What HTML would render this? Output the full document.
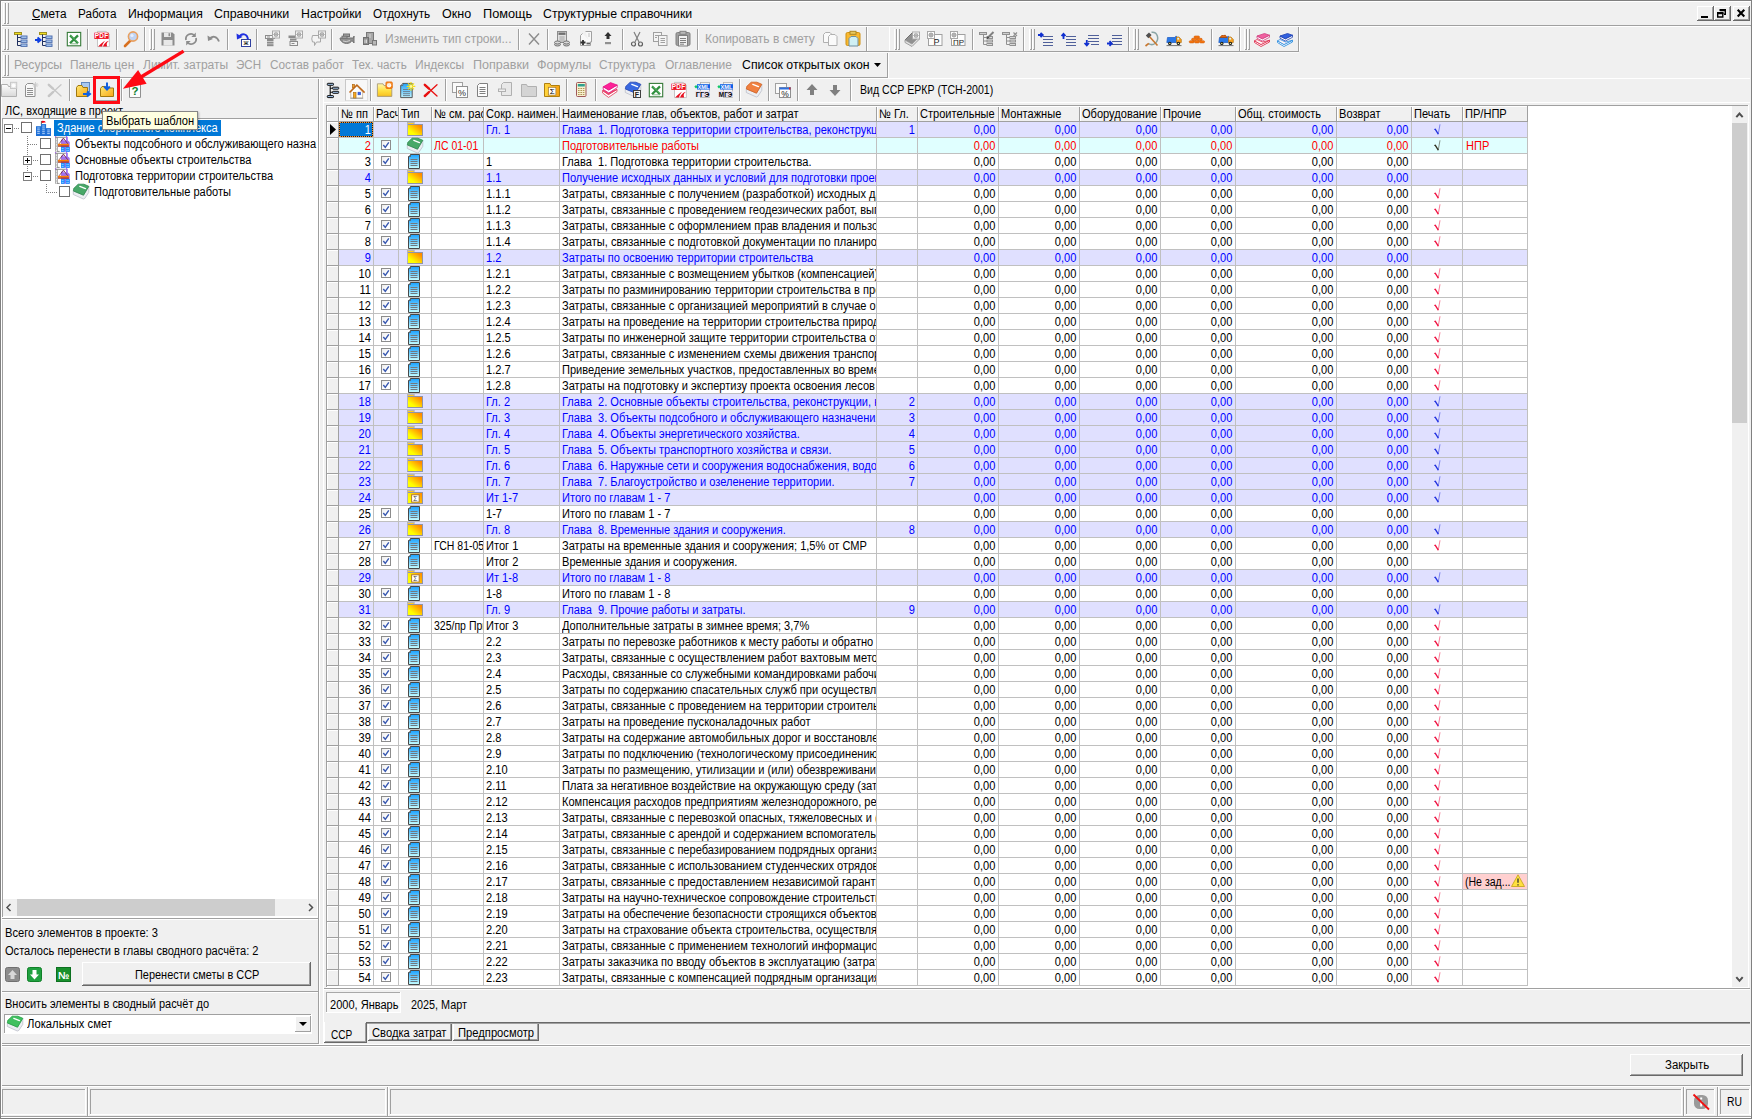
<!DOCTYPE html>
<html lang="ru"><head><meta charset="utf-8"><title>Сводный сметный расчёт</title>
<style>
html,body{margin:0;padding:0}
body{width:1752px;height:1119px;background:#f0f0f0;position:relative;overflow:hidden;font-family:"Liberation Sans",sans-serif;}
body div,body svg,body span.t{position:absolute;}
span.t{white-space:pre;display:block;}
svg{overflow:visible}
.clip{overflow:hidden}
</style></head><body>
<div style="left:0px;top:0px;width:1752px;height:1px;background:#808080;"></div><div style="left:0px;top:0px;width:1px;height:1119px;background:#808080;"></div><div style="left:1px;top:1px;width:1750px;height:1px;background:#fff;"></div><div style="left:1px;top:1px;width:1px;height:1117px;background:#fff;"></div><div style="left:1751px;top:0px;width:1px;height:1119px;background:#808080;"></div><div style="left:0px;top:1118px;width:1752px;height:1px;background:#808080;"></div><div style="left:1750px;top:1086px;width:1px;height:31px;background:#fff;"></div><div style="left:1px;top:1117px;width:1750px;height:1px;background:#fff;"></div><div style="left:1px;top:1116px;width:1750px;height:1px;background:#a0a0a0;"></div><div style="left:3px;top:3px;width:1px;height:21px;background:#fff;"></div><div style="left:5px;top:3px;width:1px;height:21px;background:#a0a0a0;"></div><div style="left:4px;top:23px;width:2px;height:1px;background:#a0a0a0;"></div><div style="left:6px;top:3px;width:1px;height:21px;background:#fff;"></div><div style="left:8px;top:3px;width:1px;height:21px;background:#a0a0a0;"></div><div style="left:7px;top:23px;width:2px;height:1px;background:#a0a0a0;"></div><div style="left:2px;top:25px;width:1749px;height:1px;background:#a0a0a0;"></div><div style="left:2px;top:26px;width:1748px;height:1px;background:#fff;"></div><div style="left:1697px;top:6px;width:17px;height:15px;background:#f0f0f0;"></div><div style="left:1697px;top:6px;width:16px;height:1px;background:#fff;"></div><div style="left:1697px;top:6px;width:1px;height:14px;background:#fff;"></div><div style="left:1697px;top:20px;width:17px;height:1px;background:#696969;"></div><div style="left:1713px;top:6px;width:1px;height:15px;background:#696969;"></div><div style="left:1698px;top:19px;width:15px;height:1px;background:#a0a0a0;"></div><div style="left:1712px;top:7px;width:1px;height:13px;background:#a0a0a0;"></div><div style="left:1714px;top:6px;width:17px;height:15px;background:#f0f0f0;"></div><div style="left:1714px;top:6px;width:16px;height:1px;background:#fff;"></div><div style="left:1714px;top:6px;width:1px;height:14px;background:#fff;"></div><div style="left:1714px;top:20px;width:17px;height:1px;background:#696969;"></div><div style="left:1730px;top:6px;width:1px;height:15px;background:#696969;"></div><div style="left:1715px;top:19px;width:15px;height:1px;background:#a0a0a0;"></div><div style="left:1729px;top:7px;width:1px;height:13px;background:#a0a0a0;"></div><div style="left:1733px;top:6px;width:17px;height:15px;background:#f0f0f0;"></div><div style="left:1733px;top:6px;width:16px;height:1px;background:#fff;"></div><div style="left:1733px;top:6px;width:1px;height:14px;background:#fff;"></div><div style="left:1733px;top:20px;width:17px;height:1px;background:#696969;"></div><div style="left:1749px;top:6px;width:1px;height:15px;background:#696969;"></div><div style="left:1734px;top:19px;width:15px;height:1px;background:#a0a0a0;"></div><div style="left:1748px;top:7px;width:1px;height:13px;background:#a0a0a0;"></div><svg style="left:1697px;top:6px" width="54" height="15" viewBox="0 0 54 15"><rect x="4" y="10" width="7" height="2" fill="#000"/><path d="M23.2 4.5H28.3V8.3H27M20.7 7.5H25.8V11H20.7Z" fill="none" stroke="#000" stroke-width="1.4"/><rect x="22.5" y="3" width="6.5" height="2" fill="#000"/><rect x="20" y="6" width="6.5" height="2" fill="#000"/><path d="M40.7 3.8L47.3 10.6M47.3 3.8L40.7 10.6" stroke="#000" stroke-width="2.1"/></svg><div style="left:2px;top:51px;width:1297px;height:1px;background:#a0a0a0;"></div><div style="left:2px;top:52px;width:1297px;height:1px;background:#fafafa;"></div><div style="left:3px;top:29px;width:1px;height:21px;background:#fff;"></div><div style="left:5px;top:29px;width:1px;height:21px;background:#a0a0a0;"></div><div style="left:4px;top:49px;width:2px;height:1px;background:#a0a0a0;"></div><div style="left:6px;top:29px;width:1px;height:21px;background:#fff;"></div><div style="left:8px;top:29px;width:1px;height:21px;background:#a0a0a0;"></div><div style="left:7px;top:49px;width:2px;height:1px;background:#a0a0a0;"></div><svg style="left:13px;top:31px" width="16" height="16" viewBox="0 0 16 16"><g transform="translate(0,1)"><rect x="1" y="0" width="7" height="2" fill="#f0e020" stroke="#a09020" shape-rendering="crispEdges"/><path d="M4.5 2.5V13.5M4.5 5.5H8M4.5 9.5H8M4.5 13.5H8" fill="none" stroke="#203060" stroke-width="1" /><rect x="8" y="4" width="6" height="2.4" fill="#a8c8f0" stroke="#5070b0" /><rect x="8" y="8" width="6" height="2.4" fill="#a8c8f0" stroke="#5070b0" /><rect x="8" y="12" width="6" height="2.4" fill="#a8c8f0" stroke="#5070b0" /></g></svg><svg style="left:36px;top:31px" width="16" height="16" viewBox="0 0 16 16"><g transform="translate(0,1)"><g transform="translate(2,0)"><rect x="1" y="0" width="7" height="2" fill="#f0e020" stroke="#a09020" shape-rendering="crispEdges"/><path d="M4.5 2.5V13.5M4.5 5.5H8M4.5 9.5H8M4.5 13.5H8" fill="none" stroke="#203060" stroke-width="1" /><rect x="8" y="4" width="6" height="2.4" fill="#a8c8f0" stroke="#5070b0" /><rect x="8" y="8" width="6" height="2.4" fill="#a8c8f0" stroke="#5070b0" /><rect x="8" y="12" width="6" height="2.4" fill="#a8c8f0" stroke="#5070b0" /></g><path d="M-1 8H3M1.5 5.5L4.5 8L1.5 10.5" fill="none" stroke="#1040e0" stroke-width="2" /></g></svg><div style="left:58px;top:29px;width:1px;height:21px;background:#a0a0a0;"></div><div style="left:59px;top:29px;width:1px;height:21px;background:#fff;"></div><svg style="left:65.5px;top:31px" width="16" height="16" viewBox="0 0 16 16"><rect x="1.3" y="1.4" width="13.4" height="13.4" fill="#fff" stroke="#357a38" stroke-width="1.1"/><path d="M4 4.4L12 12.2M12 4.4L4 12.2" fill="none" stroke="#2f8f3e" stroke-width="2.3" /><path d="M4.6 4.2L12.4 11.8" fill="none" stroke="#7cc884" stroke-width="0.7" /><path d="M4.5 12.8H12" fill="none" stroke="#6aa870" stroke-width="0.8" /></svg><div style="left:87px;top:29px;width:1px;height:21px;background:#a0a0a0;"></div><div style="left:88px;top:29px;width:1px;height:21px;background:#fff;"></div><svg style="left:94px;top:31px" width="16" height="16" viewBox="0 0 16 16"><path d="M3.5 0.4H12L15.4 3V15.6H3.5Z" fill="#fff" stroke="#b8b8b8" stroke-width="0.8" /><rect x="0.3" y="1.7" width="14.4" height="6.2" fill="#ee1020" /><text x="7.5" y="7" font-size="6.4" fill="#fff" font-weight="bold" text-anchor="middle" font-family="Liberation Sans,sans-serif" letter-spacing="0.3">PDF</text><path d="M4.2 15.4C6.5 13.5 8.5 10.8 11.5 9.6C9.6 11.2 8.6 13.4 8 15.4ZM9 15.4C10 12.8 11.8 10.6 15 9.8C12.6 11.2 12.2 13.4 13.2 15.4Z" fill="#e81020" /></svg><div style="left:116px;top:29px;width:1px;height:21px;background:#a0a0a0;"></div><div style="left:117px;top:29px;width:1px;height:21px;background:#fff;"></div><svg style="left:123px;top:31px" width="16" height="16" viewBox="0 0 16 16"><path d="M8.5 8.5L2 15" fill="none" stroke="#d87020" stroke-width="2.6" stroke-linecap="round"/><circle cx="10" cy="5.5" r="4.6" fill="#c0d4f4" stroke="#e8a060" stroke-width="1.6"/><circle cx="9" cy="4.5" r="1.6" fill="#e8f0ff"/></svg><div style="left:144px;top:27px;width:1px;height:24px;background:#a0a0a0;"></div><div style="left:145px;top:27px;width:1px;height:24px;background:#fff;"></div><div style="left:149px;top:29px;width:1px;height:21px;background:#fff;"></div><div style="left:151px;top:29px;width:1px;height:21px;background:#a0a0a0;"></div><div style="left:150px;top:49px;width:2px;height:1px;background:#a0a0a0;"></div><div style="left:152px;top:29px;width:1px;height:21px;background:#fff;"></div><div style="left:154px;top:29px;width:1px;height:21px;background:#a0a0a0;"></div><div style="left:153px;top:49px;width:2px;height:1px;background:#a0a0a0;"></div><svg style="left:160px;top:31px" width="16" height="16" viewBox="0 0 16 16"><path d="M1.5 1.5H12.5L14.5 3.5V14.5H1.5Z" fill="#8c8c8c" /><rect x="4" y="1.5" width="7" height="4.5" fill="#e8e8e8" /><rect x="8.5" y="2.2" width="1.6" height="3" fill="#8c8c8c" /><rect x="3.5" y="9" width="9" height="5.5" fill="#e8e8e8" /></svg><svg style="left:183px;top:31px" width="16" height="16" viewBox="0 0 16 16"><path d="M3 9A5 5 0 0 1 11.5 4.5M13 7A5 5 0 0 1 4.5 11.5" fill="none" stroke="#8c8c8c" stroke-width="1.8" /><path d="M12.8 1.5V6H8.3ZM3.2 14.5V10H7.7Z" fill="#8c8c8c" /></svg><svg style="left:206px;top:31px" width="16" height="16" viewBox="0 0 16 16"><path d="M3.5 8C6 4.5 11 5 13 10.5" fill="none" stroke="#8c8c8c" stroke-width="1.8" /><path d="M1.5 4.5L2 10L7 8Z" fill="#8c8c8c" /></svg><div style="left:227px;top:29px;width:1px;height:21px;background:#a0a0a0;"></div><div style="left:228px;top:29px;width:1px;height:21px;background:#fff;"></div><svg style="left:235.5px;top:31px" width="16" height="16" viewBox="0 0 16 16"><path d="M3.5 6C5.5 2 11.5 2 12 9" fill="none" stroke="#2030e0" stroke-width="2" /><path d="M0.5 2.5L1 8.5L6.5 6Z" fill="#2030e0" /><rect x="5.5" y="8.5" width="9" height="7" fill="#fff" stroke="#3040a0" /><text x="10" y="14.4" font-size="7.5" fill="#000" text-anchor="middle" font-family="Liberation Sans,sans-serif" >ж</text></svg><div style="left:256px;top:29px;width:1px;height:21px;background:#a0a0a0;"></div><div style="left:257px;top:29px;width:1px;height:21px;background:#fff;"></div><svg style="left:264px;top:31px" width="16" height="16" viewBox="0 0 16 16"><rect x="1.5" y="4.5" width="9" height="3" fill="#f4f4f4" stroke="#8c8c8c" /><path d="M3 6H6" fill="none" stroke="#8c8c8c" stroke-width="1" /><rect x="3" y="8" width="6.5" height="2" fill="#8c8c8c" /><rect x="3" y="10.6" width="6.5" height="2" fill="#8c8c8c" /><rect x="3" y="13.2" width="6.5" height="2" fill="#8c8c8c" /><rect x="8.5" y="0" width="7" height="7" fill="#fff" stroke="#a8a8a8" /><circle cx="12.0" cy="3.5" r="1.8" fill="none" stroke="#a8a8a8" stroke-width="1.1"/><path d="M12.0 0.6V6.4M9.1 3.5H14.9M9.9 1.4L14.1 5.6M14.1 1.4L9.9 5.6" fill="none" stroke="#a8a8a8" stroke-width="0.7" /></svg><svg style="left:287px;top:31px" width="16" height="16" viewBox="0 0 16 16"><rect x="1.5" y="4.5" width="9" height="2.6" fill="#8c8c8c" /><rect x="3" y="7.6" width="6.5" height="2" fill="#8c8c8c" /><rect x="3" y="10.5" width="7.5" height="4" fill="#f4f4f4" stroke="#8c8c8c" /><path d="M4.5 12.5H7.5" fill="none" stroke="#8c8c8c" stroke-width="1" /><rect x="8.5" y="0" width="7" height="7" fill="#fff" stroke="#a8a8a8" /><circle cx="12.0" cy="3.5" r="1.8" fill="none" stroke="#a8a8a8" stroke-width="1.1"/><path d="M12.0 0.6V6.4M9.1 3.5H14.9M9.9 1.4L14.1 5.6M14.1 1.4L9.9 5.6" fill="none" stroke="#a8a8a8" stroke-width="0.7" /></svg><svg style="left:310px;top:31px" width="16" height="16" viewBox="0 0 16 16"><path d="M2.5 4.5H10.5V11H6.5L4.5 14.5V11H2.5Q1 8 2.5 4.5Z" fill="#f4f4f4" stroke="#a8a8a8" stroke-width="1" /><rect x="8.5" y="0" width="7" height="7" fill="#fff" stroke="#a8a8a8" /><circle cx="12.0" cy="3.5" r="1.8" fill="none" stroke="#a8a8a8" stroke-width="1.1"/><path d="M12.0 0.6V6.4M9.1 3.5H14.9M9.9 1.4L14.1 5.6M14.1 1.4L9.9 5.6" fill="none" stroke="#a8a8a8" stroke-width="0.7" /></svg><div style="left:331px;top:29px;width:1px;height:21px;background:#a0a0a0;"></div><div style="left:332px;top:29px;width:1px;height:21px;background:#fff;"></div><svg style="left:338.5px;top:31px" width="16" height="16" viewBox="0 0 16 16"><path d="M1 7H14.5L15 5V12L13 9.5C11 13.5 4 13.5 1.5 9Z" fill="#909090" stroke="#707070" stroke-width="1" /><rect x="4.5" y="3" width="6" height="2.5" fill="#a0a0a0" stroke="#707070" /><rect x="3" y="5.2" width="5" height="2" fill="#b0b0b0" stroke="#707070" /><path d="M4 10Q7 11.5 11 9.5" fill="none" stroke="#d0d0d0" stroke-width="1" /></svg><svg style="left:361.5px;top:31px" width="16" height="16" viewBox="0 0 16 16"><rect x="4.5" y="1.5" width="7" height="11" fill="#a8a8a8" stroke="#787878" /><rect x="1.5" y="6.5" width="5" height="7" fill="#909090" stroke="#707070" /><rect x="10.5" y="9.5" width="4" height="4.5" fill="#b8b8b8" stroke="#787878" /><path d="M7 4H9M7 6H9M3 8.5V12M4.5 8.5V12" fill="none" stroke="#d8d8d8" stroke-width="1" /></svg><div style="left:518px;top:29px;width:1px;height:21px;background:#a0a0a0;"></div><div style="left:519px;top:29px;width:1px;height:21px;background:#fff;"></div><svg style="left:526px;top:31px" width="16" height="16" viewBox="0 0 16 16"><path d="M3 2.5L13 13.5M13 2.5L3 13.5" fill="none" stroke="#8c8c8c" stroke-width="1.4" /></svg><div style="left:547px;top:29px;width:1px;height:21px;background:#a0a0a0;"></div><div style="left:548px;top:29px;width:1px;height:21px;background:#fff;"></div><svg style="left:554px;top:31px" width="16" height="16" viewBox="0 0 16 16"><rect x="3.5" y="0.5" width="9" height="11" fill="#e0e0e0" stroke="#8c8c8c" /><rect x="4.5" y="1.5" width="7" height="2.4" fill="#707070" /><path d="M5 6H11M5 8H11M5 10H11M7 5V11M9 5V11" fill="none" stroke="#b0b0b0" stroke-width="0.8" /><ellipse cx="3.5" cy="13.5" rx="3" ry="1.5" fill="#c8c8c8" stroke="#707070"/><ellipse cx="3.5" cy="11.5" rx="3" ry="1.5" fill="#d8d8d8" stroke="#707070"/><ellipse cx="12.5" cy="13.5" rx="3" ry="1.5" fill="#c8c8c8" stroke="#707070"/><ellipse cx="12.5" cy="11.5" rx="3" ry="1.5" fill="#d8d8d8" stroke="#707070"/></svg><svg style="left:577.5px;top:31px" width="16" height="16" viewBox="0 0 16 16"><path d="M7.5 0.5H13.5V11H11" fill="#f8f8f8" stroke="#a0a0a0" stroke-width="1" /><path d="M4.5 2.5L2.5 4.5V14.5H12.5V11" fill="#f8f8f8" stroke="#a0a0a0" stroke-width="1" /><path d="M2.5 11.5H7.5M5 9V14" fill="none" stroke="#303030" stroke-width="1.8" /><path d="M8.5 12.5H12" fill="none" stroke="#606060" stroke-width="1.8" /><path d="M10 3H12M10 5H12" fill="none" stroke="#c0c0c0" stroke-width="1" /></svg><svg style="left:600px;top:31px" width="16" height="16" viewBox="0 0 16 16"><path d="M8 1L11.5 5H9.5V8H6.5V5H4.5Z" fill="#303030" /><rect x="5" y="11" width="6" height="2.2" fill="#909090" /></svg><div style="left:622px;top:29px;width:1px;height:21px;background:#a0a0a0;"></div><div style="left:623px;top:29px;width:1px;height:21px;background:#fff;"></div><svg style="left:629px;top:31px" width="16" height="16" viewBox="0 0 16 16"><path d="M5 1L10 11M11 1L6 11" fill="none" stroke="#808080" stroke-width="1.2" /><circle cx="4.5" cy="13" r="2" fill="#f0f0f0" stroke="#606060" stroke-width="1.2"/><circle cx="11.5" cy="13" r="2" fill="#f0f0f0" stroke="#606060" stroke-width="1.2"/></svg><svg style="left:652px;top:31px" width="16" height="16" viewBox="0 0 16 16"><rect x="1.5" y="1.5" width="8" height="9" fill="#f4f4f4" stroke="#a0a0a0" /><rect x="6.5" y="4.5" width="8.5" height="10" fill="#f4f4f4" stroke="#a0a0a0" /><path d="M8.5 7.5H13M8.5 9.5H13M8.5 11.5H13M3 4.5H6M3 6.5H5" fill="none" stroke="#a0a0a0" stroke-width="1" /></svg><svg style="left:675px;top:31px" width="16" height="16" viewBox="0 0 16 16"><rect x="1" y="1.5" width="14" height="13" fill="#a0a0a0" stroke="#808080" rx="1.5"/><rect x="5" y="0.3" width="6" height="3" fill="#b8b8b8" stroke="#808080" /><rect x="3.5" y="4.5" width="9" height="10.5" fill="#f0f0f0" stroke="#808080" /><path d="M5 7.5H11M5 9.5H11M5 11.5H11M5 13.2H9" fill="none" stroke="#808080" stroke-width="1" /></svg><div style="left:697px;top:29px;width:1px;height:21px;background:#a0a0a0;"></div><div style="left:698px;top:29px;width:1px;height:21px;background:#fff;"></div><svg style="left:822px;top:31px" width="16" height="16" viewBox="0 0 16 16"><path d="M3.5 1.5H8L10 3.5V11.5H1.5V3.5Z" fill="#fafafa" stroke="#b0b0b0" stroke-width="1" /><path d="M8.5 3.5H13L15 5.5V14.5H6.5V5.5Z" fill="#fafafa" stroke="#b0b0b0" stroke-width="1" /></svg><svg style="left:845px;top:31px" width="16" height="16" viewBox="0 0 16 16"><rect x="1" y="1.5" width="14" height="13" fill="#f8b830" stroke="#d09010" rx="1.5"/><rect x="5" y="0.3" width="6" height="3" fill="#e8c860" stroke="#b08820" /><path d="M6 5.5H11L13 7.5V15H4V7.5Z" fill="#d0f0f4" stroke="#7090a0" stroke-width="1" /></svg><div style="left:866px;top:27px;width:1px;height:24px;background:#a0a0a0;"></div><div style="left:867px;top:27px;width:1px;height:24px;background:#fff;"></div><div style="left:889px;top:27px;width:1px;height:24px;background:#fff;"></div><div style="left:894px;top:29px;width:1px;height:21px;background:#fff;"></div><div style="left:896px;top:29px;width:1px;height:21px;background:#a0a0a0;"></div><div style="left:895px;top:49px;width:2px;height:1px;background:#a0a0a0;"></div><div style="left:897px;top:29px;width:1px;height:21px;background:#fff;"></div><div style="left:899px;top:29px;width:1px;height:21px;background:#a0a0a0;"></div><div style="left:898px;top:49px;width:2px;height:1px;background:#a0a0a0;"></div><svg style="left:904px;top:31px" width="16" height="16" viewBox="0 0 16 16"><path d="M1 9L8 2L15 6L8 13Z" fill="#909090" stroke="#707070" stroke-width="1" /><path d="M1 9V11.5L8 15.5L15 8.5V6L8 13Z" fill="#e0e0e0" stroke="#a0a0a0" stroke-width="1" /><rect x="8.5" y="1" width="7" height="7" fill="#fff" stroke="#a8a8a8" /><circle cx="12.0" cy="4.5" r="1.8" fill="none" stroke="#a8a8a8" stroke-width="1.1"/><path d="M12.0 1.6V7.4M9.1 4.5H14.9M9.9 2.4L14.1 6.6M14.1 2.4L9.9 6.6" fill="none" stroke="#a8a8a8" stroke-width="0.7" /></svg><svg style="left:927px;top:31px" width="16" height="16" viewBox="0 0 16 16"><rect x="1.5" y="3.5" width="13.5" height="11" fill="#fdfdfd" stroke="#a0a0a0" /><rect x="0.5" y="0.5" width="7" height="7" fill="#fff" stroke="#a8a8a8" /><circle cx="4.0" cy="4.0" r="1.8" fill="none" stroke="#a8a8a8" stroke-width="1.1"/><path d="M4.0 1.1V6.9M1.1 4.0H6.9M1.9 1.9L6.1 6.1M6.1 1.9L1.9 6.1" fill="none" stroke="#a8a8a8" stroke-width="0.7" /><text x="9.5" y="13.5" font-size="9" fill="#202020" text-anchor="middle" font-family="Liberation Sans,sans-serif" >Р</text></svg><svg style="left:950px;top:31px" width="16" height="16" viewBox="0 0 16 16"><rect x="1.5" y="3.5" width="13.5" height="11" fill="#fdfdfd" stroke="#a0a0a0" /><rect x="0.5" y="0.5" width="7" height="7" fill="#fff" stroke="#a8a8a8" /><circle cx="4.0" cy="4.0" r="1.8" fill="none" stroke="#a8a8a8" stroke-width="1.1"/><path d="M4.0 1.1V6.9M1.1 4.0H6.9M1.9 1.9L6.1 6.1M6.1 1.9L1.9 6.1" fill="none" stroke="#a8a8a8" stroke-width="0.7" /><text x="8.5" y="13.8" font-size="8" fill="#202020" text-anchor="middle" font-family="Liberation Sans,sans-serif" textLength="11" lengthAdjust="spacingAndGlyphs">ПР</text></svg><div style="left:972px;top:29px;width:1px;height:21px;background:#a0a0a0;"></div><div style="left:973px;top:29px;width:1px;height:21px;background:#fff;"></div><svg style="left:979px;top:31px" width="16" height="16" viewBox="0 0 16 16"><rect x="0.5" y="1.5" width="7" height="2" fill="#d0d0d0" stroke="#909090" /><path d="M4.5 3.5V13.5M4.5 6.5H8M4.5 10H8M4.5 13.5H8" fill="none" stroke="#909090" stroke-width="1" /><rect x="8" y="5.5" width="5.5" height="2" fill="#d8d8d8" stroke="#909090" /><rect x="8" y="9" width="5.5" height="2" fill="#d8d8d8" stroke="#909090" /><rect x="8" y="12.5" width="5.5" height="2" fill="#d8d8d8" stroke="#909090" /><path d="M9 6.5L14.5 1" fill="none" stroke="#808080" stroke-width="2" /><path d="M8 7.5L9.5 6" fill="none" stroke="#404040" stroke-width="1.5" /></svg><svg style="left:1002px;top:31px" width="16" height="16" viewBox="0 0 16 16"><rect x="0.5" y="1.5" width="7" height="2" fill="#d0d0d0" stroke="#909090" /><path d="M4.5 3.5V13.5M4.5 6.5H8M4.5 10H8M4.5 13.5H8" fill="none" stroke="#909090" stroke-width="1" /><rect x="8" y="5.5" width="5.5" height="2" fill="#d8d8d8" stroke="#909090" /><rect x="8" y="9" width="5.5" height="2" fill="#d8d8d8" stroke="#909090" /><rect x="8" y="12.5" width="5.5" height="2" fill="#d8d8d8" stroke="#909090" /><path d="M11.5 1.5L15 5M15 1.5L11.5 5" fill="none" stroke="#909090" stroke-width="1.2" /></svg><div style="left:1023px;top:27px;width:1px;height:24px;background:#a0a0a0;"></div><div style="left:1024px;top:27px;width:1px;height:24px;background:#fff;"></div><div style="left:1029px;top:29px;width:1px;height:21px;background:#fff;"></div><div style="left:1031px;top:29px;width:1px;height:21px;background:#a0a0a0;"></div><div style="left:1030px;top:49px;width:2px;height:1px;background:#a0a0a0;"></div><div style="left:1032px;top:29px;width:1px;height:21px;background:#fff;"></div><div style="left:1034px;top:29px;width:1px;height:21px;background:#a0a0a0;"></div><div style="left:1033px;top:49px;width:2px;height:1px;background:#a0a0a0;"></div><svg style="left:1038px;top:31px" width="16" height="16" viewBox="0 0 16 16"><g transform="translate(0,1)"><path d="M5 4.5H15M5 7.5H15M5 10.5H15M5 13.5H15" fill="none" stroke="#50609a" stroke-width="1" /><path d="M0 3H4M2.5 0.8L4.8 3L2.5 5.2" fill="none" stroke="#1030d0" stroke-width="1.8" /></g></svg><svg style="left:1061px;top:31px" width="16" height="16" viewBox="0 0 16 16"><g transform="translate(0,1)"><path d="M5 4.5H15M5 7.5H15M5 10.5H15M5 13.5H15" fill="none" stroke="#50609a" stroke-width="1" /><path d="M2.5 7V2M0.5 4L2.5 1.8L4.5 4" fill="none" stroke="#1030d0" stroke-width="1.8" /></g></svg><svg style="left:1084px;top:31px" width="16" height="16" viewBox="0 0 16 16"><g transform="translate(0,1)"><path d="M4 3.5H15M4 6.5H15M4 9.5H15M7 12.5H15" fill="none" stroke="#50609a" stroke-width="1" /><path d="M2.8 8V13M0.5 11L2.8 13.5L5 11" fill="none" stroke="#1030d0" stroke-width="1.8" /></g></svg><svg style="left:1107px;top:31px" width="16" height="16" viewBox="0 0 16 16"><g transform="translate(0,1)"><path d="M5 3.5H15M5 6.5H15M5 9.5H15M5 12.5H15" fill="none" stroke="#50609a" stroke-width="1" /><path d="M0 11.5H4M2.5 9.2L4.8 11.5L2.5 13.8" fill="none" stroke="#1030d0" stroke-width="1.8" /></g></svg><div style="left:1128px;top:27px;width:1px;height:24px;background:#a0a0a0;"></div><div style="left:1129px;top:27px;width:1px;height:24px;background:#fff;"></div><div style="left:1133px;top:29px;width:1px;height:21px;background:#fff;"></div><div style="left:1135px;top:29px;width:1px;height:21px;background:#a0a0a0;"></div><div style="left:1134px;top:49px;width:2px;height:1px;background:#a0a0a0;"></div><div style="left:1136px;top:29px;width:1px;height:21px;background:#fff;"></div><div style="left:1138px;top:29px;width:1px;height:21px;background:#a0a0a0;"></div><div style="left:1137px;top:49px;width:2px;height:1px;background:#a0a0a0;"></div><svg style="left:1143.5px;top:31px" width="16" height="16" viewBox="0 0 16 16"><path d="M7.5 1.2C13.5 0.5 16 8 11 12.5C9 14 6.5 13.8 4.5 12.6" fill="none" stroke="#8aa4a4" stroke-width="1.5" /><path d="M4.8 12.4L1.5 15" fill="none" stroke="#c87830" stroke-width="1.7" /><path d="M4.5 4.5L13.5 14.5" fill="none" stroke="#c87830" stroke-width="1.6" /><path d="M1.8 4.6L5 1.4L7.6 4L4.4 7.2Z" fill="#505050" /></svg><svg style="left:1166px;top:31px" width="16" height="16" viewBox="0 0 16 16"><path d="M1.5 6.5H8.8L9.8 5.3H10.5V11.5H0.8Z" fill="#2a78e8" stroke="#1858c0" stroke-width="0.7" /><path d="M10.5 6H13L15.3 8.6V11.5H10.5Z" fill="#f8a020" stroke="#b07010" stroke-width="0.7" /><rect x="11.3" y="6.8" width="1.8" height="1.8" fill="#d8f4ff" /><circle cx="3.8" cy="12.4" r="1.7" fill="#181818"/><circle cx="12.4" cy="12.4" r="1.7" fill="#181818"/><circle cx="3.8" cy="12.4" r="0.7" fill="#f0f090"/><circle cx="12.4" cy="12.4" r="0.7" fill="#f0f090"/><path d="M0.5 14.6H15.5" fill="none" stroke="#505050" stroke-width="0.8" /></svg><svg style="left:1189px;top:31px" width="16" height="16" viewBox="0 0 16 16"><rect x="5" y="5" width="5.5" height="2.2" fill="#f87810" stroke="#d05800" rx="1.1" stroke-width="0.6"/><rect x="2.6" y="7.3" width="5.2" height="2.2" fill="#f87810" stroke="#d05800" rx="1.1" stroke-width="0.6"/><rect x="8" y="7.3" width="5.2" height="2.2" fill="#f87810" stroke="#d05800" rx="1.1" stroke-width="0.6"/><rect x="0.2" y="9.7" width="5" height="2.2" fill="#f87810" stroke="#d05800" rx="1.1" stroke-width="0.6"/><rect x="5.4" y="9.7" width="5" height="2.2" fill="#f87810" stroke="#d05800" rx="1.1" stroke-width="0.6"/><rect x="10.6" y="9.7" width="5" height="2.2" fill="#f87810" stroke="#d05800" rx="1.1" stroke-width="0.6"/></svg><div style="left:1211px;top:29px;width:1px;height:21px;background:#a0a0a0;"></div><div style="left:1212px;top:29px;width:1px;height:21px;background:#fff;"></div><svg style="left:1218px;top:31px" width="16" height="16" viewBox="0 0 16 16"><path d="M1.5 6.5H8.8L9.8 5.3H10.5V11.5H0.8Z" fill="#2a78e8" stroke="#1858c0" stroke-width="0.7" /><path d="M10.5 6H13L15.3 8.6V11.5H10.5Z" fill="#f8a020" stroke="#b07010" stroke-width="0.7" /><rect x="11.3" y="6.8" width="1.8" height="1.8" fill="#d8f4ff" /><circle cx="3.8" cy="12.4" r="1.7" fill="#181818"/><circle cx="12.4" cy="12.4" r="1.7" fill="#181818"/><circle cx="3.8" cy="12.4" r="0.7" fill="#f0f090"/><circle cx="12.4" cy="12.4" r="0.7" fill="#f0f090"/><path d="M0.5 14.6H15.5" fill="none" stroke="#505050" stroke-width="0.8" /><path d="M2 6.5Q3.5 3.5 5.5 4.5Q7.5 3 9 6.5Z" fill="#e86810" stroke="#a04000" stroke-width="0.7" /></svg><div style="left:1239px;top:27px;width:1px;height:24px;background:#a0a0a0;"></div><div style="left:1240px;top:27px;width:1px;height:24px;background:#fff;"></div><div style="left:1244px;top:29px;width:1px;height:21px;background:#fff;"></div><div style="left:1246px;top:29px;width:1px;height:21px;background:#a0a0a0;"></div><div style="left:1245px;top:49px;width:2px;height:1px;background:#a0a0a0;"></div><div style="left:1247px;top:29px;width:1px;height:21px;background:#fff;"></div><div style="left:1249px;top:29px;width:1px;height:21px;background:#a0a0a0;"></div><div style="left:1248px;top:49px;width:2px;height:1px;background:#a0a0a0;"></div><svg style="left:1254px;top:31px" width="16" height="16" viewBox="0 0 16 16"><path d="M0.5 9.8V11.5L7 15.5L15.5 11V9.3L7 13.5Z" fill="#fff" stroke="#e03050" stroke-width="0.9" /><path d="M0.5 9.8L3 8.5L8.5 11L15.5 9.3L7 13.5Z" fill="#fff4f6" stroke="#e03050" stroke-width="0.8" /><path d="M3 5V7.2L8.3 10L15.5 6.3V4.2L8.3 7.8Z" fill="#fff" stroke="#d04080" stroke-width="0.8" /><path d="M3 5L10.5 2.5L15.5 4.2L8.3 7.8Z" fill="#f060a0" stroke="#d04080" stroke-width="0.8" /></svg><svg style="left:1277px;top:31px" width="16" height="16" viewBox="0 0 16 16"><path d="M0.5 9.8V11.5L7 15.5L15.5 11V9.3L7 13.5Z" fill="#fff" stroke="#3090e0" stroke-width="0.9" /><path d="M0.5 9.8L3 8.5L8.5 11L15.5 9.3L7 13.5Z" fill="#fff4f6" stroke="#3090e0" stroke-width="0.8" /><path d="M3 5V7.2L8.3 10L15.5 6.3V4.2L8.3 7.8Z" fill="#fff" stroke="#2040b0" stroke-width="0.8" /><path d="M3 5L10.5 2.5L15.5 4.2L8.3 7.8Z" fill="#3060e0" stroke="#2040b0" stroke-width="0.8" /></svg><div style="left:1298px;top:27px;width:1px;height:24px;background:#a0a0a0;"></div><div style="left:1299px;top:27px;width:1px;height:24px;background:#fff;"></div><div style="left:3px;top:55px;width:1px;height:21px;background:#fff;"></div><div style="left:5px;top:55px;width:1px;height:21px;background:#a0a0a0;"></div><div style="left:4px;top:75px;width:2px;height:1px;background:#a0a0a0;"></div><div style="left:6px;top:55px;width:1px;height:21px;background:#fff;"></div><div style="left:8px;top:55px;width:1px;height:21px;background:#a0a0a0;"></div><div style="left:7px;top:75px;width:2px;height:1px;background:#a0a0a0;"></div><div style="left:2px;top:77px;width:886px;height:1px;background:#a0a0a0;"></div><div style="left:2px;top:78px;width:1748px;height:1px;background:#fff;"></div><div style="left:887px;top:53px;width:1px;height:25px;background:#a0a0a0;"></div><div style="left:888px;top:53px;width:1px;height:25px;background:#fff;"></div><svg style="left:874px;top:63px" width="7" height="4" viewBox="0 0 7 4"><path d="M0 0H7L3.5 4Z" fill="#000"/></svg><svg style="left:0.8px;top:82px" width="16" height="16" viewBox="0 0 16 16"><linearGradient id="fng" x1="0" y1="0" x2="0" y2="1"><stop offset="0" stop-color="#fdfdfd"/><stop offset="1" stop-color="#d8d8d8"/></linearGradient><path d="M0.5 2.5H6.5L7.5 4.5H15.5V14.5H0.5Z" fill="url(#fng)" stroke="#b0b0b0" stroke-width="1" /><rect x="9.5" y="0.3" width="6.2" height="6.2" fill="#e8e8e8" stroke="#c8c8c8" /><circle cx="12.6" cy="3.4" r="1.5" fill="#fff" stroke="#fff" stroke-width="1"/></svg><svg style="left:23.3px;top:82px" width="16" height="16" viewBox="0 0 16 16"><path d="M4.5 1.5H10L12 3.5V14.5H2.5V3.5Z" fill="#f8f8f8" stroke="#909090" stroke-width="1" /><path d="M4 6.5H10M4 8.5H10M4 10.5H10M4 12.5H10" fill="none" stroke="#909090" stroke-width="1" /><path d="M12.5 0V6M9.5 3H15.5M10.5 1L14.5 5M14.5 1L10.5 5" fill="none" stroke="#c8c8c8" stroke-width="0.8" /></svg><svg style="left:47px;top:82px" width="16" height="16" viewBox="0 0 16 16"><path d="M1.8 2.8L14 14" fill="none" stroke="#c6c6c6" stroke-width="1.3" stroke-linecap="round"/><path d="M14 2.8L1.8 14" fill="none" stroke="#c6c6c6" stroke-width="1.3" stroke-linecap="round"/><path d="M1.8 2.8L6 6.6M1.8 14L6 10.2" fill="none" stroke="#c6c6c6" stroke-width="2.4" stroke-linecap="round"/></svg><div style="left:69px;top:79px;width:1px;height:22px;background:#a0a0a0;"></div><div style="left:70px;top:79px;width:1px;height:22px;background:#fff;"></div><svg style="left:76px;top:82px" width="16" height="16" viewBox="0 0 16 16"><linearGradient id="fgr" x1="0" y1="0" x2="1" y2="1"><stop offset="0" stop-color="#ffe870"/><stop offset="1" stop-color="#f8a818"/></linearGradient><rect x="5.5" y="0.5" width="8" height="9" fill="#a8c8f0" stroke="#6088c0" /><path d="M0.5 5.5L2 3.5H6L7 5.5H11.5V14.5H0.5Z" fill="url(#fgr)" stroke="#a07810" stroke-width="1" /><path d="M7 12H13M11 9.5L14 12L11 14.5" fill="none" stroke="#1060e0" stroke-width="2" /></svg><svg style="left:99px;top:82px" width="16" height="16" viewBox="0 0 16 16"><linearGradient id="fgd" x1="0" y1="0" x2="1" y2="1"><stop offset="0" stop-color="#ffe870"/><stop offset="1" stop-color="#f8a818"/></linearGradient><path d="M1.5 6.5L3 4.5H6.5L7.5 6H14.5V14.5H1.5Z" fill="url(#fgd)" stroke="#a07810" stroke-width="1" /><path d="M8 0.5V7M5.2 4.5L8 7.5L10.8 4.5" fill="none" stroke="#1060e0" stroke-width="2" /></svg><div style="left:121px;top:79px;width:1px;height:22px;background:#a0a0a0;"></div><div style="left:122px;top:79px;width:1px;height:22px;background:#fff;"></div><svg style="left:127px;top:82px" width="16" height="16" viewBox="0 0 16 16"><path d="M2.5 0.5H11L13.5 3V15.5H2.5Z" fill="#fdfdfd" stroke="#909090" stroke-width="1" /><text x="8" y="12.5" font-size="11.5" fill="#108030" font-weight="bold" text-anchor="middle" font-family="Liberation Sans,sans-serif" >?</text></svg><div style="left:94px;top:100px;width:26px;height:1px;background:#a0a0a0;"></div><div style="left:318px;top:79px;width:1px;height:965px;background:#a0a0a0;"></div><div style="left:319px;top:79px;width:1px;height:965px;background:#fff;"></div><div style="left:2px;top:1043px;width:317px;height:1px;background:#a0a0a0;"></div><div style="left:2px;top:1044px;width:1748px;height:1px;background:#fff;"></div><div style="left:2px;top:118px;width:316px;height:800px;background:#fff;"></div><div style="left:2px;top:118px;width:316px;height:1px;background:#a0a0a0;"></div><div style="left:2px;top:118px;width:1px;height:800px;background:#a0a0a0;"></div><div style="left:2px;top:917px;width:316px;height:1px;background:#fff;"></div><div style="left:317px;top:118px;width:1px;height:800px;background:#fff;"></div><div style="left:317px;top:118px;width:1px;height:800px;background:#fff;"></div><div style="left:3px;top:899px;width:314px;height:17px;background:#f0f0f0;"></div><div style="left:17px;top:899px;width:258px;height:17px;background:#cdcdcd;"></div><svg style="left:3px;top:899px" width="314" height="17" viewBox="0 0 314 17"><path d="M7.5 5L4 8.5L7.5 12M306 5L309.5 8.5L306 12" fill="none" stroke="#505050" stroke-width="1.5"/></svg><div style="left:54px;top:120px;width:167px;height:16px;background:#0078d7;"></div><div style="left:4px;top:124px;width:9px;height:9px;background:#fff;border:1px solid #808080;box-sizing:border-box;"></div><div style="left:6px;top:128px;width:5px;height:1px;background:#000;"></div><div style="left:14px;top:128px;width:5px;height:1px;background:repeating-linear-gradient(90deg,#808080 0 1px,transparent 1px 2px);"></div><div style="left:21px;top:122px;width:11px;height:11px;background:#fff;border:1px solid #707070;box-sizing:border-box;"></div><svg style="left:36px;top:120px" width="16" height="16" viewBox="0 0 16 16"><rect x="0" y="6.2" width="5" height="9.8" fill="#1e6fd6" /><rect x="4.9" y="4.1" width="5.2" height="11.9" fill="#1e6fd6" /><rect x="10" y="8.1" width="5" height="7.9" fill="#1e6fd6" /><path d="M1.2 8H3.8M1.2 9.8H3.8M1.2 11.6H3.8M1.2 13.4H3.8M6.2 6H8.8M6.2 7.9H8.8M6.2 9.8H8.8M6.2 11.7H8.8M6.2 13.6H8.8M11.2 10H13.8M11.2 11.8H13.8M11.2 13.6H13.8" fill="none" stroke="#a8ccf8" stroke-width="1" /><path d="M5.4 1V4.2" fill="none" stroke="#303030" stroke-width="0.8" /><path d="M5.8 0.8L8.5 0.9L10 2.2L5.8 2.9Z" fill="#f00010" /></svg><div style="left:27px;top:136px;width:1px;height:36px;background:repeating-linear-gradient(180deg,#808080 0 1px,transparent 1px 2px);"></div><div style="left:28px;top:144px;width:10px;height:1px;background:repeating-linear-gradient(90deg,#808080 0 1px,transparent 1px 2px);"></div><div style="left:40px;top:138px;width:11px;height:11px;background:#fff;border:1px solid #707070;box-sizing:border-box;"></div><svg style="left:55px;top:136px" width="16" height="16" viewBox="0 0 16 16"><path d="M11 0.7H12.8V4.5L14.7 6V15.8H6V4L8.5 2.5V4.5H11Z" fill="#a070f0" /><path d="M0.8 1.3V15.8M2.2 1.3V15.8" fill="none" stroke="#808080" stroke-width="0.9" /><path d="M0 1.3H10.8M2.2 15.4H4.7" fill="none" stroke="#808080" stroke-width="0.9" /><path d="M1.5 2.5V15" fill="none" stroke="#fff" stroke-width="0.7" stroke-dasharray="1.4 1.4"/><path d="M4.1 7.8L8.4 2.1L12.8 7.8" fill="none" stroke="#702030" stroke-width="0.8" /><rect x="3" y="7.8" width="10.9" height="1.9" fill="#ff8000" /><rect x="3" y="9.5" width="10.9" height="1.2" fill="#a03020" /><rect x="6" y="11" width="3.6" height="4.8" fill="#1890ff" /><rect x="10.8" y="11" width="3.9" height="4.8" fill="#1890ff" /><path d="M6.8 12.4H9M6.8 14.4H9M11.6 12.4H14M11.6 14.4H14" fill="none" stroke="#d8ecff" stroke-width="0.9" stroke-dasharray="0.9 0.9"/><circle cx="0.6" cy="0.8" r="0.7" fill="#a060e0"/><circle cx="11.4" cy="0.6" r="0.6" fill="#a060e0"/></svg><div style="left:23px;top:156px;width:9px;height:9px;background:#fff;border:1px solid #808080;box-sizing:border-box;"></div><div style="left:25px;top:160px;width:5px;height:1px;background:#000;"></div><div style="left:27px;top:158px;width:1px;height:5px;background:#000;"></div><div style="left:33px;top:160px;width:5px;height:1px;background:repeating-linear-gradient(90deg,#808080 0 1px,transparent 1px 2px);"></div><div style="left:40px;top:154px;width:11px;height:11px;background:#fff;border:1px solid #707070;box-sizing:border-box;"></div><svg style="left:55px;top:152px" width="16" height="16" viewBox="0 0 16 16"><path d="M11 0.7H12.8V4.5L14.7 6V15.8H6V4L8.5 2.5V4.5H11Z" fill="#a070f0" /><path d="M0.8 1.3V15.8M2.2 1.3V15.8" fill="none" stroke="#808080" stroke-width="0.9" /><path d="M0 1.3H10.8M2.2 15.4H4.7" fill="none" stroke="#808080" stroke-width="0.9" /><path d="M1.5 2.5V15" fill="none" stroke="#fff" stroke-width="0.7" stroke-dasharray="1.4 1.4"/><path d="M4.1 7.8L8.4 2.1L12.8 7.8" fill="none" stroke="#702030" stroke-width="0.8" /><rect x="3" y="7.8" width="10.9" height="1.9" fill="#ff8000" /><rect x="3" y="9.5" width="10.9" height="1.2" fill="#a03020" /><rect x="6" y="11" width="3.6" height="4.8" fill="#1890ff" /><rect x="10.8" y="11" width="3.9" height="4.8" fill="#1890ff" /><path d="M6.8 12.4H9M6.8 14.4H9M11.6 12.4H14M11.6 14.4H14" fill="none" stroke="#d8ecff" stroke-width="0.9" stroke-dasharray="0.9 0.9"/><circle cx="0.6" cy="0.8" r="0.7" fill="#a060e0"/><circle cx="11.4" cy="0.6" r="0.6" fill="#a060e0"/></svg><div style="left:23px;top:172px;width:9px;height:9px;background:#fff;border:1px solid #808080;box-sizing:border-box;"></div><div style="left:25px;top:176px;width:5px;height:1px;background:#000;"></div><div style="left:33px;top:176px;width:5px;height:1px;background:repeating-linear-gradient(90deg,#808080 0 1px,transparent 1px 2px);"></div><div style="left:40px;top:170px;width:11px;height:11px;background:#fff;border:1px solid #707070;box-sizing:border-box;"></div><svg style="left:55px;top:168px" width="16" height="16" viewBox="0 0 16 16"><path d="M11 0.7H12.8V4.5L14.7 6V15.8H6V4L8.5 2.5V4.5H11Z" fill="#a070f0" /><path d="M0.8 1.3V15.8M2.2 1.3V15.8" fill="none" stroke="#808080" stroke-width="0.9" /><path d="M0 1.3H10.8M2.2 15.4H4.7" fill="none" stroke="#808080" stroke-width="0.9" /><path d="M1.5 2.5V15" fill="none" stroke="#fff" stroke-width="0.7" stroke-dasharray="1.4 1.4"/><path d="M4.1 7.8L8.4 2.1L12.8 7.8" fill="none" stroke="#702030" stroke-width="0.8" /><rect x="3" y="7.8" width="10.9" height="1.9" fill="#ff8000" /><rect x="3" y="9.5" width="10.9" height="1.2" fill="#a03020" /><rect x="6" y="11" width="3.6" height="4.8" fill="#1890ff" /><rect x="10.8" y="11" width="3.9" height="4.8" fill="#1890ff" /><path d="M6.8 12.4H9M6.8 14.4H9M11.6 12.4H14M11.6 14.4H14" fill="none" stroke="#d8ecff" stroke-width="0.9" stroke-dasharray="0.9 0.9"/><circle cx="0.6" cy="0.8" r="0.7" fill="#a060e0"/><circle cx="11.4" cy="0.6" r="0.6" fill="#a060e0"/></svg><div style="left:46px;top:184px;width:1px;height:9px;background:repeating-linear-gradient(180deg,#808080 0 1px,transparent 1px 2px);"></div><div style="left:46px;top:192px;width:11px;height:1px;background:repeating-linear-gradient(90deg,#808080 0 1px,transparent 1px 2px);"></div><div style="left:59px;top:186px;width:11px;height:11px;background:#fff;border:1px solid #707070;box-sizing:border-box;"></div><svg style="left:73px;top:184px" width="16" height="16" viewBox="0 0 16 16"><path d="M0.3 6.9V10.5L10.3 15L11.8 14.4L15.8 8.4V2.3L10.5 11.2Z" fill="#eceef2" stroke="#b4b8c4" stroke-width="0.7" /><path d="M5.2 0.2H10.9L15.8 2.3L10.5 11.2L0.3 6.9L0.9 4.3Z" fill="#48a868" stroke="#308850" stroke-width="0.8" /><path d="M6.8 2.3L12.5 4.6" fill="none" stroke="#fff" stroke-width="1.3" stroke-linecap="round"/></svg><div style="left:2px;top:918px;width:316px;height:1px;background:#a0a0a0;"></div><div style="left:2px;top:919px;width:316px;height:1px;background:#fff;"></div><svg style="left:5px;top:967px" width="16" height="16" viewBox="0 0 16 16"><rect x="0.5" y="0.5" width="14" height="14" fill="#8c8c8c" stroke="#707070" rx="2"/><path d="M7.5 3L12 8H9.5V12H5.5V8H3Z" fill="#d8d8d8" /></svg><svg style="left:27px;top:967px" width="16" height="16" viewBox="0 0 16 16"><rect x="0.5" y="0.5" width="14" height="14" fill="#20a040" stroke="#108028" rx="2"/><path d="M7.5 12.5L12 7.5H9.5V3H5.5V7.5H3Z" fill="#fff" /></svg><svg style="left:56px;top:967px" width="16" height="16" viewBox="0 0 16 16"><rect x="0.5" y="0.5" width="14" height="14" fill="#18902c" stroke="#0c7020" /><text x="7.5" y="11.5" font-size="10" fill="#fff" font-weight="bold" text-anchor="middle" font-family="Liberation Sans,sans-serif" >№</text></svg><div style="left:82px;top:962px;width:229px;height:24px;background:#f0f0f0;"></div><div style="left:82px;top:962px;width:228px;height:1px;background:#fff;"></div><div style="left:82px;top:962px;width:1px;height:23px;background:#fff;"></div><div style="left:82px;top:985px;width:229px;height:1px;background:#696969;"></div><div style="left:310px;top:962px;width:1px;height:24px;background:#696969;"></div><div style="left:83px;top:984px;width:227px;height:1px;background:#a0a0a0;"></div><div style="left:309px;top:963px;width:1px;height:22px;background:#a0a0a0;"></div><div style="left:2px;top:991px;width:316px;height:1px;background:#a0a0a0;"></div><div style="left:2px;top:992px;width:316px;height:1px;background:#fff;"></div><div style="left:4px;top:1014px;width:308px;height:20px;background:#fff;"></div><div style="left:4px;top:1014px;width:308px;height:1px;background:#a0a0a0;"></div><div style="left:4px;top:1014px;width:1px;height:20px;background:#a0a0a0;"></div><div style="left:4px;top:1033px;width:308px;height:1px;background:#fff;"></div><div style="left:311px;top:1014px;width:1px;height:20px;background:#fff;"></div><div style="left:295px;top:1016px;width:16px;height:16px;background:#f0f0f0;"></div><div style="left:295px;top:1016px;width:15px;height:1px;background:#fff;"></div><div style="left:295px;top:1016px;width:1px;height:15px;background:#fff;"></div><div style="left:295px;top:1031px;width:16px;height:1px;background:#a0a0a0;"></div><div style="left:310px;top:1016px;width:1px;height:16px;background:#a0a0a0;"></div><svg style="left:299px;top:1022px" width="8" height="4" viewBox="0 0 8 4"><path d="M0 0H8L4 4Z" fill="#000"/></svg><svg style="left:7px;top:1016px" width="16" height="16" viewBox="0 0 16 16"><path d="M0.3 6.9V10.5L10.3 15L11.8 14.4L15.8 8.4V2.3L10.5 11.2Z" fill="#eceef2" stroke="#b4b8c4" stroke-width="0.7" /><path d="M5.2 0.2H10.9L15.8 2.3L10.5 11.2L0.3 6.9L0.9 4.3Z" fill="#40c060" stroke="#20a040" stroke-width="0.8" /><path d="M6.8 2.3L12.5 4.6" fill="none" stroke="#fff" stroke-width="1.3" stroke-linecap="round"/></svg><div style="left:323px;top:79px;width:1px;height:965px;background:#fff;"></div><svg style="left:326px;top:82px" width="16" height="16" viewBox="0 0 16 16"><path d="M4.2 3.4V13.4M4.2 6.2H6.5M4.2 10.3H6.5" fill="none" stroke="#101010" stroke-width="1.1" /><rect x="1.3" y="1.3" width="6.2" height="2" fill="#a8ccf4" stroke="#101010" rx="0.6" stroke-width="1"/><rect x="6.5" y="5.2" width="6.2" height="2" fill="#a8ccf4" stroke="#101010" rx="0.6" stroke-width="1"/><rect x="6.5" y="9.3" width="6.2" height="2" fill="#a8ccf4" stroke="#101010" rx="0.6" stroke-width="1"/><rect x="1.3" y="13.600000000000001" width="6.2" height="2" fill="#a8ccf4" stroke="#101010" rx="0.6" stroke-width="1"/></svg><div style="left:345px;top:79px;width:23px;height:22px;background:#f8f8f8;border:1px solid #e0e0e0;box-sizing:border-box;border-top-color:#c8c8c8;border-left-color:#c8c8c8;"></div><svg style="left:349px;top:82px" width="16" height="16" viewBox="0 0 16 16"><rect x="3.4" y="2.5" width="2.2" height="3.5" fill="#f0a030" stroke="#b06818" stroke-width="0.7"/><path d="M1.8 10V16H13.6V10L7.8 4Z" fill="#fdfdfb" stroke="#b8a890" stroke-width="0.7" /><path d="M0.5 10.6L7.9 3L15.6 10.6" fill="none" stroke="#c06818" stroke-width="1.5" /><rect x="4.6" y="10.6" width="2.4" height="5.6" fill="#f8a820" stroke="#b07010" stroke-width="0.7"/><rect x="9" y="10.2" width="2.6" height="2.6" fill="#3868f0" stroke="#2848c0" stroke-width="0.6"/><path d="M1.2 16.3H14.2" fill="none" stroke="#909090" stroke-width="0.8" /></svg><div style="left:370px;top:79px;width:1px;height:22px;background:#a0a0a0;"></div><div style="left:371px;top:79px;width:1px;height:22px;background:#fff;"></div><svg style="left:377px;top:82px" width="16" height="16" viewBox="0 0 16 16"><linearGradient id="fn" x1="0" y1="0" x2="0" y2="1"><stop offset="0" stop-color="#fff8b0"/><stop offset="0.55" stop-color="#ffe040"/><stop offset="1" stop-color="#f8c020"/></linearGradient><path d="M0.4 1.8H6L7 3.6H14.8V14.4H0.4Z" fill="url(#fn)" stroke="#a09070" stroke-width="0.8" /><rect x="9" y="0" width="6.2" height="6.4" fill="#f88818" stroke="#e87010" rx="0.8"/><circle cx="12.1" cy="3.2" r="1.5" fill="none" stroke="#fff" stroke-width="1.1"/><path d="M12.1 0.7V5.7M9.6 3.2H14.6M10.3 1.4L13.9 5M13.9 1.4L10.3 5" fill="none" stroke="#fff" stroke-width="0.6" /></svg><svg style="left:400px;top:82px" width="16" height="16" viewBox="0 0 16 16"><linearGradient id="dn" x1="0" y1="0" x2="0" y2="1"><stop offset="0" stop-color="#20a0f8"/><stop offset="1" stop-color="#c0f4ff"/></linearGradient><path d="M2.8 1.4H12.2V15.6H0.7V3.5Z" fill="url(#dn)" stroke="#484848" stroke-width="0.9" /><path d="M0.7 3.5H2.8V1.4" fill="#e0f8ff" stroke="#484848" stroke-width="0.7" /><path d="M3 7.5H10M3 9.6H10M3 11.7H10M3 13.6H10" fill="none" stroke="#687888" stroke-width="0.9" /><path d="M11 0V8.8M6.8 4.4H15.3M8 1.4L14 7.4M14 1.4L8 7.4" fill="none" stroke="#f8e010" stroke-width="1.2" /><circle cx="11" cy="4.4" r="1.3" fill="#fff8a0"/></svg><svg style="left:423px;top:82px" width="16" height="16" viewBox="0 0 16 16"><path d="M1.8 2.8L14 14" fill="none" stroke="#e81010" stroke-width="1.3" stroke-linecap="round"/><path d="M14 2.8L1.8 14" fill="none" stroke="#e81010" stroke-width="1.3" stroke-linecap="round"/><path d="M1.8 2.8L6 6.6M1.8 14L6 10.2" fill="none" stroke="#e81010" stroke-width="2.4" stroke-linecap="round"/></svg><div style="left:445px;top:79px;width:1px;height:22px;background:#a0a0a0;"></div><div style="left:446px;top:79px;width:1px;height:22px;background:#fff;"></div><svg style="left:452px;top:82px" width="16" height="16" viewBox="0 0 16 16"><rect x="0.5" y="0.5" width="10" height="10" fill="#fafafa" stroke="#a0a0a0" /><rect x="4.5" y="4.5" width="11" height="11" fill="#fdfdfd" stroke="#909090" /><text x="10" y="14" font-size="9" fill="#303030" text-anchor="middle" font-family="Liberation Sans,sans-serif" >%</text></svg><svg style="left:475px;top:82px" width="16" height="16" viewBox="0 0 16 16"><path d="M4.5 1.5H12.5V14.5H2.5V3.5Z" fill="#fdfdfd" stroke="#808080" stroke-width="1" /><path d="M4.5 5.5H10.5M4.5 7.5H10.5M4.5 9.5H10.5M4.5 11.5H10.5" fill="none" stroke="#808080" stroke-width="1" /></svg><svg style="left:498px;top:82px" width="16" height="16" viewBox="0 0 16 16"><path d="M5.5 0.5H13.5V13.5H3.5V2.5Z" fill="#e8e8e8" stroke="#b0b0b0" stroke-width="1" /><rect x="0.5" y="7" width="7" height="2.5" fill="#f0f0f0" stroke="#b0b0b0" /></svg><svg style="left:521px;top:82px" width="16" height="16" viewBox="0 0 16 16"><path d="M0.5 2.5H5.5L6.5 4.5H15.5V14.5H0.5Z" fill="#d4d4d4" stroke="#b0b0b0" stroke-width="1" /></svg><svg style="left:544px;top:82px" width="16" height="16" viewBox="0 0 16 16"><linearGradient id="fs" x1="0" y1="0" x2="1" y2="0"><stop offset="0" stop-color="#ffd840"/><stop offset="1" stop-color="#f8a010"/></linearGradient><path d="M0.5 1.5H6L7 3.5H15.5V14.5H0.5Z" fill="url(#fs)" stroke="#b08010" stroke-width="1" /><rect x="4.5" y="5.3" width="7.4" height="7.8" fill="#fdfdfd" stroke="#a07830" stroke-width="0.7"/><text x="8.2" y="12.2" font-size="8" fill="#000" text-anchor="middle" font-family="Liberation Sans,sans-serif" >Σ</text></svg><div style="left:566px;top:79px;width:1px;height:22px;background:#a0a0a0;"></div><div style="left:567px;top:79px;width:1px;height:22px;background:#fff;"></div><svg style="left:573px;top:82px" width="16" height="16" viewBox="0 0 16 16"><rect x="3.5" y="0.5" width="9.5" height="14" fill="#f8f0d0" stroke="#a05858" rx="1"/><rect x="4.8" y="2" width="7" height="2.5" fill="#30a090" /><path d="M5 6.5H12M5 8.5H12M5 10.5H12M5 12.5H12" fill="none" stroke="#b09858" stroke-width="1.1" stroke-dasharray="1.6 0.8"/></svg><div style="left:595px;top:79px;width:1px;height:22px;background:#a0a0a0;"></div><div style="left:596px;top:79px;width:1px;height:22px;background:#fff;"></div><svg style="left:602px;top:82px" width="16" height="16" viewBox="0 0 16 16"><path d="M0.6 8.6V11L6.5 15.4L15 9.6V7.4L6.5 12.6Z" fill="#fff" stroke="#e03858" stroke-width="0.8" /><path d="M0.6 8.6L3 6.6L7 10L15 7.4L6.5 12.6Z" fill="#f05070" stroke="#e03858" stroke-width="0.6" /><path d="M1.2 4.8V7.4L6.8 11L15.2 5.6V3L6.8 8Z" fill="#fff" stroke="#e01080" stroke-width="0.8" /><path d="M1.2 4.8L8.5 0.6L15.2 3L6.8 8Z" fill="#ff2098" stroke="#e01080" stroke-width="0.7" /></svg><svg style="left:625px;top:82px" width="16" height="16" viewBox="0 0 16 16"><path d="M0.3 6.9V10.5L10.3 15L11.8 14.4L15.8 8.4V2.3L10.5 11.2Z" fill="#eceef2" stroke="#b4b8c4" stroke-width="0.7" /><path d="M5.2 0.2H10.9L15.8 2.3L10.5 11.2L0.3 6.9L0.9 4.3Z" fill="#3868e0" stroke="#2848b0" stroke-width="0.8" /><path d="M6.8 2.3L12.5 4.6" fill="none" stroke="#fff" stroke-width="1.3" stroke-linecap="round"/><rect x="8.5" y="8.5" width="7" height="7" fill="#f4f4f4" stroke="#404040" /><text x="12" y="14.6" font-size="7" fill="#202020" font-weight="bold" text-anchor="middle" font-family="Liberation Sans,sans-serif" >F</text></svg><svg style="left:648px;top:82px" width="16" height="16" viewBox="0 0 16 16"><rect x="1.3" y="1.4" width="13.4" height="13.4" fill="#fff" stroke="#357a38" stroke-width="1.1"/><path d="M4 4.4L12 12.2M12 4.4L4 12.2" fill="none" stroke="#2f8f3e" stroke-width="2.3" /><path d="M4.6 4.2L12.4 11.8" fill="none" stroke="#7cc884" stroke-width="0.7" /><path d="M4.5 12.8H12" fill="none" stroke="#6aa870" stroke-width="0.8" /></svg><svg style="left:671px;top:82px" width="16" height="16" viewBox="0 0 16 16"><path d="M3.5 0.4H12L15.4 3V15.6H3.5Z" fill="#fff" stroke="#b8b8b8" stroke-width="0.8" /><rect x="0.3" y="1.7" width="14.4" height="6.2" fill="#ee1020" /><text x="7.5" y="7" font-size="6.4" fill="#fff" font-weight="bold" text-anchor="middle" font-family="Liberation Sans,sans-serif" letter-spacing="0.3">PDF</text><path d="M4.2 15.4C6.5 13.5 8.5 10.8 11.5 9.6C9.6 11.2 8.6 13.4 8 15.4ZM9 15.4C10 12.8 11.8 10.6 15 9.8C12.6 11.2 12.2 13.4 13.2 15.4Z" fill="#e81020" /></svg><svg style="left:694px;top:82px" width="16" height="16" viewBox="0 0 16 16"><rect x="6.5" y="0.4" width="9" height="15" fill="#f4f4f4" stroke="#b0b0b0" stroke-width="0.8"/><rect x="1.3" y="9.2" width="14.5" height="5.8" fill="#e6deee" /><rect x="3" y="2.2" width="13" height="5.3" fill="#1060e8" /><text x="9.5" y="6.9" font-size="5.8" fill="#fff" font-weight="bold" text-anchor="middle" font-family="Liberation Sans,sans-serif" textLength="12" lengthAdjust="spacingAndGlyphs">XML</text><path d="M0.3 4.8L2 3L3.7 4.8L2 6.6Z" fill="#10c868" /><text x="8.6" y="14.6" font-size="6.8" fill="#080808" font-weight="bold" text-anchor="middle" font-family="Liberation Sans,sans-serif" textLength="13.6" lengthAdjust="spacingAndGlyphs">ГГЭ</text></svg><svg style="left:717px;top:82px" width="16" height="16" viewBox="0 0 16 16"><rect x="6.5" y="0.4" width="9" height="15" fill="#f4f4f4" stroke="#b0b0b0" stroke-width="0.8"/><rect x="1.3" y="9.2" width="14.5" height="5.8" fill="#e6deee" /><rect x="3" y="2.2" width="13" height="5.3" fill="#1060e8" /><text x="9.5" y="6.9" font-size="5.8" fill="#fff" font-weight="bold" text-anchor="middle" font-family="Liberation Sans,sans-serif" textLength="12" lengthAdjust="spacingAndGlyphs">XML</text><path d="M0.3 4.8L2 3L3.7 4.8L2 6.6Z" fill="#10c868" /><text x="8.6" y="14.6" font-size="6.8" fill="#080808" font-weight="bold" text-anchor="middle" font-family="Liberation Sans,sans-serif" textLength="13.6" lengthAdjust="spacingAndGlyphs">МГЭ</text></svg><div style="left:739px;top:79px;width:1px;height:22px;background:#a0a0a0;"></div><div style="left:740px;top:79px;width:1px;height:22px;background:#fff;"></div><svg style="left:746px;top:82px" width="16" height="16" viewBox="0 0 16 16"><path d="M0.3 6.9V10.5L10.3 15L11.8 14.4L15.8 8.4V2.3L10.5 11.2Z" fill="#eceef2" stroke="#b4b8c4" stroke-width="0.7" /><path d="M5.2 0.2H10.9L15.8 2.3L10.5 11.2L0.3 6.9L0.9 4.3Z" fill="#f08040" stroke="#d06020" stroke-width="0.8" /><path d="M6.8 2.3L12.5 4.6" fill="none" stroke="#fff" stroke-width="1.3" stroke-linecap="round"/></svg><div style="left:768px;top:79px;width:1px;height:22px;background:#a0a0a0;"></div><div style="left:769px;top:79px;width:1px;height:22px;background:#fff;"></div><svg style="left:775px;top:82px" width="16" height="16" viewBox="0 0 16 16"><rect x="0.5" y="1.5" width="11" height="10" fill="#fafafa" stroke="#a0a0a0" /><rect x="4.5" y="5.5" width="11" height="10" fill="#fdfdfd" stroke="#909090" /><rect x="4.5" y="5.5" width="11" height="2" fill="#3070e0" /><rect x="14" y="5.5" width="1.5" height="2" fill="#e02020" /><text x="10" y="14.8" font-size="8.5" fill="#202020" text-anchor="middle" font-family="Liberation Sans,sans-serif" >%</text></svg><div style="left:797px;top:79px;width:1px;height:22px;background:#a0a0a0;"></div><div style="left:798px;top:79px;width:1px;height:22px;background:#fff;"></div><svg style="left:804px;top:82px" width="16" height="16" viewBox="0 0 16 16"><path d="M8 2L13.5 8H10V13H6V8H2.5Z" fill="#808080" /></svg><svg style="left:827px;top:82px" width="16" height="16" viewBox="0 0 16 16"><path d="M8 14L13.5 8H10V3H6V8H2.5Z" fill="#808080" /></svg><div style="left:850px;top:79px;width:1px;height:22px;background:#a0a0a0;"></div><div style="left:851px;top:79px;width:1px;height:22px;background:#fff;"></div><div style="left:324px;top:102px;width:1426px;height:1px;background:#fff;"></div><div style="left:327px;top:106px;width:1405px;height:881px;background:#fff;"></div><div style="left:326px;top:105px;width:1423px;height:1px;background:#a0a0a0;"></div><div style="left:326px;top:105px;width:1px;height:883px;background:#a0a0a0;"></div><div style="left:1748px;top:105px;width:1px;height:883px;background:#fff;"></div><div style="left:1732px;top:106px;width:16px;height:881px;background:#f0f0f0;"></div><div style="left:1732px;top:123px;width:15px;height:300px;background:#cdcdcd;"></div><svg style="left:1732px;top:106px" width="16" height="881" viewBox="0 0 16 881"><path d="M4.3 11.2L7.5 7.6L10.7 11.2M4.3 871.2L7.5 874.8L10.7 871.2" fill="none" stroke="#505050" stroke-width="2"/></svg><div style="left:339px;top:122px;width:1188px;height:15px;background:#e0e0ff;"></div><div style="left:339px;top:138px;width:1188px;height:15px;background:#e0ffff;"></div><div style="left:339px;top:170px;width:1188px;height:15px;background:#e0e0ff;"></div><div style="left:339px;top:250px;width:1188px;height:15px;background:#e0e0ff;"></div><div style="left:339px;top:394px;width:1188px;height:15px;background:#e0e0ff;"></div><div style="left:339px;top:410px;width:1188px;height:15px;background:#e0e0ff;"></div><div style="left:339px;top:426px;width:1188px;height:15px;background:#e0e0ff;"></div><div style="left:339px;top:442px;width:1188px;height:15px;background:#e0e0ff;"></div><div style="left:339px;top:458px;width:1188px;height:15px;background:#e0e0ff;"></div><div style="left:339px;top:474px;width:1188px;height:15px;background:#e0e0ff;"></div><div style="left:339px;top:490px;width:1188px;height:15px;background:#e0e0ff;"></div><div style="left:339px;top:522px;width:1188px;height:15px;background:#e0e0ff;"></div><div style="left:339px;top:570px;width:1188px;height:15px;background:#e0e0ff;"></div><div style="left:339px;top:602px;width:1188px;height:15px;background:#e0e0ff;"></div><div style="left:1463px;top:874px;width:64px;height:15px;background:#ffd0d0;"></div><div style="left:339px;top:122px;width:34px;height:15px;background:#0078d7;border:1px solid #202020;box-sizing:border-box;"></div><div style="left:339px;top:122px;width:34px;height:15px;border:1px dotted #ff9428;box-sizing:border-box;"></div><div style="left:327px;top:106px;width:1201px;height:15px;background:#f0f0f0;"></div><div style="left:327px;top:121px;width:1201px;height:1px;background:#a0a0a0;"></div><div style="left:338px;top:106px;width:1px;height:16px;background:#a0a0a0;"></div><div style="left:327px;top:106px;width:1px;height:15px;background:#fff;"></div><div style="left:373px;top:106px;width:1px;height:16px;background:#a0a0a0;"></div><div style="left:339px;top:106px;width:1px;height:15px;background:#fff;"></div><div style="left:398px;top:106px;width:1px;height:16px;background:#a0a0a0;"></div><div style="left:374px;top:106px;width:1px;height:15px;background:#fff;"></div><div style="left:431px;top:106px;width:1px;height:16px;background:#a0a0a0;"></div><div style="left:399px;top:106px;width:1px;height:15px;background:#fff;"></div><div style="left:483px;top:106px;width:1px;height:16px;background:#a0a0a0;"></div><div style="left:432px;top:106px;width:1px;height:15px;background:#fff;"></div><div style="left:559px;top:106px;width:1px;height:16px;background:#a0a0a0;"></div><div style="left:484px;top:106px;width:1px;height:15px;background:#fff;"></div><div style="left:876px;top:106px;width:1px;height:16px;background:#a0a0a0;"></div><div style="left:560px;top:106px;width:1px;height:15px;background:#fff;"></div><div style="left:917px;top:106px;width:1px;height:16px;background:#a0a0a0;"></div><div style="left:877px;top:106px;width:1px;height:15px;background:#fff;"></div><div style="left:998px;top:106px;width:1px;height:16px;background:#a0a0a0;"></div><div style="left:918px;top:106px;width:1px;height:15px;background:#fff;"></div><div style="left:1079px;top:106px;width:1px;height:16px;background:#a0a0a0;"></div><div style="left:999px;top:106px;width:1px;height:15px;background:#fff;"></div><div style="left:1160px;top:106px;width:1px;height:16px;background:#a0a0a0;"></div><div style="left:1080px;top:106px;width:1px;height:15px;background:#fff;"></div><div style="left:1235px;top:106px;width:1px;height:16px;background:#a0a0a0;"></div><div style="left:1161px;top:106px;width:1px;height:15px;background:#fff;"></div><div style="left:1336px;top:106px;width:1px;height:16px;background:#a0a0a0;"></div><div style="left:1236px;top:106px;width:1px;height:15px;background:#fff;"></div><div style="left:1411px;top:106px;width:1px;height:16px;background:#a0a0a0;"></div><div style="left:1337px;top:106px;width:1px;height:15px;background:#fff;"></div><div style="left:1462px;top:106px;width:1px;height:16px;background:#a0a0a0;"></div><div style="left:1412px;top:106px;width:1px;height:15px;background:#fff;"></div><div style="left:1527px;top:106px;width:1px;height:16px;background:#a0a0a0;"></div><div style="left:1463px;top:106px;width:1px;height:15px;background:#fff;"></div><div style="left:327px;top:106px;width:1200px;height:1px;background:#fff;"></div><div style="left:327px;top:122px;width:11px;height:864px;background:#f0f0f0;"></div><div style="left:327px;top:122px;width:1px;height:864px;background:#fff;"></div><div style="left:338px;top:122px;width:1px;height:864px;background:#a0a0a0;"></div><div style="left:327px;top:137px;width:12px;height:1px;background:#a0a0a0;"></div><div style="left:327px;top:122px;width:11px;height:1px;background:#fff;"></div><div style="left:327px;top:153px;width:12px;height:1px;background:#a0a0a0;"></div><div style="left:327px;top:138px;width:11px;height:1px;background:#fff;"></div><div style="left:327px;top:169px;width:12px;height:1px;background:#a0a0a0;"></div><div style="left:327px;top:154px;width:11px;height:1px;background:#fff;"></div><div style="left:327px;top:185px;width:12px;height:1px;background:#a0a0a0;"></div><div style="left:327px;top:170px;width:11px;height:1px;background:#fff;"></div><div style="left:327px;top:201px;width:12px;height:1px;background:#a0a0a0;"></div><div style="left:327px;top:186px;width:11px;height:1px;background:#fff;"></div><div style="left:327px;top:217px;width:12px;height:1px;background:#a0a0a0;"></div><div style="left:327px;top:202px;width:11px;height:1px;background:#fff;"></div><div style="left:327px;top:233px;width:12px;height:1px;background:#a0a0a0;"></div><div style="left:327px;top:218px;width:11px;height:1px;background:#fff;"></div><div style="left:327px;top:249px;width:12px;height:1px;background:#a0a0a0;"></div><div style="left:327px;top:234px;width:11px;height:1px;background:#fff;"></div><div style="left:327px;top:265px;width:12px;height:1px;background:#a0a0a0;"></div><div style="left:327px;top:250px;width:11px;height:1px;background:#fff;"></div><div style="left:327px;top:281px;width:12px;height:1px;background:#a0a0a0;"></div><div style="left:327px;top:266px;width:11px;height:1px;background:#fff;"></div><div style="left:327px;top:297px;width:12px;height:1px;background:#a0a0a0;"></div><div style="left:327px;top:282px;width:11px;height:1px;background:#fff;"></div><div style="left:327px;top:313px;width:12px;height:1px;background:#a0a0a0;"></div><div style="left:327px;top:298px;width:11px;height:1px;background:#fff;"></div><div style="left:327px;top:329px;width:12px;height:1px;background:#a0a0a0;"></div><div style="left:327px;top:314px;width:11px;height:1px;background:#fff;"></div><div style="left:327px;top:345px;width:12px;height:1px;background:#a0a0a0;"></div><div style="left:327px;top:330px;width:11px;height:1px;background:#fff;"></div><div style="left:327px;top:361px;width:12px;height:1px;background:#a0a0a0;"></div><div style="left:327px;top:346px;width:11px;height:1px;background:#fff;"></div><div style="left:327px;top:377px;width:12px;height:1px;background:#a0a0a0;"></div><div style="left:327px;top:362px;width:11px;height:1px;background:#fff;"></div><div style="left:327px;top:393px;width:12px;height:1px;background:#a0a0a0;"></div><div style="left:327px;top:378px;width:11px;height:1px;background:#fff;"></div><div style="left:327px;top:409px;width:12px;height:1px;background:#a0a0a0;"></div><div style="left:327px;top:394px;width:11px;height:1px;background:#fff;"></div><div style="left:327px;top:425px;width:12px;height:1px;background:#a0a0a0;"></div><div style="left:327px;top:410px;width:11px;height:1px;background:#fff;"></div><div style="left:327px;top:441px;width:12px;height:1px;background:#a0a0a0;"></div><div style="left:327px;top:426px;width:11px;height:1px;background:#fff;"></div><div style="left:327px;top:457px;width:12px;height:1px;background:#a0a0a0;"></div><div style="left:327px;top:442px;width:11px;height:1px;background:#fff;"></div><div style="left:327px;top:473px;width:12px;height:1px;background:#a0a0a0;"></div><div style="left:327px;top:458px;width:11px;height:1px;background:#fff;"></div><div style="left:327px;top:489px;width:12px;height:1px;background:#a0a0a0;"></div><div style="left:327px;top:474px;width:11px;height:1px;background:#fff;"></div><div style="left:327px;top:505px;width:12px;height:1px;background:#a0a0a0;"></div><div style="left:327px;top:490px;width:11px;height:1px;background:#fff;"></div><div style="left:327px;top:521px;width:12px;height:1px;background:#a0a0a0;"></div><div style="left:327px;top:506px;width:11px;height:1px;background:#fff;"></div><div style="left:327px;top:537px;width:12px;height:1px;background:#a0a0a0;"></div><div style="left:327px;top:522px;width:11px;height:1px;background:#fff;"></div><div style="left:327px;top:553px;width:12px;height:1px;background:#a0a0a0;"></div><div style="left:327px;top:538px;width:11px;height:1px;background:#fff;"></div><div style="left:327px;top:569px;width:12px;height:1px;background:#a0a0a0;"></div><div style="left:327px;top:554px;width:11px;height:1px;background:#fff;"></div><div style="left:327px;top:585px;width:12px;height:1px;background:#a0a0a0;"></div><div style="left:327px;top:570px;width:11px;height:1px;background:#fff;"></div><div style="left:327px;top:601px;width:12px;height:1px;background:#a0a0a0;"></div><div style="left:327px;top:586px;width:11px;height:1px;background:#fff;"></div><div style="left:327px;top:617px;width:12px;height:1px;background:#a0a0a0;"></div><div style="left:327px;top:602px;width:11px;height:1px;background:#fff;"></div><div style="left:327px;top:633px;width:12px;height:1px;background:#a0a0a0;"></div><div style="left:327px;top:618px;width:11px;height:1px;background:#fff;"></div><div style="left:327px;top:649px;width:12px;height:1px;background:#a0a0a0;"></div><div style="left:327px;top:634px;width:11px;height:1px;background:#fff;"></div><div style="left:327px;top:665px;width:12px;height:1px;background:#a0a0a0;"></div><div style="left:327px;top:650px;width:11px;height:1px;background:#fff;"></div><div style="left:327px;top:681px;width:12px;height:1px;background:#a0a0a0;"></div><div style="left:327px;top:666px;width:11px;height:1px;background:#fff;"></div><div style="left:327px;top:697px;width:12px;height:1px;background:#a0a0a0;"></div><div style="left:327px;top:682px;width:11px;height:1px;background:#fff;"></div><div style="left:327px;top:713px;width:12px;height:1px;background:#a0a0a0;"></div><div style="left:327px;top:698px;width:11px;height:1px;background:#fff;"></div><div style="left:327px;top:729px;width:12px;height:1px;background:#a0a0a0;"></div><div style="left:327px;top:714px;width:11px;height:1px;background:#fff;"></div><div style="left:327px;top:745px;width:12px;height:1px;background:#a0a0a0;"></div><div style="left:327px;top:730px;width:11px;height:1px;background:#fff;"></div><div style="left:327px;top:761px;width:12px;height:1px;background:#a0a0a0;"></div><div style="left:327px;top:746px;width:11px;height:1px;background:#fff;"></div><div style="left:327px;top:777px;width:12px;height:1px;background:#a0a0a0;"></div><div style="left:327px;top:762px;width:11px;height:1px;background:#fff;"></div><div style="left:327px;top:793px;width:12px;height:1px;background:#a0a0a0;"></div><div style="left:327px;top:778px;width:11px;height:1px;background:#fff;"></div><div style="left:327px;top:809px;width:12px;height:1px;background:#a0a0a0;"></div><div style="left:327px;top:794px;width:11px;height:1px;background:#fff;"></div><div style="left:327px;top:825px;width:12px;height:1px;background:#a0a0a0;"></div><div style="left:327px;top:810px;width:11px;height:1px;background:#fff;"></div><div style="left:327px;top:841px;width:12px;height:1px;background:#a0a0a0;"></div><div style="left:327px;top:826px;width:11px;height:1px;background:#fff;"></div><div style="left:327px;top:857px;width:12px;height:1px;background:#a0a0a0;"></div><div style="left:327px;top:842px;width:11px;height:1px;background:#fff;"></div><div style="left:327px;top:873px;width:12px;height:1px;background:#a0a0a0;"></div><div style="left:327px;top:858px;width:11px;height:1px;background:#fff;"></div><div style="left:327px;top:889px;width:12px;height:1px;background:#a0a0a0;"></div><div style="left:327px;top:874px;width:11px;height:1px;background:#fff;"></div><div style="left:327px;top:905px;width:12px;height:1px;background:#a0a0a0;"></div><div style="left:327px;top:890px;width:11px;height:1px;background:#fff;"></div><div style="left:327px;top:921px;width:12px;height:1px;background:#a0a0a0;"></div><div style="left:327px;top:906px;width:11px;height:1px;background:#fff;"></div><div style="left:327px;top:937px;width:12px;height:1px;background:#a0a0a0;"></div><div style="left:327px;top:922px;width:11px;height:1px;background:#fff;"></div><div style="left:327px;top:953px;width:12px;height:1px;background:#a0a0a0;"></div><div style="left:327px;top:938px;width:11px;height:1px;background:#fff;"></div><div style="left:327px;top:969px;width:12px;height:1px;background:#a0a0a0;"></div><div style="left:327px;top:954px;width:11px;height:1px;background:#fff;"></div><div style="left:327px;top:985px;width:12px;height:1px;background:#a0a0a0;"></div><div style="left:327px;top:970px;width:11px;height:1px;background:#fff;"></div><svg style="left:330px;top:124px" width="6" height="11" viewBox="0 0 6 11"><path d="M0 0L6 5.5L0 11Z" fill="#000"/></svg><div style="left:373px;top:122px;width:1px;height:864px;background:#c0c0c0;"></div><div style="left:398px;top:122px;width:1px;height:864px;background:#c0c0c0;"></div><div style="left:431px;top:122px;width:1px;height:864px;background:#c0c0c0;"></div><div style="left:483px;top:122px;width:1px;height:864px;background:#c0c0c0;"></div><div style="left:559px;top:122px;width:1px;height:864px;background:#c0c0c0;"></div><div style="left:876px;top:122px;width:1px;height:864px;background:#c0c0c0;"></div><div style="left:917px;top:122px;width:1px;height:864px;background:#c0c0c0;"></div><div style="left:998px;top:122px;width:1px;height:864px;background:#c0c0c0;"></div><div style="left:1079px;top:122px;width:1px;height:864px;background:#c0c0c0;"></div><div style="left:1160px;top:122px;width:1px;height:864px;background:#c0c0c0;"></div><div style="left:1235px;top:122px;width:1px;height:864px;background:#c0c0c0;"></div><div style="left:1336px;top:122px;width:1px;height:864px;background:#c0c0c0;"></div><div style="left:1411px;top:122px;width:1px;height:864px;background:#c0c0c0;"></div><div style="left:1462px;top:122px;width:1px;height:864px;background:#c0c0c0;"></div><div style="left:1527px;top:122px;width:1px;height:864px;background:#c0c0c0;"></div><div style="left:339px;top:137px;width:1189px;height:1px;background:#c0c0c0;"></div><div style="left:339px;top:153px;width:1189px;height:1px;background:#c0c0c0;"></div><div style="left:339px;top:169px;width:1189px;height:1px;background:#c0c0c0;"></div><div style="left:339px;top:185px;width:1189px;height:1px;background:#c0c0c0;"></div><div style="left:339px;top:201px;width:1189px;height:1px;background:#c0c0c0;"></div><div style="left:339px;top:217px;width:1189px;height:1px;background:#c0c0c0;"></div><div style="left:339px;top:233px;width:1189px;height:1px;background:#c0c0c0;"></div><div style="left:339px;top:249px;width:1189px;height:1px;background:#c0c0c0;"></div><div style="left:339px;top:265px;width:1189px;height:1px;background:#c0c0c0;"></div><div style="left:339px;top:281px;width:1189px;height:1px;background:#c0c0c0;"></div><div style="left:339px;top:297px;width:1189px;height:1px;background:#c0c0c0;"></div><div style="left:339px;top:313px;width:1189px;height:1px;background:#c0c0c0;"></div><div style="left:339px;top:329px;width:1189px;height:1px;background:#c0c0c0;"></div><div style="left:339px;top:345px;width:1189px;height:1px;background:#c0c0c0;"></div><div style="left:339px;top:361px;width:1189px;height:1px;background:#c0c0c0;"></div><div style="left:339px;top:377px;width:1189px;height:1px;background:#c0c0c0;"></div><div style="left:339px;top:393px;width:1189px;height:1px;background:#c0c0c0;"></div><div style="left:339px;top:409px;width:1189px;height:1px;background:#c0c0c0;"></div><div style="left:339px;top:425px;width:1189px;height:1px;background:#c0c0c0;"></div><div style="left:339px;top:441px;width:1189px;height:1px;background:#c0c0c0;"></div><div style="left:339px;top:457px;width:1189px;height:1px;background:#c0c0c0;"></div><div style="left:339px;top:473px;width:1189px;height:1px;background:#c0c0c0;"></div><div style="left:339px;top:489px;width:1189px;height:1px;background:#c0c0c0;"></div><div style="left:339px;top:505px;width:1189px;height:1px;background:#c0c0c0;"></div><div style="left:339px;top:521px;width:1189px;height:1px;background:#c0c0c0;"></div><div style="left:339px;top:537px;width:1189px;height:1px;background:#c0c0c0;"></div><div style="left:339px;top:553px;width:1189px;height:1px;background:#c0c0c0;"></div><div style="left:339px;top:569px;width:1189px;height:1px;background:#c0c0c0;"></div><div style="left:339px;top:585px;width:1189px;height:1px;background:#c0c0c0;"></div><div style="left:339px;top:601px;width:1189px;height:1px;background:#c0c0c0;"></div><div style="left:339px;top:617px;width:1189px;height:1px;background:#c0c0c0;"></div><div style="left:339px;top:633px;width:1189px;height:1px;background:#c0c0c0;"></div><div style="left:339px;top:649px;width:1189px;height:1px;background:#c0c0c0;"></div><div style="left:339px;top:665px;width:1189px;height:1px;background:#c0c0c0;"></div><div style="left:339px;top:681px;width:1189px;height:1px;background:#c0c0c0;"></div><div style="left:339px;top:697px;width:1189px;height:1px;background:#c0c0c0;"></div><div style="left:339px;top:713px;width:1189px;height:1px;background:#c0c0c0;"></div><div style="left:339px;top:729px;width:1189px;height:1px;background:#c0c0c0;"></div><div style="left:339px;top:745px;width:1189px;height:1px;background:#c0c0c0;"></div><div style="left:339px;top:761px;width:1189px;height:1px;background:#c0c0c0;"></div><div style="left:339px;top:777px;width:1189px;height:1px;background:#c0c0c0;"></div><div style="left:339px;top:793px;width:1189px;height:1px;background:#c0c0c0;"></div><div style="left:339px;top:809px;width:1189px;height:1px;background:#c0c0c0;"></div><div style="left:339px;top:825px;width:1189px;height:1px;background:#c0c0c0;"></div><div style="left:339px;top:841px;width:1189px;height:1px;background:#c0c0c0;"></div><div style="left:339px;top:857px;width:1189px;height:1px;background:#c0c0c0;"></div><div style="left:339px;top:873px;width:1189px;height:1px;background:#c0c0c0;"></div><div style="left:339px;top:889px;width:1189px;height:1px;background:#c0c0c0;"></div><div style="left:339px;top:905px;width:1189px;height:1px;background:#c0c0c0;"></div><div style="left:339px;top:921px;width:1189px;height:1px;background:#c0c0c0;"></div><div style="left:339px;top:937px;width:1189px;height:1px;background:#c0c0c0;"></div><div style="left:339px;top:953px;width:1189px;height:1px;background:#c0c0c0;"></div><div style="left:339px;top:969px;width:1189px;height:1px;background:#c0c0c0;"></div><div style="left:339px;top:985px;width:1189px;height:1px;background:#c0c0c0;"></div><svg style="left:407px;top:122px" width="16" height="16" viewBox="0 0 16 16"><linearGradient id="fr" x1="0" y1="1" x2="1" y2="0"><stop offset="0.28" stop-color="#ffff00"/><stop offset="0.55" stop-color="#ffc800"/><stop offset="0.82" stop-color="#ff9000"/><stop offset="1" stop-color="#ff8000"/></linearGradient><rect x="0.5" y="0.5" width="6.6" height="2.4" fill="#ffcc20" stroke="#b0b0b8" /><rect x="0.5" y="2.5" width="15" height="11" fill="url(#fr)" stroke="#9094a8" /><path d="M0.5 13.5V0.5H7.1" fill="none" stroke="#b4b4bc" stroke-width="1" /></svg><svg style="left:407px;top:138px" width="16" height="16" viewBox="0 0 16 16"><path d="M0.3 6.9V10.5L10.3 15L11.8 14.4L15.8 8.4V2.3L10.5 11.2Z" fill="#eceef2" stroke="#b4b8c4" stroke-width="0.7" /><path d="M5.2 0.2H10.9L15.8 2.3L10.5 11.2L0.3 6.9L0.9 4.3Z" fill="#48a868" stroke="#308850" stroke-width="0.8" /><path d="M6.8 2.3L12.5 4.6" fill="none" stroke="#fff" stroke-width="1.3" stroke-linecap="round"/></svg><div style="left:381px;top:140px;width:10px;height:10px;background:linear-gradient(135deg,#ececec,#fff 60%);border:1px solid #8c8c8c;box-sizing:border-box;"></div><svg style="left:381px;top:140px" width="10" height="10" viewBox="0 0 10 10"><path d="M2.3 5L4.3 7.4L7.8 2.4" fill="none" stroke="#3858b0" stroke-width="1.45"/></svg><svg style="left:408px;top:154px" width="12" height="15" viewBox="0 0 12 15"><linearGradient id="dr" x1="0" y1="0" x2="0" y2="1"><stop offset="0" stop-color="#18a0ff"/><stop offset="1" stop-color="#c8ffff"/></linearGradient><path d="M2.5 0.5H11.5V14.5H0.5V2.5Z" fill="url(#dr)" stroke="#484848" stroke-width="1" /><path d="M0.5 2.5H2.5V0.5" fill="#e0f8ff" stroke="#484848" stroke-width="0.8" /><path d="M2.5 5.5H9.5M2.5 7.5H9.5M2.5 9.5H9.5M2.5 11.5H9.5" fill="none" stroke="#707880" stroke-width="1" /></svg><div style="left:381px;top:156px;width:10px;height:10px;background:linear-gradient(135deg,#ececec,#fff 60%);border:1px solid #8c8c8c;box-sizing:border-box;"></div><svg style="left:381px;top:156px" width="10" height="10" viewBox="0 0 10 10"><path d="M2.3 5L4.3 7.4L7.8 2.4" fill="none" stroke="#3858b0" stroke-width="1.45"/></svg><svg style="left:407px;top:170px" width="16" height="16" viewBox="0 0 16 16"><linearGradient id="fr" x1="0" y1="1" x2="1" y2="0"><stop offset="0.28" stop-color="#ffff00"/><stop offset="0.55" stop-color="#ffc800"/><stop offset="0.82" stop-color="#ff9000"/><stop offset="1" stop-color="#ff8000"/></linearGradient><rect x="0.5" y="0.5" width="6.6" height="2.4" fill="#ffcc20" stroke="#b0b0b8" /><rect x="0.5" y="2.5" width="15" height="11" fill="url(#fr)" stroke="#9094a8" /><path d="M0.5 13.5V0.5H7.1" fill="none" stroke="#b4b4bc" stroke-width="1" /></svg><svg style="left:408px;top:186px" width="12" height="15" viewBox="0 0 12 15"><linearGradient id="dr" x1="0" y1="0" x2="0" y2="1"><stop offset="0" stop-color="#18a0ff"/><stop offset="1" stop-color="#c8ffff"/></linearGradient><path d="M2.5 0.5H11.5V14.5H0.5V2.5Z" fill="url(#dr)" stroke="#484848" stroke-width="1" /><path d="M0.5 2.5H2.5V0.5" fill="#e0f8ff" stroke="#484848" stroke-width="0.8" /><path d="M2.5 5.5H9.5M2.5 7.5H9.5M2.5 9.5H9.5M2.5 11.5H9.5" fill="none" stroke="#707880" stroke-width="1" /></svg><div style="left:381px;top:188px;width:10px;height:10px;background:linear-gradient(135deg,#ececec,#fff 60%);border:1px solid #8c8c8c;box-sizing:border-box;"></div><svg style="left:381px;top:188px" width="10" height="10" viewBox="0 0 10 10"><path d="M2.3 5L4.3 7.4L7.8 2.4" fill="none" stroke="#3858b0" stroke-width="1.45"/></svg><svg style="left:408px;top:202px" width="12" height="15" viewBox="0 0 12 15"><linearGradient id="dr" x1="0" y1="0" x2="0" y2="1"><stop offset="0" stop-color="#18a0ff"/><stop offset="1" stop-color="#c8ffff"/></linearGradient><path d="M2.5 0.5H11.5V14.5H0.5V2.5Z" fill="url(#dr)" stroke="#484848" stroke-width="1" /><path d="M0.5 2.5H2.5V0.5" fill="#e0f8ff" stroke="#484848" stroke-width="0.8" /><path d="M2.5 5.5H9.5M2.5 7.5H9.5M2.5 9.5H9.5M2.5 11.5H9.5" fill="none" stroke="#707880" stroke-width="1" /></svg><div style="left:381px;top:204px;width:10px;height:10px;background:linear-gradient(135deg,#ececec,#fff 60%);border:1px solid #8c8c8c;box-sizing:border-box;"></div><svg style="left:381px;top:204px" width="10" height="10" viewBox="0 0 10 10"><path d="M2.3 5L4.3 7.4L7.8 2.4" fill="none" stroke="#3858b0" stroke-width="1.45"/></svg><svg style="left:408px;top:218px" width="12" height="15" viewBox="0 0 12 15"><linearGradient id="dr" x1="0" y1="0" x2="0" y2="1"><stop offset="0" stop-color="#18a0ff"/><stop offset="1" stop-color="#c8ffff"/></linearGradient><path d="M2.5 0.5H11.5V14.5H0.5V2.5Z" fill="url(#dr)" stroke="#484848" stroke-width="1" /><path d="M0.5 2.5H2.5V0.5" fill="#e0f8ff" stroke="#484848" stroke-width="0.8" /><path d="M2.5 5.5H9.5M2.5 7.5H9.5M2.5 9.5H9.5M2.5 11.5H9.5" fill="none" stroke="#707880" stroke-width="1" /></svg><div style="left:381px;top:220px;width:10px;height:10px;background:linear-gradient(135deg,#ececec,#fff 60%);border:1px solid #8c8c8c;box-sizing:border-box;"></div><svg style="left:381px;top:220px" width="10" height="10" viewBox="0 0 10 10"><path d="M2.3 5L4.3 7.4L7.8 2.4" fill="none" stroke="#3858b0" stroke-width="1.45"/></svg><svg style="left:408px;top:234px" width="12" height="15" viewBox="0 0 12 15"><linearGradient id="dr" x1="0" y1="0" x2="0" y2="1"><stop offset="0" stop-color="#18a0ff"/><stop offset="1" stop-color="#c8ffff"/></linearGradient><path d="M2.5 0.5H11.5V14.5H0.5V2.5Z" fill="url(#dr)" stroke="#484848" stroke-width="1" /><path d="M0.5 2.5H2.5V0.5" fill="#e0f8ff" stroke="#484848" stroke-width="0.8" /><path d="M2.5 5.5H9.5M2.5 7.5H9.5M2.5 9.5H9.5M2.5 11.5H9.5" fill="none" stroke="#707880" stroke-width="1" /></svg><div style="left:381px;top:236px;width:10px;height:10px;background:linear-gradient(135deg,#ececec,#fff 60%);border:1px solid #8c8c8c;box-sizing:border-box;"></div><svg style="left:381px;top:236px" width="10" height="10" viewBox="0 0 10 10"><path d="M2.3 5L4.3 7.4L7.8 2.4" fill="none" stroke="#3858b0" stroke-width="1.45"/></svg><svg style="left:407px;top:250px" width="16" height="16" viewBox="0 0 16 16"><linearGradient id="fr" x1="0" y1="1" x2="1" y2="0"><stop offset="0.28" stop-color="#ffff00"/><stop offset="0.55" stop-color="#ffc800"/><stop offset="0.82" stop-color="#ff9000"/><stop offset="1" stop-color="#ff8000"/></linearGradient><rect x="0.5" y="0.5" width="6.6" height="2.4" fill="#ffcc20" stroke="#b0b0b8" /><rect x="0.5" y="2.5" width="15" height="11" fill="url(#fr)" stroke="#9094a8" /><path d="M0.5 13.5V0.5H7.1" fill="none" stroke="#b4b4bc" stroke-width="1" /></svg><svg style="left:408px;top:266px" width="12" height="15" viewBox="0 0 12 15"><linearGradient id="dr" x1="0" y1="0" x2="0" y2="1"><stop offset="0" stop-color="#18a0ff"/><stop offset="1" stop-color="#c8ffff"/></linearGradient><path d="M2.5 0.5H11.5V14.5H0.5V2.5Z" fill="url(#dr)" stroke="#484848" stroke-width="1" /><path d="M0.5 2.5H2.5V0.5" fill="#e0f8ff" stroke="#484848" stroke-width="0.8" /><path d="M2.5 5.5H9.5M2.5 7.5H9.5M2.5 9.5H9.5M2.5 11.5H9.5" fill="none" stroke="#707880" stroke-width="1" /></svg><div style="left:381px;top:268px;width:10px;height:10px;background:linear-gradient(135deg,#ececec,#fff 60%);border:1px solid #8c8c8c;box-sizing:border-box;"></div><svg style="left:381px;top:268px" width="10" height="10" viewBox="0 0 10 10"><path d="M2.3 5L4.3 7.4L7.8 2.4" fill="none" stroke="#3858b0" stroke-width="1.45"/></svg><svg style="left:408px;top:282px" width="12" height="15" viewBox="0 0 12 15"><linearGradient id="dr" x1="0" y1="0" x2="0" y2="1"><stop offset="0" stop-color="#18a0ff"/><stop offset="1" stop-color="#c8ffff"/></linearGradient><path d="M2.5 0.5H11.5V14.5H0.5V2.5Z" fill="url(#dr)" stroke="#484848" stroke-width="1" /><path d="M0.5 2.5H2.5V0.5" fill="#e0f8ff" stroke="#484848" stroke-width="0.8" /><path d="M2.5 5.5H9.5M2.5 7.5H9.5M2.5 9.5H9.5M2.5 11.5H9.5" fill="none" stroke="#707880" stroke-width="1" /></svg><div style="left:381px;top:284px;width:10px;height:10px;background:linear-gradient(135deg,#ececec,#fff 60%);border:1px solid #8c8c8c;box-sizing:border-box;"></div><svg style="left:381px;top:284px" width="10" height="10" viewBox="0 0 10 10"><path d="M2.3 5L4.3 7.4L7.8 2.4" fill="none" stroke="#3858b0" stroke-width="1.45"/></svg><svg style="left:408px;top:298px" width="12" height="15" viewBox="0 0 12 15"><linearGradient id="dr" x1="0" y1="0" x2="0" y2="1"><stop offset="0" stop-color="#18a0ff"/><stop offset="1" stop-color="#c8ffff"/></linearGradient><path d="M2.5 0.5H11.5V14.5H0.5V2.5Z" fill="url(#dr)" stroke="#484848" stroke-width="1" /><path d="M0.5 2.5H2.5V0.5" fill="#e0f8ff" stroke="#484848" stroke-width="0.8" /><path d="M2.5 5.5H9.5M2.5 7.5H9.5M2.5 9.5H9.5M2.5 11.5H9.5" fill="none" stroke="#707880" stroke-width="1" /></svg><div style="left:381px;top:300px;width:10px;height:10px;background:linear-gradient(135deg,#ececec,#fff 60%);border:1px solid #8c8c8c;box-sizing:border-box;"></div><svg style="left:381px;top:300px" width="10" height="10" viewBox="0 0 10 10"><path d="M2.3 5L4.3 7.4L7.8 2.4" fill="none" stroke="#3858b0" stroke-width="1.45"/></svg><svg style="left:408px;top:314px" width="12" height="15" viewBox="0 0 12 15"><linearGradient id="dr" x1="0" y1="0" x2="0" y2="1"><stop offset="0" stop-color="#18a0ff"/><stop offset="1" stop-color="#c8ffff"/></linearGradient><path d="M2.5 0.5H11.5V14.5H0.5V2.5Z" fill="url(#dr)" stroke="#484848" stroke-width="1" /><path d="M0.5 2.5H2.5V0.5" fill="#e0f8ff" stroke="#484848" stroke-width="0.8" /><path d="M2.5 5.5H9.5M2.5 7.5H9.5M2.5 9.5H9.5M2.5 11.5H9.5" fill="none" stroke="#707880" stroke-width="1" /></svg><div style="left:381px;top:316px;width:10px;height:10px;background:linear-gradient(135deg,#ececec,#fff 60%);border:1px solid #8c8c8c;box-sizing:border-box;"></div><svg style="left:381px;top:316px" width="10" height="10" viewBox="0 0 10 10"><path d="M2.3 5L4.3 7.4L7.8 2.4" fill="none" stroke="#3858b0" stroke-width="1.45"/></svg><svg style="left:408px;top:330px" width="12" height="15" viewBox="0 0 12 15"><linearGradient id="dr" x1="0" y1="0" x2="0" y2="1"><stop offset="0" stop-color="#18a0ff"/><stop offset="1" stop-color="#c8ffff"/></linearGradient><path d="M2.5 0.5H11.5V14.5H0.5V2.5Z" fill="url(#dr)" stroke="#484848" stroke-width="1" /><path d="M0.5 2.5H2.5V0.5" fill="#e0f8ff" stroke="#484848" stroke-width="0.8" /><path d="M2.5 5.5H9.5M2.5 7.5H9.5M2.5 9.5H9.5M2.5 11.5H9.5" fill="none" stroke="#707880" stroke-width="1" /></svg><div style="left:381px;top:332px;width:10px;height:10px;background:linear-gradient(135deg,#ececec,#fff 60%);border:1px solid #8c8c8c;box-sizing:border-box;"></div><svg style="left:381px;top:332px" width="10" height="10" viewBox="0 0 10 10"><path d="M2.3 5L4.3 7.4L7.8 2.4" fill="none" stroke="#3858b0" stroke-width="1.45"/></svg><svg style="left:408px;top:346px" width="12" height="15" viewBox="0 0 12 15"><linearGradient id="dr" x1="0" y1="0" x2="0" y2="1"><stop offset="0" stop-color="#18a0ff"/><stop offset="1" stop-color="#c8ffff"/></linearGradient><path d="M2.5 0.5H11.5V14.5H0.5V2.5Z" fill="url(#dr)" stroke="#484848" stroke-width="1" /><path d="M0.5 2.5H2.5V0.5" fill="#e0f8ff" stroke="#484848" stroke-width="0.8" /><path d="M2.5 5.5H9.5M2.5 7.5H9.5M2.5 9.5H9.5M2.5 11.5H9.5" fill="none" stroke="#707880" stroke-width="1" /></svg><div style="left:381px;top:348px;width:10px;height:10px;background:linear-gradient(135deg,#ececec,#fff 60%);border:1px solid #8c8c8c;box-sizing:border-box;"></div><svg style="left:381px;top:348px" width="10" height="10" viewBox="0 0 10 10"><path d="M2.3 5L4.3 7.4L7.8 2.4" fill="none" stroke="#3858b0" stroke-width="1.45"/></svg><svg style="left:408px;top:362px" width="12" height="15" viewBox="0 0 12 15"><linearGradient id="dr" x1="0" y1="0" x2="0" y2="1"><stop offset="0" stop-color="#18a0ff"/><stop offset="1" stop-color="#c8ffff"/></linearGradient><path d="M2.5 0.5H11.5V14.5H0.5V2.5Z" fill="url(#dr)" stroke="#484848" stroke-width="1" /><path d="M0.5 2.5H2.5V0.5" fill="#e0f8ff" stroke="#484848" stroke-width="0.8" /><path d="M2.5 5.5H9.5M2.5 7.5H9.5M2.5 9.5H9.5M2.5 11.5H9.5" fill="none" stroke="#707880" stroke-width="1" /></svg><div style="left:381px;top:364px;width:10px;height:10px;background:linear-gradient(135deg,#ececec,#fff 60%);border:1px solid #8c8c8c;box-sizing:border-box;"></div><svg style="left:381px;top:364px" width="10" height="10" viewBox="0 0 10 10"><path d="M2.3 5L4.3 7.4L7.8 2.4" fill="none" stroke="#3858b0" stroke-width="1.45"/></svg><svg style="left:408px;top:378px" width="12" height="15" viewBox="0 0 12 15"><linearGradient id="dr" x1="0" y1="0" x2="0" y2="1"><stop offset="0" stop-color="#18a0ff"/><stop offset="1" stop-color="#c8ffff"/></linearGradient><path d="M2.5 0.5H11.5V14.5H0.5V2.5Z" fill="url(#dr)" stroke="#484848" stroke-width="1" /><path d="M0.5 2.5H2.5V0.5" fill="#e0f8ff" stroke="#484848" stroke-width="0.8" /><path d="M2.5 5.5H9.5M2.5 7.5H9.5M2.5 9.5H9.5M2.5 11.5H9.5" fill="none" stroke="#707880" stroke-width="1" /></svg><div style="left:381px;top:380px;width:10px;height:10px;background:linear-gradient(135deg,#ececec,#fff 60%);border:1px solid #8c8c8c;box-sizing:border-box;"></div><svg style="left:381px;top:380px" width="10" height="10" viewBox="0 0 10 10"><path d="M2.3 5L4.3 7.4L7.8 2.4" fill="none" stroke="#3858b0" stroke-width="1.45"/></svg><svg style="left:407px;top:394px" width="16" height="16" viewBox="0 0 16 16"><linearGradient id="fr" x1="0" y1="1" x2="1" y2="0"><stop offset="0.28" stop-color="#ffff00"/><stop offset="0.55" stop-color="#ffc800"/><stop offset="0.82" stop-color="#ff9000"/><stop offset="1" stop-color="#ff8000"/></linearGradient><rect x="0.5" y="0.5" width="6.6" height="2.4" fill="#ffcc20" stroke="#b0b0b8" /><rect x="0.5" y="2.5" width="15" height="11" fill="url(#fr)" stroke="#9094a8" /><path d="M0.5 13.5V0.5H7.1" fill="none" stroke="#b4b4bc" stroke-width="1" /></svg><svg style="left:407px;top:410px" width="16" height="16" viewBox="0 0 16 16"><linearGradient id="fr" x1="0" y1="1" x2="1" y2="0"><stop offset="0.28" stop-color="#ffff00"/><stop offset="0.55" stop-color="#ffc800"/><stop offset="0.82" stop-color="#ff9000"/><stop offset="1" stop-color="#ff8000"/></linearGradient><rect x="0.5" y="0.5" width="6.6" height="2.4" fill="#ffcc20" stroke="#b0b0b8" /><rect x="0.5" y="2.5" width="15" height="11" fill="url(#fr)" stroke="#9094a8" /><path d="M0.5 13.5V0.5H7.1" fill="none" stroke="#b4b4bc" stroke-width="1" /></svg><svg style="left:407px;top:426px" width="16" height="16" viewBox="0 0 16 16"><linearGradient id="fr" x1="0" y1="1" x2="1" y2="0"><stop offset="0.28" stop-color="#ffff00"/><stop offset="0.55" stop-color="#ffc800"/><stop offset="0.82" stop-color="#ff9000"/><stop offset="1" stop-color="#ff8000"/></linearGradient><rect x="0.5" y="0.5" width="6.6" height="2.4" fill="#ffcc20" stroke="#b0b0b8" /><rect x="0.5" y="2.5" width="15" height="11" fill="url(#fr)" stroke="#9094a8" /><path d="M0.5 13.5V0.5H7.1" fill="none" stroke="#b4b4bc" stroke-width="1" /></svg><svg style="left:407px;top:442px" width="16" height="16" viewBox="0 0 16 16"><linearGradient id="fr" x1="0" y1="1" x2="1" y2="0"><stop offset="0.28" stop-color="#ffff00"/><stop offset="0.55" stop-color="#ffc800"/><stop offset="0.82" stop-color="#ff9000"/><stop offset="1" stop-color="#ff8000"/></linearGradient><rect x="0.5" y="0.5" width="6.6" height="2.4" fill="#ffcc20" stroke="#b0b0b8" /><rect x="0.5" y="2.5" width="15" height="11" fill="url(#fr)" stroke="#9094a8" /><path d="M0.5 13.5V0.5H7.1" fill="none" stroke="#b4b4bc" stroke-width="1" /></svg><svg style="left:407px;top:458px" width="16" height="16" viewBox="0 0 16 16"><linearGradient id="fr" x1="0" y1="1" x2="1" y2="0"><stop offset="0.28" stop-color="#ffff00"/><stop offset="0.55" stop-color="#ffc800"/><stop offset="0.82" stop-color="#ff9000"/><stop offset="1" stop-color="#ff8000"/></linearGradient><rect x="0.5" y="0.5" width="6.6" height="2.4" fill="#ffcc20" stroke="#b0b0b8" /><rect x="0.5" y="2.5" width="15" height="11" fill="url(#fr)" stroke="#9094a8" /><path d="M0.5 13.5V0.5H7.1" fill="none" stroke="#b4b4bc" stroke-width="1" /></svg><svg style="left:407px;top:474px" width="16" height="16" viewBox="0 0 16 16"><linearGradient id="fr" x1="0" y1="1" x2="1" y2="0"><stop offset="0.28" stop-color="#ffff00"/><stop offset="0.55" stop-color="#ffc800"/><stop offset="0.82" stop-color="#ff9000"/><stop offset="1" stop-color="#ff8000"/></linearGradient><rect x="0.5" y="0.5" width="6.6" height="2.4" fill="#ffcc20" stroke="#b0b0b8" /><rect x="0.5" y="2.5" width="15" height="11" fill="url(#fr)" stroke="#9094a8" /><path d="M0.5 13.5V0.5H7.1" fill="none" stroke="#b4b4bc" stroke-width="1" /></svg><svg style="left:407px;top:490px" width="16" height="16" viewBox="0 0 16 16"><linearGradient id="sr" x1="0" y1="0.6" x2="1" y2="0.2"><stop offset="0.1" stop-color="#ffff00"/><stop offset="0.6" stop-color="#ffc400"/><stop offset="1" stop-color="#ff8a00"/></linearGradient><rect x="0.5" y="0.5" width="6.6" height="2.4" fill="#ffcc20" stroke="#b0b0b8" /><rect x="0.5" y="2.5" width="15" height="11" fill="url(#sr)" stroke="#9094a8" /><path d="M0.5 13.5V0.5H7.1" fill="none" stroke="#b4b4bc" stroke-width="1" /><rect x="4.6" y="4.8" width="7.6" height="7.3" fill="#fff" stroke="#b07830" /><text x="8.4" y="10.9" font-size="6.6" fill="#404040" text-anchor="middle" font-family="Liberation Sans,sans-serif" >Σ</text></svg><svg style="left:408px;top:506px" width="12" height="15" viewBox="0 0 12 15"><linearGradient id="dr" x1="0" y1="0" x2="0" y2="1"><stop offset="0" stop-color="#18a0ff"/><stop offset="1" stop-color="#c8ffff"/></linearGradient><path d="M2.5 0.5H11.5V14.5H0.5V2.5Z" fill="url(#dr)" stroke="#484848" stroke-width="1" /><path d="M0.5 2.5H2.5V0.5" fill="#e0f8ff" stroke="#484848" stroke-width="0.8" /><path d="M2.5 5.5H9.5M2.5 7.5H9.5M2.5 9.5H9.5M2.5 11.5H9.5" fill="none" stroke="#707880" stroke-width="1" /></svg><div style="left:381px;top:508px;width:10px;height:10px;background:linear-gradient(135deg,#ececec,#fff 60%);border:1px solid #8c8c8c;box-sizing:border-box;"></div><svg style="left:381px;top:508px" width="10" height="10" viewBox="0 0 10 10"><path d="M2.3 5L4.3 7.4L7.8 2.4" fill="none" stroke="#3858b0" stroke-width="1.45"/></svg><svg style="left:407px;top:522px" width="16" height="16" viewBox="0 0 16 16"><linearGradient id="fr" x1="0" y1="1" x2="1" y2="0"><stop offset="0.28" stop-color="#ffff00"/><stop offset="0.55" stop-color="#ffc800"/><stop offset="0.82" stop-color="#ff9000"/><stop offset="1" stop-color="#ff8000"/></linearGradient><rect x="0.5" y="0.5" width="6.6" height="2.4" fill="#ffcc20" stroke="#b0b0b8" /><rect x="0.5" y="2.5" width="15" height="11" fill="url(#fr)" stroke="#9094a8" /><path d="M0.5 13.5V0.5H7.1" fill="none" stroke="#b4b4bc" stroke-width="1" /></svg><svg style="left:408px;top:538px" width="12" height="15" viewBox="0 0 12 15"><linearGradient id="dr" x1="0" y1="0" x2="0" y2="1"><stop offset="0" stop-color="#18a0ff"/><stop offset="1" stop-color="#c8ffff"/></linearGradient><path d="M2.5 0.5H11.5V14.5H0.5V2.5Z" fill="url(#dr)" stroke="#484848" stroke-width="1" /><path d="M0.5 2.5H2.5V0.5" fill="#e0f8ff" stroke="#484848" stroke-width="0.8" /><path d="M2.5 5.5H9.5M2.5 7.5H9.5M2.5 9.5H9.5M2.5 11.5H9.5" fill="none" stroke="#707880" stroke-width="1" /></svg><div style="left:381px;top:540px;width:10px;height:10px;background:linear-gradient(135deg,#ececec,#fff 60%);border:1px solid #8c8c8c;box-sizing:border-box;"></div><svg style="left:381px;top:540px" width="10" height="10" viewBox="0 0 10 10"><path d="M2.3 5L4.3 7.4L7.8 2.4" fill="none" stroke="#3858b0" stroke-width="1.45"/></svg><svg style="left:408px;top:554px" width="12" height="15" viewBox="0 0 12 15"><linearGradient id="dr" x1="0" y1="0" x2="0" y2="1"><stop offset="0" stop-color="#18a0ff"/><stop offset="1" stop-color="#c8ffff"/></linearGradient><path d="M2.5 0.5H11.5V14.5H0.5V2.5Z" fill="url(#dr)" stroke="#484848" stroke-width="1" /><path d="M0.5 2.5H2.5V0.5" fill="#e0f8ff" stroke="#484848" stroke-width="0.8" /><path d="M2.5 5.5H9.5M2.5 7.5H9.5M2.5 9.5H9.5M2.5 11.5H9.5" fill="none" stroke="#707880" stroke-width="1" /></svg><div style="left:381px;top:556px;width:10px;height:10px;background:linear-gradient(135deg,#ececec,#fff 60%);border:1px solid #8c8c8c;box-sizing:border-box;"></div><svg style="left:381px;top:556px" width="10" height="10" viewBox="0 0 10 10"><path d="M2.3 5L4.3 7.4L7.8 2.4" fill="none" stroke="#3858b0" stroke-width="1.45"/></svg><svg style="left:407px;top:570px" width="16" height="16" viewBox="0 0 16 16"><linearGradient id="sr" x1="0" y1="0.6" x2="1" y2="0.2"><stop offset="0.1" stop-color="#ffff00"/><stop offset="0.6" stop-color="#ffc400"/><stop offset="1" stop-color="#ff8a00"/></linearGradient><rect x="0.5" y="0.5" width="6.6" height="2.4" fill="#ffcc20" stroke="#b0b0b8" /><rect x="0.5" y="2.5" width="15" height="11" fill="url(#sr)" stroke="#9094a8" /><path d="M0.5 13.5V0.5H7.1" fill="none" stroke="#b4b4bc" stroke-width="1" /><rect x="4.6" y="4.8" width="7.6" height="7.3" fill="#fff" stroke="#b07830" /><text x="8.4" y="10.9" font-size="6.6" fill="#404040" text-anchor="middle" font-family="Liberation Sans,sans-serif" >Σ</text></svg><svg style="left:408px;top:586px" width="12" height="15" viewBox="0 0 12 15"><linearGradient id="dr" x1="0" y1="0" x2="0" y2="1"><stop offset="0" stop-color="#18a0ff"/><stop offset="1" stop-color="#c8ffff"/></linearGradient><path d="M2.5 0.5H11.5V14.5H0.5V2.5Z" fill="url(#dr)" stroke="#484848" stroke-width="1" /><path d="M0.5 2.5H2.5V0.5" fill="#e0f8ff" stroke="#484848" stroke-width="0.8" /><path d="M2.5 5.5H9.5M2.5 7.5H9.5M2.5 9.5H9.5M2.5 11.5H9.5" fill="none" stroke="#707880" stroke-width="1" /></svg><div style="left:381px;top:588px;width:10px;height:10px;background:linear-gradient(135deg,#ececec,#fff 60%);border:1px solid #8c8c8c;box-sizing:border-box;"></div><svg style="left:381px;top:588px" width="10" height="10" viewBox="0 0 10 10"><path d="M2.3 5L4.3 7.4L7.8 2.4" fill="none" stroke="#3858b0" stroke-width="1.45"/></svg><svg style="left:407px;top:602px" width="16" height="16" viewBox="0 0 16 16"><linearGradient id="fr" x1="0" y1="1" x2="1" y2="0"><stop offset="0.28" stop-color="#ffff00"/><stop offset="0.55" stop-color="#ffc800"/><stop offset="0.82" stop-color="#ff9000"/><stop offset="1" stop-color="#ff8000"/></linearGradient><rect x="0.5" y="0.5" width="6.6" height="2.4" fill="#ffcc20" stroke="#b0b0b8" /><rect x="0.5" y="2.5" width="15" height="11" fill="url(#fr)" stroke="#9094a8" /><path d="M0.5 13.5V0.5H7.1" fill="none" stroke="#b4b4bc" stroke-width="1" /></svg><svg style="left:408px;top:618px" width="12" height="15" viewBox="0 0 12 15"><linearGradient id="dr" x1="0" y1="0" x2="0" y2="1"><stop offset="0" stop-color="#18a0ff"/><stop offset="1" stop-color="#c8ffff"/></linearGradient><path d="M2.5 0.5H11.5V14.5H0.5V2.5Z" fill="url(#dr)" stroke="#484848" stroke-width="1" /><path d="M0.5 2.5H2.5V0.5" fill="#e0f8ff" stroke="#484848" stroke-width="0.8" /><path d="M2.5 5.5H9.5M2.5 7.5H9.5M2.5 9.5H9.5M2.5 11.5H9.5" fill="none" stroke="#707880" stroke-width="1" /></svg><div style="left:381px;top:620px;width:10px;height:10px;background:linear-gradient(135deg,#ececec,#fff 60%);border:1px solid #8c8c8c;box-sizing:border-box;"></div><svg style="left:381px;top:620px" width="10" height="10" viewBox="0 0 10 10"><path d="M2.3 5L4.3 7.4L7.8 2.4" fill="none" stroke="#3858b0" stroke-width="1.45"/></svg><svg style="left:408px;top:634px" width="12" height="15" viewBox="0 0 12 15"><linearGradient id="dr" x1="0" y1="0" x2="0" y2="1"><stop offset="0" stop-color="#18a0ff"/><stop offset="1" stop-color="#c8ffff"/></linearGradient><path d="M2.5 0.5H11.5V14.5H0.5V2.5Z" fill="url(#dr)" stroke="#484848" stroke-width="1" /><path d="M0.5 2.5H2.5V0.5" fill="#e0f8ff" stroke="#484848" stroke-width="0.8" /><path d="M2.5 5.5H9.5M2.5 7.5H9.5M2.5 9.5H9.5M2.5 11.5H9.5" fill="none" stroke="#707880" stroke-width="1" /></svg><div style="left:381px;top:636px;width:10px;height:10px;background:linear-gradient(135deg,#ececec,#fff 60%);border:1px solid #8c8c8c;box-sizing:border-box;"></div><svg style="left:381px;top:636px" width="10" height="10" viewBox="0 0 10 10"><path d="M2.3 5L4.3 7.4L7.8 2.4" fill="none" stroke="#3858b0" stroke-width="1.45"/></svg><svg style="left:408px;top:650px" width="12" height="15" viewBox="0 0 12 15"><linearGradient id="dr" x1="0" y1="0" x2="0" y2="1"><stop offset="0" stop-color="#18a0ff"/><stop offset="1" stop-color="#c8ffff"/></linearGradient><path d="M2.5 0.5H11.5V14.5H0.5V2.5Z" fill="url(#dr)" stroke="#484848" stroke-width="1" /><path d="M0.5 2.5H2.5V0.5" fill="#e0f8ff" stroke="#484848" stroke-width="0.8" /><path d="M2.5 5.5H9.5M2.5 7.5H9.5M2.5 9.5H9.5M2.5 11.5H9.5" fill="none" stroke="#707880" stroke-width="1" /></svg><div style="left:381px;top:652px;width:10px;height:10px;background:linear-gradient(135deg,#ececec,#fff 60%);border:1px solid #8c8c8c;box-sizing:border-box;"></div><svg style="left:381px;top:652px" width="10" height="10" viewBox="0 0 10 10"><path d="M2.3 5L4.3 7.4L7.8 2.4" fill="none" stroke="#3858b0" stroke-width="1.45"/></svg><svg style="left:408px;top:666px" width="12" height="15" viewBox="0 0 12 15"><linearGradient id="dr" x1="0" y1="0" x2="0" y2="1"><stop offset="0" stop-color="#18a0ff"/><stop offset="1" stop-color="#c8ffff"/></linearGradient><path d="M2.5 0.5H11.5V14.5H0.5V2.5Z" fill="url(#dr)" stroke="#484848" stroke-width="1" /><path d="M0.5 2.5H2.5V0.5" fill="#e0f8ff" stroke="#484848" stroke-width="0.8" /><path d="M2.5 5.5H9.5M2.5 7.5H9.5M2.5 9.5H9.5M2.5 11.5H9.5" fill="none" stroke="#707880" stroke-width="1" /></svg><div style="left:381px;top:668px;width:10px;height:10px;background:linear-gradient(135deg,#ececec,#fff 60%);border:1px solid #8c8c8c;box-sizing:border-box;"></div><svg style="left:381px;top:668px" width="10" height="10" viewBox="0 0 10 10"><path d="M2.3 5L4.3 7.4L7.8 2.4" fill="none" stroke="#3858b0" stroke-width="1.45"/></svg><svg style="left:408px;top:682px" width="12" height="15" viewBox="0 0 12 15"><linearGradient id="dr" x1="0" y1="0" x2="0" y2="1"><stop offset="0" stop-color="#18a0ff"/><stop offset="1" stop-color="#c8ffff"/></linearGradient><path d="M2.5 0.5H11.5V14.5H0.5V2.5Z" fill="url(#dr)" stroke="#484848" stroke-width="1" /><path d="M0.5 2.5H2.5V0.5" fill="#e0f8ff" stroke="#484848" stroke-width="0.8" /><path d="M2.5 5.5H9.5M2.5 7.5H9.5M2.5 9.5H9.5M2.5 11.5H9.5" fill="none" stroke="#707880" stroke-width="1" /></svg><div style="left:381px;top:684px;width:10px;height:10px;background:linear-gradient(135deg,#ececec,#fff 60%);border:1px solid #8c8c8c;box-sizing:border-box;"></div><svg style="left:381px;top:684px" width="10" height="10" viewBox="0 0 10 10"><path d="M2.3 5L4.3 7.4L7.8 2.4" fill="none" stroke="#3858b0" stroke-width="1.45"/></svg><svg style="left:408px;top:698px" width="12" height="15" viewBox="0 0 12 15"><linearGradient id="dr" x1="0" y1="0" x2="0" y2="1"><stop offset="0" stop-color="#18a0ff"/><stop offset="1" stop-color="#c8ffff"/></linearGradient><path d="M2.5 0.5H11.5V14.5H0.5V2.5Z" fill="url(#dr)" stroke="#484848" stroke-width="1" /><path d="M0.5 2.5H2.5V0.5" fill="#e0f8ff" stroke="#484848" stroke-width="0.8" /><path d="M2.5 5.5H9.5M2.5 7.5H9.5M2.5 9.5H9.5M2.5 11.5H9.5" fill="none" stroke="#707880" stroke-width="1" /></svg><div style="left:381px;top:700px;width:10px;height:10px;background:linear-gradient(135deg,#ececec,#fff 60%);border:1px solid #8c8c8c;box-sizing:border-box;"></div><svg style="left:381px;top:700px" width="10" height="10" viewBox="0 0 10 10"><path d="M2.3 5L4.3 7.4L7.8 2.4" fill="none" stroke="#3858b0" stroke-width="1.45"/></svg><svg style="left:408px;top:714px" width="12" height="15" viewBox="0 0 12 15"><linearGradient id="dr" x1="0" y1="0" x2="0" y2="1"><stop offset="0" stop-color="#18a0ff"/><stop offset="1" stop-color="#c8ffff"/></linearGradient><path d="M2.5 0.5H11.5V14.5H0.5V2.5Z" fill="url(#dr)" stroke="#484848" stroke-width="1" /><path d="M0.5 2.5H2.5V0.5" fill="#e0f8ff" stroke="#484848" stroke-width="0.8" /><path d="M2.5 5.5H9.5M2.5 7.5H9.5M2.5 9.5H9.5M2.5 11.5H9.5" fill="none" stroke="#707880" stroke-width="1" /></svg><div style="left:381px;top:716px;width:10px;height:10px;background:linear-gradient(135deg,#ececec,#fff 60%);border:1px solid #8c8c8c;box-sizing:border-box;"></div><svg style="left:381px;top:716px" width="10" height="10" viewBox="0 0 10 10"><path d="M2.3 5L4.3 7.4L7.8 2.4" fill="none" stroke="#3858b0" stroke-width="1.45"/></svg><svg style="left:408px;top:730px" width="12" height="15" viewBox="0 0 12 15"><linearGradient id="dr" x1="0" y1="0" x2="0" y2="1"><stop offset="0" stop-color="#18a0ff"/><stop offset="1" stop-color="#c8ffff"/></linearGradient><path d="M2.5 0.5H11.5V14.5H0.5V2.5Z" fill="url(#dr)" stroke="#484848" stroke-width="1" /><path d="M0.5 2.5H2.5V0.5" fill="#e0f8ff" stroke="#484848" stroke-width="0.8" /><path d="M2.5 5.5H9.5M2.5 7.5H9.5M2.5 9.5H9.5M2.5 11.5H9.5" fill="none" stroke="#707880" stroke-width="1" /></svg><div style="left:381px;top:732px;width:10px;height:10px;background:linear-gradient(135deg,#ececec,#fff 60%);border:1px solid #8c8c8c;box-sizing:border-box;"></div><svg style="left:381px;top:732px" width="10" height="10" viewBox="0 0 10 10"><path d="M2.3 5L4.3 7.4L7.8 2.4" fill="none" stroke="#3858b0" stroke-width="1.45"/></svg><svg style="left:408px;top:746px" width="12" height="15" viewBox="0 0 12 15"><linearGradient id="dr" x1="0" y1="0" x2="0" y2="1"><stop offset="0" stop-color="#18a0ff"/><stop offset="1" stop-color="#c8ffff"/></linearGradient><path d="M2.5 0.5H11.5V14.5H0.5V2.5Z" fill="url(#dr)" stroke="#484848" stroke-width="1" /><path d="M0.5 2.5H2.5V0.5" fill="#e0f8ff" stroke="#484848" stroke-width="0.8" /><path d="M2.5 5.5H9.5M2.5 7.5H9.5M2.5 9.5H9.5M2.5 11.5H9.5" fill="none" stroke="#707880" stroke-width="1" /></svg><div style="left:381px;top:748px;width:10px;height:10px;background:linear-gradient(135deg,#ececec,#fff 60%);border:1px solid #8c8c8c;box-sizing:border-box;"></div><svg style="left:381px;top:748px" width="10" height="10" viewBox="0 0 10 10"><path d="M2.3 5L4.3 7.4L7.8 2.4" fill="none" stroke="#3858b0" stroke-width="1.45"/></svg><svg style="left:408px;top:762px" width="12" height="15" viewBox="0 0 12 15"><linearGradient id="dr" x1="0" y1="0" x2="0" y2="1"><stop offset="0" stop-color="#18a0ff"/><stop offset="1" stop-color="#c8ffff"/></linearGradient><path d="M2.5 0.5H11.5V14.5H0.5V2.5Z" fill="url(#dr)" stroke="#484848" stroke-width="1" /><path d="M0.5 2.5H2.5V0.5" fill="#e0f8ff" stroke="#484848" stroke-width="0.8" /><path d="M2.5 5.5H9.5M2.5 7.5H9.5M2.5 9.5H9.5M2.5 11.5H9.5" fill="none" stroke="#707880" stroke-width="1" /></svg><div style="left:381px;top:764px;width:10px;height:10px;background:linear-gradient(135deg,#ececec,#fff 60%);border:1px solid #8c8c8c;box-sizing:border-box;"></div><svg style="left:381px;top:764px" width="10" height="10" viewBox="0 0 10 10"><path d="M2.3 5L4.3 7.4L7.8 2.4" fill="none" stroke="#3858b0" stroke-width="1.45"/></svg><svg style="left:408px;top:778px" width="12" height="15" viewBox="0 0 12 15"><linearGradient id="dr" x1="0" y1="0" x2="0" y2="1"><stop offset="0" stop-color="#18a0ff"/><stop offset="1" stop-color="#c8ffff"/></linearGradient><path d="M2.5 0.5H11.5V14.5H0.5V2.5Z" fill="url(#dr)" stroke="#484848" stroke-width="1" /><path d="M0.5 2.5H2.5V0.5" fill="#e0f8ff" stroke="#484848" stroke-width="0.8" /><path d="M2.5 5.5H9.5M2.5 7.5H9.5M2.5 9.5H9.5M2.5 11.5H9.5" fill="none" stroke="#707880" stroke-width="1" /></svg><div style="left:381px;top:780px;width:10px;height:10px;background:linear-gradient(135deg,#ececec,#fff 60%);border:1px solid #8c8c8c;box-sizing:border-box;"></div><svg style="left:381px;top:780px" width="10" height="10" viewBox="0 0 10 10"><path d="M2.3 5L4.3 7.4L7.8 2.4" fill="none" stroke="#3858b0" stroke-width="1.45"/></svg><svg style="left:408px;top:794px" width="12" height="15" viewBox="0 0 12 15"><linearGradient id="dr" x1="0" y1="0" x2="0" y2="1"><stop offset="0" stop-color="#18a0ff"/><stop offset="1" stop-color="#c8ffff"/></linearGradient><path d="M2.5 0.5H11.5V14.5H0.5V2.5Z" fill="url(#dr)" stroke="#484848" stroke-width="1" /><path d="M0.5 2.5H2.5V0.5" fill="#e0f8ff" stroke="#484848" stroke-width="0.8" /><path d="M2.5 5.5H9.5M2.5 7.5H9.5M2.5 9.5H9.5M2.5 11.5H9.5" fill="none" stroke="#707880" stroke-width="1" /></svg><div style="left:381px;top:796px;width:10px;height:10px;background:linear-gradient(135deg,#ececec,#fff 60%);border:1px solid #8c8c8c;box-sizing:border-box;"></div><svg style="left:381px;top:796px" width="10" height="10" viewBox="0 0 10 10"><path d="M2.3 5L4.3 7.4L7.8 2.4" fill="none" stroke="#3858b0" stroke-width="1.45"/></svg><svg style="left:408px;top:810px" width="12" height="15" viewBox="0 0 12 15"><linearGradient id="dr" x1="0" y1="0" x2="0" y2="1"><stop offset="0" stop-color="#18a0ff"/><stop offset="1" stop-color="#c8ffff"/></linearGradient><path d="M2.5 0.5H11.5V14.5H0.5V2.5Z" fill="url(#dr)" stroke="#484848" stroke-width="1" /><path d="M0.5 2.5H2.5V0.5" fill="#e0f8ff" stroke="#484848" stroke-width="0.8" /><path d="M2.5 5.5H9.5M2.5 7.5H9.5M2.5 9.5H9.5M2.5 11.5H9.5" fill="none" stroke="#707880" stroke-width="1" /></svg><div style="left:381px;top:812px;width:10px;height:10px;background:linear-gradient(135deg,#ececec,#fff 60%);border:1px solid #8c8c8c;box-sizing:border-box;"></div><svg style="left:381px;top:812px" width="10" height="10" viewBox="0 0 10 10"><path d="M2.3 5L4.3 7.4L7.8 2.4" fill="none" stroke="#3858b0" stroke-width="1.45"/></svg><svg style="left:408px;top:826px" width="12" height="15" viewBox="0 0 12 15"><linearGradient id="dr" x1="0" y1="0" x2="0" y2="1"><stop offset="0" stop-color="#18a0ff"/><stop offset="1" stop-color="#c8ffff"/></linearGradient><path d="M2.5 0.5H11.5V14.5H0.5V2.5Z" fill="url(#dr)" stroke="#484848" stroke-width="1" /><path d="M0.5 2.5H2.5V0.5" fill="#e0f8ff" stroke="#484848" stroke-width="0.8" /><path d="M2.5 5.5H9.5M2.5 7.5H9.5M2.5 9.5H9.5M2.5 11.5H9.5" fill="none" stroke="#707880" stroke-width="1" /></svg><div style="left:381px;top:828px;width:10px;height:10px;background:linear-gradient(135deg,#ececec,#fff 60%);border:1px solid #8c8c8c;box-sizing:border-box;"></div><svg style="left:381px;top:828px" width="10" height="10" viewBox="0 0 10 10"><path d="M2.3 5L4.3 7.4L7.8 2.4" fill="none" stroke="#3858b0" stroke-width="1.45"/></svg><svg style="left:408px;top:842px" width="12" height="15" viewBox="0 0 12 15"><linearGradient id="dr" x1="0" y1="0" x2="0" y2="1"><stop offset="0" stop-color="#18a0ff"/><stop offset="1" stop-color="#c8ffff"/></linearGradient><path d="M2.5 0.5H11.5V14.5H0.5V2.5Z" fill="url(#dr)" stroke="#484848" stroke-width="1" /><path d="M0.5 2.5H2.5V0.5" fill="#e0f8ff" stroke="#484848" stroke-width="0.8" /><path d="M2.5 5.5H9.5M2.5 7.5H9.5M2.5 9.5H9.5M2.5 11.5H9.5" fill="none" stroke="#707880" stroke-width="1" /></svg><div style="left:381px;top:844px;width:10px;height:10px;background:linear-gradient(135deg,#ececec,#fff 60%);border:1px solid #8c8c8c;box-sizing:border-box;"></div><svg style="left:381px;top:844px" width="10" height="10" viewBox="0 0 10 10"><path d="M2.3 5L4.3 7.4L7.8 2.4" fill="none" stroke="#3858b0" stroke-width="1.45"/></svg><svg style="left:408px;top:858px" width="12" height="15" viewBox="0 0 12 15"><linearGradient id="dr" x1="0" y1="0" x2="0" y2="1"><stop offset="0" stop-color="#18a0ff"/><stop offset="1" stop-color="#c8ffff"/></linearGradient><path d="M2.5 0.5H11.5V14.5H0.5V2.5Z" fill="url(#dr)" stroke="#484848" stroke-width="1" /><path d="M0.5 2.5H2.5V0.5" fill="#e0f8ff" stroke="#484848" stroke-width="0.8" /><path d="M2.5 5.5H9.5M2.5 7.5H9.5M2.5 9.5H9.5M2.5 11.5H9.5" fill="none" stroke="#707880" stroke-width="1" /></svg><div style="left:381px;top:860px;width:10px;height:10px;background:linear-gradient(135deg,#ececec,#fff 60%);border:1px solid #8c8c8c;box-sizing:border-box;"></div><svg style="left:381px;top:860px" width="10" height="10" viewBox="0 0 10 10"><path d="M2.3 5L4.3 7.4L7.8 2.4" fill="none" stroke="#3858b0" stroke-width="1.45"/></svg><svg style="left:408px;top:874px" width="12" height="15" viewBox="0 0 12 15"><linearGradient id="dr" x1="0" y1="0" x2="0" y2="1"><stop offset="0" stop-color="#18a0ff"/><stop offset="1" stop-color="#c8ffff"/></linearGradient><path d="M2.5 0.5H11.5V14.5H0.5V2.5Z" fill="url(#dr)" stroke="#484848" stroke-width="1" /><path d="M0.5 2.5H2.5V0.5" fill="#e0f8ff" stroke="#484848" stroke-width="0.8" /><path d="M2.5 5.5H9.5M2.5 7.5H9.5M2.5 9.5H9.5M2.5 11.5H9.5" fill="none" stroke="#707880" stroke-width="1" /></svg><div style="left:381px;top:876px;width:10px;height:10px;background:linear-gradient(135deg,#ececec,#fff 60%);border:1px solid #8c8c8c;box-sizing:border-box;"></div><svg style="left:381px;top:876px" width="10" height="10" viewBox="0 0 10 10"><path d="M2.3 5L4.3 7.4L7.8 2.4" fill="none" stroke="#3858b0" stroke-width="1.45"/></svg><svg style="left:408px;top:890px" width="12" height="15" viewBox="0 0 12 15"><linearGradient id="dr" x1="0" y1="0" x2="0" y2="1"><stop offset="0" stop-color="#18a0ff"/><stop offset="1" stop-color="#c8ffff"/></linearGradient><path d="M2.5 0.5H11.5V14.5H0.5V2.5Z" fill="url(#dr)" stroke="#484848" stroke-width="1" /><path d="M0.5 2.5H2.5V0.5" fill="#e0f8ff" stroke="#484848" stroke-width="0.8" /><path d="M2.5 5.5H9.5M2.5 7.5H9.5M2.5 9.5H9.5M2.5 11.5H9.5" fill="none" stroke="#707880" stroke-width="1" /></svg><div style="left:381px;top:892px;width:10px;height:10px;background:linear-gradient(135deg,#ececec,#fff 60%);border:1px solid #8c8c8c;box-sizing:border-box;"></div><svg style="left:381px;top:892px" width="10" height="10" viewBox="0 0 10 10"><path d="M2.3 5L4.3 7.4L7.8 2.4" fill="none" stroke="#3858b0" stroke-width="1.45"/></svg><svg style="left:408px;top:906px" width="12" height="15" viewBox="0 0 12 15"><linearGradient id="dr" x1="0" y1="0" x2="0" y2="1"><stop offset="0" stop-color="#18a0ff"/><stop offset="1" stop-color="#c8ffff"/></linearGradient><path d="M2.5 0.5H11.5V14.5H0.5V2.5Z" fill="url(#dr)" stroke="#484848" stroke-width="1" /><path d="M0.5 2.5H2.5V0.5" fill="#e0f8ff" stroke="#484848" stroke-width="0.8" /><path d="M2.5 5.5H9.5M2.5 7.5H9.5M2.5 9.5H9.5M2.5 11.5H9.5" fill="none" stroke="#707880" stroke-width="1" /></svg><div style="left:381px;top:908px;width:10px;height:10px;background:linear-gradient(135deg,#ececec,#fff 60%);border:1px solid #8c8c8c;box-sizing:border-box;"></div><svg style="left:381px;top:908px" width="10" height="10" viewBox="0 0 10 10"><path d="M2.3 5L4.3 7.4L7.8 2.4" fill="none" stroke="#3858b0" stroke-width="1.45"/></svg><svg style="left:408px;top:922px" width="12" height="15" viewBox="0 0 12 15"><linearGradient id="dr" x1="0" y1="0" x2="0" y2="1"><stop offset="0" stop-color="#18a0ff"/><stop offset="1" stop-color="#c8ffff"/></linearGradient><path d="M2.5 0.5H11.5V14.5H0.5V2.5Z" fill="url(#dr)" stroke="#484848" stroke-width="1" /><path d="M0.5 2.5H2.5V0.5" fill="#e0f8ff" stroke="#484848" stroke-width="0.8" /><path d="M2.5 5.5H9.5M2.5 7.5H9.5M2.5 9.5H9.5M2.5 11.5H9.5" fill="none" stroke="#707880" stroke-width="1" /></svg><div style="left:381px;top:924px;width:10px;height:10px;background:linear-gradient(135deg,#ececec,#fff 60%);border:1px solid #8c8c8c;box-sizing:border-box;"></div><svg style="left:381px;top:924px" width="10" height="10" viewBox="0 0 10 10"><path d="M2.3 5L4.3 7.4L7.8 2.4" fill="none" stroke="#3858b0" stroke-width="1.45"/></svg><svg style="left:408px;top:938px" width="12" height="15" viewBox="0 0 12 15"><linearGradient id="dr" x1="0" y1="0" x2="0" y2="1"><stop offset="0" stop-color="#18a0ff"/><stop offset="1" stop-color="#c8ffff"/></linearGradient><path d="M2.5 0.5H11.5V14.5H0.5V2.5Z" fill="url(#dr)" stroke="#484848" stroke-width="1" /><path d="M0.5 2.5H2.5V0.5" fill="#e0f8ff" stroke="#484848" stroke-width="0.8" /><path d="M2.5 5.5H9.5M2.5 7.5H9.5M2.5 9.5H9.5M2.5 11.5H9.5" fill="none" stroke="#707880" stroke-width="1" /></svg><div style="left:381px;top:940px;width:10px;height:10px;background:linear-gradient(135deg,#ececec,#fff 60%);border:1px solid #8c8c8c;box-sizing:border-box;"></div><svg style="left:381px;top:940px" width="10" height="10" viewBox="0 0 10 10"><path d="M2.3 5L4.3 7.4L7.8 2.4" fill="none" stroke="#3858b0" stroke-width="1.45"/></svg><svg style="left:408px;top:954px" width="12" height="15" viewBox="0 0 12 15"><linearGradient id="dr" x1="0" y1="0" x2="0" y2="1"><stop offset="0" stop-color="#18a0ff"/><stop offset="1" stop-color="#c8ffff"/></linearGradient><path d="M2.5 0.5H11.5V14.5H0.5V2.5Z" fill="url(#dr)" stroke="#484848" stroke-width="1" /><path d="M0.5 2.5H2.5V0.5" fill="#e0f8ff" stroke="#484848" stroke-width="0.8" /><path d="M2.5 5.5H9.5M2.5 7.5H9.5M2.5 9.5H9.5M2.5 11.5H9.5" fill="none" stroke="#707880" stroke-width="1" /></svg><div style="left:381px;top:956px;width:10px;height:10px;background:linear-gradient(135deg,#ececec,#fff 60%);border:1px solid #8c8c8c;box-sizing:border-box;"></div><svg style="left:381px;top:956px" width="10" height="10" viewBox="0 0 10 10"><path d="M2.3 5L4.3 7.4L7.8 2.4" fill="none" stroke="#3858b0" stroke-width="1.45"/></svg><svg style="left:408px;top:970px" width="12" height="15" viewBox="0 0 12 15"><linearGradient id="dr" x1="0" y1="0" x2="0" y2="1"><stop offset="0" stop-color="#18a0ff"/><stop offset="1" stop-color="#c8ffff"/></linearGradient><path d="M2.5 0.5H11.5V14.5H0.5V2.5Z" fill="url(#dr)" stroke="#484848" stroke-width="1" /><path d="M0.5 2.5H2.5V0.5" fill="#e0f8ff" stroke="#484848" stroke-width="0.8" /><path d="M2.5 5.5H9.5M2.5 7.5H9.5M2.5 9.5H9.5M2.5 11.5H9.5" fill="none" stroke="#707880" stroke-width="1" /></svg><div style="left:381px;top:972px;width:10px;height:10px;background:linear-gradient(135deg,#ececec,#fff 60%);border:1px solid #8c8c8c;box-sizing:border-box;"></div><svg style="left:381px;top:972px" width="10" height="10" viewBox="0 0 10 10"><path d="M2.3 5L4.3 7.4L7.8 2.4" fill="none" stroke="#3858b0" stroke-width="1.45"/></svg><svg style="left:1511px;top:874px" width="14" height="13" viewBox="0 0 14 13"><path d="M7 0.8L13.5 12.5H0.5Z" fill="#ffe040" stroke="#c8a820" stroke-width="0.9" stroke-linejoin="round"/><path d="M7 4.5V8.8M7 10.2V11.4" fill="none" stroke="#303030" stroke-width="1.3" /></svg><div style="left:326px;top:987px;width:1423px;height:1px;background:#fff;"></div><div style="left:324px;top:988px;width:1426px;height:1px;background:#a0a0a0;"></div><div style="left:324px;top:989px;width:1426px;height:1px;background:#fff;"></div><div style="left:326px;top:992px;width:75px;height:21px;background:#f7f7f7;"></div><div style="left:326px;top:992px;width:75px;height:1px;background:#a8a8a8;"></div><div style="left:326px;top:992px;width:1px;height:21px;background:#a8a8a8;"></div><div style="left:326px;top:1012px;width:75px;height:1px;background:#fff;"></div><div style="left:400px;top:992px;width:1px;height:21px;background:#fff;"></div><div style="left:367px;top:1022px;width:1383px;height:1px;background:#696969;"></div><div style="left:367px;top:1023px;width:1383px;height:1px;background:#a0a0a0;"></div><div style="left:324px;top:1022px;width:1px;height:21px;background:#fff;"></div><div style="left:324px;top:1042px;width:43px;height:1px;background:#696969;"></div><div style="left:325px;top:1041px;width:41px;height:1px;background:#a0a0a0;"></div><div style="left:366px;top:1022px;width:1px;height:21px;background:#696969;"></div><div style="left:365px;top:1023px;width:1px;height:19px;background:#a0a0a0;"></div><div style="left:368px;top:1024px;width:1px;height:16px;background:#fff;"></div><div style="left:368px;top:1040px;width:84px;height:1px;background:#696969;"></div><div style="left:369px;top:1039px;width:82px;height:1px;background:#a0a0a0;"></div><div style="left:451px;top:1024px;width:1px;height:17px;background:#696969;"></div><div style="left:450px;top:1024px;width:1px;height:16px;background:#a0a0a0;"></div><div style="left:453px;top:1024px;width:1px;height:16px;background:#fff;"></div><div style="left:453px;top:1040px;width:86px;height:1px;background:#696969;"></div><div style="left:454px;top:1039px;width:84px;height:1px;background:#a0a0a0;"></div><div style="left:538px;top:1024px;width:1px;height:17px;background:#696969;"></div><div style="left:537px;top:1024px;width:1px;height:16px;background:#a0a0a0;"></div><div style="left:2px;top:1045px;width:1748px;height:1px;background:#a0a0a0;"></div><div style="left:2px;top:1046px;width:1748px;height:1px;background:#fff;"></div><div style="left:1630px;top:1054px;width:113px;height:22px;background:#f0f0f0;"></div><div style="left:1630px;top:1054px;width:112px;height:1px;background:#fff;"></div><div style="left:1630px;top:1054px;width:1px;height:21px;background:#fff;"></div><div style="left:1630px;top:1075px;width:113px;height:1px;background:#696969;"></div><div style="left:1742px;top:1054px;width:1px;height:22px;background:#696969;"></div><div style="left:1631px;top:1074px;width:111px;height:1px;background:#a0a0a0;"></div><div style="left:1741px;top:1055px;width:1px;height:20px;background:#a0a0a0;"></div><div style="left:2px;top:1085px;width:1748px;height:1px;background:#a0a0a0;"></div><div style="left:2px;top:1086px;width:1748px;height:1px;background:#fff;"></div><div style="left:2px;top:1089px;width:84px;height:1px;background:#a0a0a0;"></div><div style="left:2px;top:1089px;width:1px;height:26px;background:#a0a0a0;"></div><div style="left:2px;top:1114px;width:84px;height:1px;background:#fff;"></div><div style="left:85px;top:1089px;width:1px;height:26px;background:#fff;"></div><div style="left:87px;top:1087px;width:1px;height:29px;background:#a0a0a0;"></div><div style="left:88px;top:1087px;width:1px;height:29px;background:#fff;"></div><div style="left:90px;top:1089px;width:296px;height:1px;background:#a0a0a0;"></div><div style="left:90px;top:1089px;width:1px;height:26px;background:#a0a0a0;"></div><div style="left:90px;top:1114px;width:296px;height:1px;background:#fff;"></div><div style="left:385px;top:1089px;width:1px;height:26px;background:#fff;"></div><div style="left:387px;top:1087px;width:1px;height:29px;background:#a0a0a0;"></div><div style="left:388px;top:1087px;width:1px;height:29px;background:#fff;"></div><div style="left:390px;top:1089px;width:1292px;height:1px;background:#a0a0a0;"></div><div style="left:390px;top:1089px;width:1px;height:26px;background:#a0a0a0;"></div><div style="left:390px;top:1114px;width:1292px;height:1px;background:#fff;"></div><div style="left:1681px;top:1089px;width:1px;height:26px;background:#fff;"></div><div style="left:1683px;top:1087px;width:1px;height:29px;background:#a0a0a0;"></div><div style="left:1684px;top:1087px;width:1px;height:29px;background:#fff;"></div><div style="left:1686px;top:1089px;width:29px;height:1px;background:#a0a0a0;"></div><div style="left:1686px;top:1089px;width:1px;height:26px;background:#a0a0a0;"></div><div style="left:1686px;top:1114px;width:29px;height:1px;background:#fff;"></div><div style="left:1714px;top:1089px;width:1px;height:26px;background:#fff;"></div><div style="left:1717px;top:1087px;width:1px;height:29px;background:#a0a0a0;"></div><div style="left:1718px;top:1087px;width:1px;height:29px;background:#fff;"></div><div style="left:1720px;top:1089px;width:30px;height:1px;background:#a0a0a0;"></div><div style="left:1720px;top:1089px;width:1px;height:26px;background:#a0a0a0;"></div><div style="left:1720px;top:1114px;width:30px;height:1px;background:#fff;"></div><div style="left:1749px;top:1089px;width:1px;height:26px;background:#fff;"></div><svg style="left:1693px;top:1094px" width="16" height="16" viewBox="0 0 16 16"><rect x="1" y="1" width="14" height="14" fill="#9a9a9a" rx="5.5"/><rect x="7.2" y="7" width="2" height="5.5" fill="#fff" /><rect x="7.2" y="3.5" width="2" height="2" fill="#fff" /><path d="M0.5 0.5L16 15.5" fill="none" stroke="#f01010" stroke-width="1.8" /></svg><span class="t" style="left:31.6px;top:5.84px;font-size:12px;line-height:16px;color:#000;transform:scaleX(0.9822);transform-origin:0 0;">Смета</span><span class="t" style="left:77.60000000000001px;top:5.84px;font-size:12px;line-height:16px;color:#000;transform:scaleX(0.9748);transform-origin:0 0;">Работа</span><span class="t" style="left:127.80000000000001px;top:5.84px;font-size:12px;line-height:16px;color:#000;transform:scaleX(1.0181);transform-origin:0 0;">Информация</span><span class="t" style="left:213.9px;top:5.84px;font-size:12px;line-height:16px;color:#000;transform:scaleX(1.0344);transform-origin:0 0;">Справочники</span><span class="t" style="left:301.0px;top:5.84px;font-size:12px;line-height:16px;color:#000;transform:scaleX(1.0265);transform-origin:0 0;">Настройки</span><span class="t" style="left:372.9px;top:5.84px;font-size:12px;line-height:16px;color:#000;transform:scaleX(0.9803);transform-origin:0 0;">Отдохнуть</span><span class="t" style="left:442.09999999999997px;top:5.84px;font-size:12px;line-height:16px;color:#000;transform:scaleX(1.0436);transform-origin:0 0;">Окно</span><span class="t" style="left:482.79999999999995px;top:5.84px;font-size:12px;line-height:16px;color:#000;transform:scaleX(1.0615);transform-origin:0 0;">Помощь</span><span class="t" style="left:543.4px;top:5.84px;font-size:12px;line-height:16px;color:#000;transform:scaleX(1.0251);transform-origin:0 0;">Структурные справочники</span><div style="left:32px;top:19px;width:8px;height:1px;background:#000;"></div><span class="t" style="left:384.79999999999995px;top:31.44px;font-size:12px;line-height:16px;color:#a0a0a0;transform:scaleX(1.0016);transform-origin:0 0;">Изменить тип строки...</span><span class="t" style="left:704.8px;top:31.44px;font-size:12px;line-height:16px;color:#a0a0a0;transform:scaleX(0.9999);transform-origin:0 0;">Копировать в смету</span><span class="t" style="left:13.5px;top:57.34px;font-size:12px;line-height:16px;color:#a0a0a0;transform:scaleX(1.0145);transform-origin:0 0;">Ресурсы</span><span class="t" style="left:70.0px;top:57.34px;font-size:12px;line-height:16px;color:#a0a0a0;transform:scaleX(0.9903);transform-origin:0 0;">Панель цен</span><span class="t" style="left:142.70000000000002px;top:57.34px;font-size:12px;line-height:16px;color:#a0a0a0;transform:scaleX(1.0026);transform-origin:0 0;">Лимит. затраты</span><span class="t" style="left:236.20000000000002px;top:57.34px;font-size:12px;line-height:16px;color:#a0a0a0;transform:scaleX(0.967);transform-origin:0 0;">ЭСН</span><span class="t" style="left:269.59999999999997px;top:57.34px;font-size:12px;line-height:16px;color:#a0a0a0;transform:scaleX(0.9826);transform-origin:0 0;">Состав работ</span><span class="t" style="left:351.79999999999995px;top:57.34px;font-size:12px;line-height:16px;color:#a0a0a0;transform:scaleX(0.9697);transform-origin:0 0;">Тех. часть</span><span class="t" style="left:414.9px;top:57.34px;font-size:12px;line-height:16px;color:#a0a0a0;transform:scaleX(1.0033);transform-origin:0 0;">Индексы</span><span class="t" style="left:472.79999999999995px;top:57.34px;font-size:12px;line-height:16px;color:#a0a0a0;transform:scaleX(1.0473);transform-origin:0 0;">Поправки</span><span class="t" style="left:536.8px;top:57.34px;font-size:12px;line-height:16px;color:#a0a0a0;transform:scaleX(1.0399);transform-origin:0 0;">Формулы</span><span class="t" style="left:599.4px;top:57.34px;font-size:12px;line-height:16px;color:#a0a0a0;transform:scaleX(0.9907);transform-origin:0 0;">Структура</span><span class="t" style="left:664.6px;top:57.34px;font-size:12px;line-height:16px;color:#a0a0a0;transform:scaleX(1.0015);transform-origin:0 0;">Оглавление</span><span class="t" style="left:742.3px;top:57.34px;font-size:12px;line-height:16px;color:#000;transform:scaleX(1.0247);transform-origin:0 0;">Список открытых окон</span><span class="t" style="left:4.5px;top:102.67px;font-size:12.5px;line-height:16px;color:#000;transform:scaleX(0.8778);transform-origin:0 0;">ЛС, входящие в проект</span><span class="t" style="left:56.5px;top:119.67px;font-size:12.5px;line-height:16px;color:#fff;transform:scaleX(0.885);transform-origin:0 0;">Здание спортивного комплекса</span><div class="clip" style="left:70px;top:136px;width:247px;height:16px"><span class="t" style="left:4.799999999999997px;top:-0.33px;font-size:12.5px;line-height:16px;color:#000;transform:scaleX(0.885);transform-origin:0 0;">Объекты подсобного и обслуживающего назна</span></div><span class="t" style="left:74.8px;top:151.67px;font-size:12.5px;line-height:16px;color:#000;transform:scaleX(0.885);transform-origin:0 0;">Основные объекты строительства</span><span class="t" style="left:74.8px;top:167.67px;font-size:12.5px;line-height:16px;color:#000;transform:scaleX(0.885);transform-origin:0 0;">Подготовка территории строительства</span><span class="t" style="left:93.8px;top:183.67px;font-size:12.5px;line-height:16px;color:#000;transform:scaleX(0.885);transform-origin:0 0;">Подготовительные работы</span><span class="t" style="left:4.5px;top:924.67px;font-size:12.5px;line-height:16px;color:#000;transform:scaleX(0.8922);transform-origin:0 0;">Всего элементов в проекте: 3</span><span class="t" style="left:5.0px;top:942.67px;font-size:12.5px;line-height:16px;color:#000;transform:scaleX(0.8864);transform-origin:0 0;">Осталось перенести в главы сводного расчёта: 2</span><span class="t" style="left:135.1px;top:966.67px;font-size:12.5px;line-height:16px;color:#000;transform:scaleX(0.8749);transform-origin:0 0;">Перенести сметы в ССР</span><span class="t" style="left:4.5px;top:995.67px;font-size:12.5px;line-height:16px;color:#000;transform:scaleX(0.8785);transform-origin:0 0;">Вносить элементы в сводный расчёт до</span><span class="t" style="left:26.5px;top:1015.67px;font-size:12.5px;line-height:16px;color:#000;transform:scaleX(0.9007);transform-origin:0 0;">Локальных смет</span><span class="t" style="left:860.1px;top:81.67px;font-size:12.5px;line-height:16px;color:#000;transform:scaleX(0.8446);transform-origin:0 0;">Вид ССР ЕРКР (ТСН-2001)</span><span class="t" style="left:330.0px;top:996.67px;font-size:12.5px;line-height:16px;color:#000;transform:scaleX(0.8827);transform-origin:0 0;">2000, Январь</span><span class="t" style="left:410.5px;top:996.67px;font-size:12.5px;line-height:16px;color:#000;transform:scaleX(0.8661);transform-origin:0 0;">2025, Март</span><span class="t" style="left:330.5px;top:1026.67px;font-size:12.5px;line-height:16px;color:#000;transform:scaleX(0.8071);transform-origin:0 0;">ССР</span><span class="t" style="left:371.9px;top:1024.67px;font-size:12.5px;line-height:16px;color:#000;transform:scaleX(0.8959);transform-origin:0 0;">Сводка затрат</span><span class="t" style="left:458.0px;top:1024.67px;font-size:12.5px;line-height:16px;color:#000;transform:scaleX(0.8965);transform-origin:0 0;">Предпросмотр</span><span class="t" style="left:1664.5px;top:1057.07px;font-size:12.5px;line-height:16px;color:#000;transform:scaleX(0.9181);transform-origin:0 0;">Закрыть</span><span class="t" style="left:1727.1000000000001px;top:1093.84px;font-size:12px;line-height:16px;color:#000;transform:scaleX(0.8654);transform-origin:0 0;">RU</span><div class="clip" style="left:339px;top:106px;width:34px;height:15px"><span class="t" style="left:1.8px;top:-0.33px;font-size:12.5px;line-height:16px;color:#000;transform:scaleX(0.885);transform-origin:0 0">№ пп</span></div><div class="clip" style="left:374px;top:106px;width:24px;height:15px"><span class="t" style="left:1.8px;top:-0.33px;font-size:12.5px;line-height:16px;color:#000;transform:scaleX(0.885);transform-origin:0 0">Расчёт</span></div><div class="clip" style="left:399px;top:106px;width:32px;height:15px"><span class="t" style="left:1.8px;top:-0.33px;font-size:12.5px;line-height:16px;color:#000;transform:scaleX(0.885);transform-origin:0 0">Тип</span></div><div class="clip" style="left:432px;top:106px;width:51px;height:15px"><span class="t" style="left:1.8px;top:-0.33px;font-size:12.5px;line-height:16px;color:#000;transform:scaleX(0.885);transform-origin:0 0">№ см. расчёта</span></div><div class="clip" style="left:484px;top:106px;width:75px;height:15px"><span class="t" style="left:1.8px;top:-0.33px;font-size:12.5px;line-height:16px;color:#000;transform:scaleX(0.885);transform-origin:0 0">Сокр. наимен.</span></div><div class="clip" style="left:560px;top:106px;width:316px;height:15px"><span class="t" style="left:1.8px;top:-0.33px;font-size:12.5px;line-height:16px;color:#000;transform:scaleX(0.885);transform-origin:0 0">Наименование глав, объектов, работ и затрат</span></div><div class="clip" style="left:877px;top:106px;width:40px;height:15px"><span class="t" style="left:1.8px;top:-0.33px;font-size:12.5px;line-height:16px;color:#000;transform:scaleX(0.885);transform-origin:0 0">№ Гл.</span></div><div class="clip" style="left:918px;top:106px;width:80px;height:15px"><span class="t" style="left:1.8px;top:-0.33px;font-size:12.5px;line-height:16px;color:#000;transform:scaleX(0.885);transform-origin:0 0">Строительные</span></div><div class="clip" style="left:999px;top:106px;width:80px;height:15px"><span class="t" style="left:1.8px;top:-0.33px;font-size:12.5px;line-height:16px;color:#000;transform:scaleX(0.885);transform-origin:0 0">Монтажные</span></div><div class="clip" style="left:1080px;top:106px;width:80px;height:15px"><span class="t" style="left:1.8px;top:-0.33px;font-size:12.5px;line-height:16px;color:#000;transform:scaleX(0.885);transform-origin:0 0">Оборудование</span></div><div class="clip" style="left:1161px;top:106px;width:74px;height:15px"><span class="t" style="left:1.8px;top:-0.33px;font-size:12.5px;line-height:16px;color:#000;transform:scaleX(0.885);transform-origin:0 0">Прочие</span></div><div class="clip" style="left:1236px;top:106px;width:100px;height:15px"><span class="t" style="left:1.8px;top:-0.33px;font-size:12.5px;line-height:16px;color:#000;transform:scaleX(0.885);transform-origin:0 0">Общ. стоимость</span></div><div class="clip" style="left:1337px;top:106px;width:74px;height:15px"><span class="t" style="left:1.8px;top:-0.33px;font-size:12.5px;line-height:16px;color:#000;transform:scaleX(0.885);transform-origin:0 0">Возврат</span></div><div class="clip" style="left:1412px;top:106px;width:50px;height:15px"><span class="t" style="left:1.8px;top:-0.33px;font-size:12.5px;line-height:16px;color:#000;transform:scaleX(0.885);transform-origin:0 0">Печать</span></div><div class="clip" style="left:1463px;top:106px;width:64px;height:15px"><span class="t" style="left:1.8px;top:-0.33px;font-size:12.5px;line-height:16px;color:#000;transform:scaleX(0.885);transform-origin:0 0">ПР/НПР</span></div><span class="t" style="right:1381px;top:121.67px;font-size:12.5px;line-height:16px;color:#fff;transform:scaleX(0.885);transform-origin:100% 0;">1</span><div class="clip" style="left:484px;top:122px;width:75px;height:16px"><span class="t" style="left:1.8px;top:-0.33px;font-size:12.5px;line-height:16px;color:#0000ff;transform:scaleX(0.885);transform-origin:0 0">Гл. 1</span></div><div class="clip" style="left:560px;top:122px;width:316px;height:16px"><span class="t" style="left:1.7px;top:-0.33px;font-size:12.5px;line-height:16px;color:#0000ff;transform:scaleX(0.885);transform-origin:0 0">Глава  1. Подготовка территории строительства, реконструкции, капитального ремонта.</span></div><span class="t" style="right:837px;top:121.67px;font-size:12.5px;line-height:16px;color:#0000ff;transform:scaleX(0.885);transform-origin:100% 0;">1</span><span class="t" style="right:757px;top:121.67px;font-size:12.5px;line-height:16px;color:#0000ff;transform:scaleX(0.885);transform-origin:100% 0;">0,00</span><span class="t" style="right:676px;top:121.67px;font-size:12.5px;line-height:16px;color:#0000ff;transform:scaleX(0.885);transform-origin:100% 0;">0,00</span><span class="t" style="right:595px;top:121.67px;font-size:12.5px;line-height:16px;color:#0000ff;transform:scaleX(0.885);transform-origin:100% 0;">0,00</span><span class="t" style="right:520px;top:121.67px;font-size:12.5px;line-height:16px;color:#0000ff;transform:scaleX(0.885);transform-origin:100% 0;">0,00</span><span class="t" style="right:419px;top:121.67px;font-size:12.5px;line-height:16px;color:#0000ff;transform:scaleX(0.885);transform-origin:100% 0;">0,00</span><span class="t" style="right:344px;top:121.67px;font-size:12.5px;line-height:16px;color:#0000ff;transform:scaleX(0.885);transform-origin:100% 0;">0,00</span><svg style="left:1432px;top:124px" width="10" height="12" viewBox="0 0 10 12"><path d="M2.3 5.5L3.3 5.3L6.3 10.2" fill="none" stroke="#2030e0" stroke-width="1.25"/><path d="M6.2 10.4L8 0.3" fill="none" stroke="#2030e0" stroke-width="0.7" opacity="0.75"/></svg><span class="t" style="right:1381px;top:137.67px;font-size:12.5px;line-height:16px;color:#ff0000;transform:scaleX(0.885);transform-origin:100% 0;">2</span><div class="clip" style="left:432px;top:138px;width:51px;height:16px"><span class="t" style="left:1.8px;top:-0.33px;font-size:12.5px;line-height:16px;color:#ff0000;transform:scaleX(0.84);transform-origin:0 0">ЛС 01-01</span></div><div class="clip" style="left:560px;top:138px;width:316px;height:16px"><span class="t" style="left:1.7px;top:-0.33px;font-size:12.5px;line-height:16px;color:#ff0000;transform:scaleX(0.885);transform-origin:0 0">Подготовительные работы</span></div><span class="t" style="right:757px;top:137.67px;font-size:12.5px;line-height:16px;color:#ff0000;transform:scaleX(0.885);transform-origin:100% 0;">0,00</span><span class="t" style="right:676px;top:137.67px;font-size:12.5px;line-height:16px;color:#ff0000;transform:scaleX(0.885);transform-origin:100% 0;">0,00</span><span class="t" style="right:595px;top:137.67px;font-size:12.5px;line-height:16px;color:#ff0000;transform:scaleX(0.885);transform-origin:100% 0;">0,00</span><span class="t" style="right:520px;top:137.67px;font-size:12.5px;line-height:16px;color:#ff0000;transform:scaleX(0.885);transform-origin:100% 0;">0,00</span><span class="t" style="right:419px;top:137.67px;font-size:12.5px;line-height:16px;color:#ff0000;transform:scaleX(0.885);transform-origin:100% 0;">0,00</span><span class="t" style="right:344px;top:137.67px;font-size:12.5px;line-height:16px;color:#ff0000;transform:scaleX(0.885);transform-origin:100% 0;">0,00</span><svg style="left:1432px;top:140px" width="10" height="12" viewBox="0 0 10 12"><path d="M2.3 5.5L3.3 5.3L6.3 10.2" fill="none" stroke="#303020" stroke-width="1.25"/><path d="M6.2 10.4L8 0.3" fill="none" stroke="#303020" stroke-width="0.7" opacity="0.75"/></svg><span class="t" style="right:1381px;top:153.67px;font-size:12.5px;line-height:16px;color:#000;transform:scaleX(0.885);transform-origin:100% 0;">3</span><div class="clip" style="left:484px;top:154px;width:75px;height:16px"><span class="t" style="left:1.8px;top:-0.33px;font-size:12.5px;line-height:16px;color:#000;transform:scaleX(0.885);transform-origin:0 0">1</span></div><div class="clip" style="left:560px;top:154px;width:316px;height:16px"><span class="t" style="left:1.7px;top:-0.33px;font-size:12.5px;line-height:16px;color:#000;transform:scaleX(0.885);transform-origin:0 0">Глава  1. Подготовка территории строительства.</span></div><span class="t" style="right:757px;top:153.67px;font-size:12.5px;line-height:16px;color:#000;transform:scaleX(0.885);transform-origin:100% 0;">0,00</span><span class="t" style="right:676px;top:153.67px;font-size:12.5px;line-height:16px;color:#000;transform:scaleX(0.885);transform-origin:100% 0;">0,00</span><span class="t" style="right:595px;top:153.67px;font-size:12.5px;line-height:16px;color:#000;transform:scaleX(0.885);transform-origin:100% 0;">0,00</span><span class="t" style="right:520px;top:153.67px;font-size:12.5px;line-height:16px;color:#000;transform:scaleX(0.885);transform-origin:100% 0;">0,00</span><span class="t" style="right:419px;top:153.67px;font-size:12.5px;line-height:16px;color:#000;transform:scaleX(0.885);transform-origin:100% 0;">0,00</span><span class="t" style="right:344px;top:153.67px;font-size:12.5px;line-height:16px;color:#000;transform:scaleX(0.885);transform-origin:100% 0;">0,00</span><span class="t" style="right:1381px;top:169.67px;font-size:12.5px;line-height:16px;color:#0000ff;transform:scaleX(0.885);transform-origin:100% 0;">4</span><div class="clip" style="left:484px;top:170px;width:75px;height:16px"><span class="t" style="left:1.8px;top:-0.33px;font-size:12.5px;line-height:16px;color:#0000ff;transform:scaleX(0.885);transform-origin:0 0">1.1</span></div><div class="clip" style="left:560px;top:170px;width:316px;height:16px"><span class="t" style="left:1.7px;top:-0.33px;font-size:12.5px;line-height:16px;color:#0000ff;transform:scaleX(0.885);transform-origin:0 0">Получение исходных данных и условий для подготовки проектной документации</span></div><span class="t" style="right:757px;top:169.67px;font-size:12.5px;line-height:16px;color:#0000ff;transform:scaleX(0.885);transform-origin:100% 0;">0,00</span><span class="t" style="right:676px;top:169.67px;font-size:12.5px;line-height:16px;color:#0000ff;transform:scaleX(0.885);transform-origin:100% 0;">0,00</span><span class="t" style="right:595px;top:169.67px;font-size:12.5px;line-height:16px;color:#0000ff;transform:scaleX(0.885);transform-origin:100% 0;">0,00</span><span class="t" style="right:520px;top:169.67px;font-size:12.5px;line-height:16px;color:#0000ff;transform:scaleX(0.885);transform-origin:100% 0;">0,00</span><span class="t" style="right:419px;top:169.67px;font-size:12.5px;line-height:16px;color:#0000ff;transform:scaleX(0.885);transform-origin:100% 0;">0,00</span><span class="t" style="right:344px;top:169.67px;font-size:12.5px;line-height:16px;color:#0000ff;transform:scaleX(0.885);transform-origin:100% 0;">0,00</span><span class="t" style="right:1381px;top:185.67px;font-size:12.5px;line-height:16px;color:#000;transform:scaleX(0.885);transform-origin:100% 0;">5</span><div class="clip" style="left:484px;top:186px;width:75px;height:16px"><span class="t" style="left:1.8px;top:-0.33px;font-size:12.5px;line-height:16px;color:#000;transform:scaleX(0.885);transform-origin:0 0">1.1.1</span></div><div class="clip" style="left:560px;top:186px;width:316px;height:16px"><span class="t" style="left:1.7px;top:-0.33px;font-size:12.5px;line-height:16px;color:#000;transform:scaleX(0.885);transform-origin:0 0">Затраты, связанные с получением (разработкой) исходных данных, технических условий</span></div><span class="t" style="right:757px;top:185.67px;font-size:12.5px;line-height:16px;color:#000;transform:scaleX(0.885);transform-origin:100% 0;">0,00</span><span class="t" style="right:676px;top:185.67px;font-size:12.5px;line-height:16px;color:#000;transform:scaleX(0.885);transform-origin:100% 0;">0,00</span><span class="t" style="right:595px;top:185.67px;font-size:12.5px;line-height:16px;color:#000;transform:scaleX(0.885);transform-origin:100% 0;">0,00</span><span class="t" style="right:520px;top:185.67px;font-size:12.5px;line-height:16px;color:#000;transform:scaleX(0.885);transform-origin:100% 0;">0,00</span><span class="t" style="right:419px;top:185.67px;font-size:12.5px;line-height:16px;color:#000;transform:scaleX(0.885);transform-origin:100% 0;">0,00</span><span class="t" style="right:344px;top:185.67px;font-size:12.5px;line-height:16px;color:#000;transform:scaleX(0.885);transform-origin:100% 0;">0,00</span><svg style="left:1432px;top:188px" width="10" height="12" viewBox="0 0 10 12"><path d="M2.3 5.5L3.3 5.3L6.3 10.2" fill="none" stroke="#f01040" stroke-width="1.25"/><path d="M6.2 10.4L8 0.3" fill="none" stroke="#f01040" stroke-width="0.7" opacity="0.75"/></svg><span class="t" style="right:1381px;top:201.67px;font-size:12.5px;line-height:16px;color:#000;transform:scaleX(0.885);transform-origin:100% 0;">6</span><div class="clip" style="left:484px;top:202px;width:75px;height:16px"><span class="t" style="left:1.8px;top:-0.33px;font-size:12.5px;line-height:16px;color:#000;transform:scaleX(0.885);transform-origin:0 0">1.1.2</span></div><div class="clip" style="left:560px;top:202px;width:316px;height:16px"><span class="t" style="left:1.7px;top:-0.33px;font-size:12.5px;line-height:16px;color:#000;transform:scaleX(0.885);transform-origin:0 0">Затраты, связанные с проведением геодезических работ, выполняемых</span></div><span class="t" style="right:757px;top:201.67px;font-size:12.5px;line-height:16px;color:#000;transform:scaleX(0.885);transform-origin:100% 0;">0,00</span><span class="t" style="right:676px;top:201.67px;font-size:12.5px;line-height:16px;color:#000;transform:scaleX(0.885);transform-origin:100% 0;">0,00</span><span class="t" style="right:595px;top:201.67px;font-size:12.5px;line-height:16px;color:#000;transform:scaleX(0.885);transform-origin:100% 0;">0,00</span><span class="t" style="right:520px;top:201.67px;font-size:12.5px;line-height:16px;color:#000;transform:scaleX(0.885);transform-origin:100% 0;">0,00</span><span class="t" style="right:419px;top:201.67px;font-size:12.5px;line-height:16px;color:#000;transform:scaleX(0.885);transform-origin:100% 0;">0,00</span><span class="t" style="right:344px;top:201.67px;font-size:12.5px;line-height:16px;color:#000;transform:scaleX(0.885);transform-origin:100% 0;">0,00</span><svg style="left:1432px;top:204px" width="10" height="12" viewBox="0 0 10 12"><path d="M2.3 5.5L3.3 5.3L6.3 10.2" fill="none" stroke="#f01040" stroke-width="1.25"/><path d="M6.2 10.4L8 0.3" fill="none" stroke="#f01040" stroke-width="0.7" opacity="0.75"/></svg><span class="t" style="right:1381px;top:217.67px;font-size:12.5px;line-height:16px;color:#000;transform:scaleX(0.885);transform-origin:100% 0;">7</span><div class="clip" style="left:484px;top:218px;width:75px;height:16px"><span class="t" style="left:1.8px;top:-0.33px;font-size:12.5px;line-height:16px;color:#000;transform:scaleX(0.885);transform-origin:0 0">1.1.3</span></div><div class="clip" style="left:560px;top:218px;width:316px;height:16px"><span class="t" style="left:1.7px;top:-0.33px;font-size:12.5px;line-height:16px;color:#000;transform:scaleX(0.885);transform-origin:0 0">Затраты, связанные с оформлением прав владения и пользования на землю</span></div><span class="t" style="right:757px;top:217.67px;font-size:12.5px;line-height:16px;color:#000;transform:scaleX(0.885);transform-origin:100% 0;">0,00</span><span class="t" style="right:676px;top:217.67px;font-size:12.5px;line-height:16px;color:#000;transform:scaleX(0.885);transform-origin:100% 0;">0,00</span><span class="t" style="right:595px;top:217.67px;font-size:12.5px;line-height:16px;color:#000;transform:scaleX(0.885);transform-origin:100% 0;">0,00</span><span class="t" style="right:520px;top:217.67px;font-size:12.5px;line-height:16px;color:#000;transform:scaleX(0.885);transform-origin:100% 0;">0,00</span><span class="t" style="right:419px;top:217.67px;font-size:12.5px;line-height:16px;color:#000;transform:scaleX(0.885);transform-origin:100% 0;">0,00</span><span class="t" style="right:344px;top:217.67px;font-size:12.5px;line-height:16px;color:#000;transform:scaleX(0.885);transform-origin:100% 0;">0,00</span><svg style="left:1432px;top:220px" width="10" height="12" viewBox="0 0 10 12"><path d="M2.3 5.5L3.3 5.3L6.3 10.2" fill="none" stroke="#f01040" stroke-width="1.25"/><path d="M6.2 10.4L8 0.3" fill="none" stroke="#f01040" stroke-width="0.7" opacity="0.75"/></svg><span class="t" style="right:1381px;top:233.67px;font-size:12.5px;line-height:16px;color:#000;transform:scaleX(0.885);transform-origin:100% 0;">8</span><div class="clip" style="left:484px;top:234px;width:75px;height:16px"><span class="t" style="left:1.8px;top:-0.33px;font-size:12.5px;line-height:16px;color:#000;transform:scaleX(0.885);transform-origin:0 0">1.1.4</span></div><div class="clip" style="left:560px;top:234px;width:316px;height:16px"><span class="t" style="left:1.7px;top:-0.33px;font-size:12.5px;line-height:16px;color:#000;transform:scaleX(0.885);transform-origin:0 0">Затраты, связанные с подготовкой документации по планировке территории</span></div><span class="t" style="right:757px;top:233.67px;font-size:12.5px;line-height:16px;color:#000;transform:scaleX(0.885);transform-origin:100% 0;">0,00</span><span class="t" style="right:676px;top:233.67px;font-size:12.5px;line-height:16px;color:#000;transform:scaleX(0.885);transform-origin:100% 0;">0,00</span><span class="t" style="right:595px;top:233.67px;font-size:12.5px;line-height:16px;color:#000;transform:scaleX(0.885);transform-origin:100% 0;">0,00</span><span class="t" style="right:520px;top:233.67px;font-size:12.5px;line-height:16px;color:#000;transform:scaleX(0.885);transform-origin:100% 0;">0,00</span><span class="t" style="right:419px;top:233.67px;font-size:12.5px;line-height:16px;color:#000;transform:scaleX(0.885);transform-origin:100% 0;">0,00</span><span class="t" style="right:344px;top:233.67px;font-size:12.5px;line-height:16px;color:#000;transform:scaleX(0.885);transform-origin:100% 0;">0,00</span><svg style="left:1432px;top:236px" width="10" height="12" viewBox="0 0 10 12"><path d="M2.3 5.5L3.3 5.3L6.3 10.2" fill="none" stroke="#f01040" stroke-width="1.25"/><path d="M6.2 10.4L8 0.3" fill="none" stroke="#f01040" stroke-width="0.7" opacity="0.75"/></svg><span class="t" style="right:1381px;top:249.67px;font-size:12.5px;line-height:16px;color:#0000ff;transform:scaleX(0.885);transform-origin:100% 0;">9</span><div class="clip" style="left:484px;top:250px;width:75px;height:16px"><span class="t" style="left:1.8px;top:-0.33px;font-size:12.5px;line-height:16px;color:#0000ff;transform:scaleX(0.885);transform-origin:0 0">1.2</span></div><div class="clip" style="left:560px;top:250px;width:316px;height:16px"><span class="t" style="left:1.7px;top:-0.33px;font-size:12.5px;line-height:16px;color:#0000ff;transform:scaleX(0.885);transform-origin:0 0">Затраты по освоению территории строительства</span></div><span class="t" style="right:757px;top:249.67px;font-size:12.5px;line-height:16px;color:#0000ff;transform:scaleX(0.885);transform-origin:100% 0;">0,00</span><span class="t" style="right:676px;top:249.67px;font-size:12.5px;line-height:16px;color:#0000ff;transform:scaleX(0.885);transform-origin:100% 0;">0,00</span><span class="t" style="right:595px;top:249.67px;font-size:12.5px;line-height:16px;color:#0000ff;transform:scaleX(0.885);transform-origin:100% 0;">0,00</span><span class="t" style="right:520px;top:249.67px;font-size:12.5px;line-height:16px;color:#0000ff;transform:scaleX(0.885);transform-origin:100% 0;">0,00</span><span class="t" style="right:419px;top:249.67px;font-size:12.5px;line-height:16px;color:#0000ff;transform:scaleX(0.885);transform-origin:100% 0;">0,00</span><span class="t" style="right:344px;top:249.67px;font-size:12.5px;line-height:16px;color:#0000ff;transform:scaleX(0.885);transform-origin:100% 0;">0,00</span><span class="t" style="right:1381px;top:265.67px;font-size:12.5px;line-height:16px;color:#000;transform:scaleX(0.885);transform-origin:100% 0;">10</span><div class="clip" style="left:484px;top:266px;width:75px;height:16px"><span class="t" style="left:1.8px;top:-0.33px;font-size:12.5px;line-height:16px;color:#000;transform:scaleX(0.885);transform-origin:0 0">1.2.1</span></div><div class="clip" style="left:560px;top:266px;width:316px;height:16px"><span class="t" style="left:1.7px;top:-0.33px;font-size:12.5px;line-height:16px;color:#000;transform:scaleX(0.885);transform-origin:0 0">Затраты, связанные с возмещением убытков (компенсацией) правообладателям</span></div><span class="t" style="right:757px;top:265.67px;font-size:12.5px;line-height:16px;color:#000;transform:scaleX(0.885);transform-origin:100% 0;">0,00</span><span class="t" style="right:676px;top:265.67px;font-size:12.5px;line-height:16px;color:#000;transform:scaleX(0.885);transform-origin:100% 0;">0,00</span><span class="t" style="right:595px;top:265.67px;font-size:12.5px;line-height:16px;color:#000;transform:scaleX(0.885);transform-origin:100% 0;">0,00</span><span class="t" style="right:520px;top:265.67px;font-size:12.5px;line-height:16px;color:#000;transform:scaleX(0.885);transform-origin:100% 0;">0,00</span><span class="t" style="right:419px;top:265.67px;font-size:12.5px;line-height:16px;color:#000;transform:scaleX(0.885);transform-origin:100% 0;">0,00</span><span class="t" style="right:344px;top:265.67px;font-size:12.5px;line-height:16px;color:#000;transform:scaleX(0.885);transform-origin:100% 0;">0,00</span><svg style="left:1432px;top:268px" width="10" height="12" viewBox="0 0 10 12"><path d="M2.3 5.5L3.3 5.3L6.3 10.2" fill="none" stroke="#f01040" stroke-width="1.25"/><path d="M6.2 10.4L8 0.3" fill="none" stroke="#f01040" stroke-width="0.7" opacity="0.75"/></svg><span class="t" style="right:1381px;top:281.67px;font-size:12.5px;line-height:16px;color:#000;transform:scaleX(0.885);transform-origin:100% 0;">11</span><div class="clip" style="left:484px;top:282px;width:75px;height:16px"><span class="t" style="left:1.8px;top:-0.33px;font-size:12.5px;line-height:16px;color:#000;transform:scaleX(0.885);transform-origin:0 0">1.2.2</span></div><div class="clip" style="left:560px;top:282px;width:316px;height:16px"><span class="t" style="left:1.7px;top:-0.33px;font-size:12.5px;line-height:16px;color:#000;transform:scaleX(0.885);transform-origin:0 0">Затраты по разминированию территории строительства в предусмотренных</span></div><span class="t" style="right:757px;top:281.67px;font-size:12.5px;line-height:16px;color:#000;transform:scaleX(0.885);transform-origin:100% 0;">0,00</span><span class="t" style="right:676px;top:281.67px;font-size:12.5px;line-height:16px;color:#000;transform:scaleX(0.885);transform-origin:100% 0;">0,00</span><span class="t" style="right:595px;top:281.67px;font-size:12.5px;line-height:16px;color:#000;transform:scaleX(0.885);transform-origin:100% 0;">0,00</span><span class="t" style="right:520px;top:281.67px;font-size:12.5px;line-height:16px;color:#000;transform:scaleX(0.885);transform-origin:100% 0;">0,00</span><span class="t" style="right:419px;top:281.67px;font-size:12.5px;line-height:16px;color:#000;transform:scaleX(0.885);transform-origin:100% 0;">0,00</span><span class="t" style="right:344px;top:281.67px;font-size:12.5px;line-height:16px;color:#000;transform:scaleX(0.885);transform-origin:100% 0;">0,00</span><svg style="left:1432px;top:284px" width="10" height="12" viewBox="0 0 10 12"><path d="M2.3 5.5L3.3 5.3L6.3 10.2" fill="none" stroke="#f01040" stroke-width="1.25"/><path d="M6.2 10.4L8 0.3" fill="none" stroke="#f01040" stroke-width="0.7" opacity="0.75"/></svg><span class="t" style="right:1381px;top:297.67px;font-size:12.5px;line-height:16px;color:#000;transform:scaleX(0.885);transform-origin:100% 0;">12</span><div class="clip" style="left:484px;top:298px;width:75px;height:16px"><span class="t" style="left:1.8px;top:-0.33px;font-size:12.5px;line-height:16px;color:#000;transform:scaleX(0.885);transform-origin:0 0">1.2.3</span></div><div class="clip" style="left:560px;top:298px;width:316px;height:16px"><span class="t" style="left:1.7px;top:-0.33px;font-size:12.5px;line-height:16px;color:#000;transform:scaleX(0.885);transform-origin:0 0">Затраты, связанные с организацией мероприятий в случае обнаружения</span></div><span class="t" style="right:757px;top:297.67px;font-size:12.5px;line-height:16px;color:#000;transform:scaleX(0.885);transform-origin:100% 0;">0,00</span><span class="t" style="right:676px;top:297.67px;font-size:12.5px;line-height:16px;color:#000;transform:scaleX(0.885);transform-origin:100% 0;">0,00</span><span class="t" style="right:595px;top:297.67px;font-size:12.5px;line-height:16px;color:#000;transform:scaleX(0.885);transform-origin:100% 0;">0,00</span><span class="t" style="right:520px;top:297.67px;font-size:12.5px;line-height:16px;color:#000;transform:scaleX(0.885);transform-origin:100% 0;">0,00</span><span class="t" style="right:419px;top:297.67px;font-size:12.5px;line-height:16px;color:#000;transform:scaleX(0.885);transform-origin:100% 0;">0,00</span><span class="t" style="right:344px;top:297.67px;font-size:12.5px;line-height:16px;color:#000;transform:scaleX(0.885);transform-origin:100% 0;">0,00</span><svg style="left:1432px;top:300px" width="10" height="12" viewBox="0 0 10 12"><path d="M2.3 5.5L3.3 5.3L6.3 10.2" fill="none" stroke="#f01040" stroke-width="1.25"/><path d="M6.2 10.4L8 0.3" fill="none" stroke="#f01040" stroke-width="0.7" opacity="0.75"/></svg><span class="t" style="right:1381px;top:313.67px;font-size:12.5px;line-height:16px;color:#000;transform:scaleX(0.885);transform-origin:100% 0;">13</span><div class="clip" style="left:484px;top:314px;width:75px;height:16px"><span class="t" style="left:1.8px;top:-0.33px;font-size:12.5px;line-height:16px;color:#000;transform:scaleX(0.885);transform-origin:0 0">1.2.4</span></div><div class="clip" style="left:560px;top:314px;width:316px;height:16px"><span class="t" style="left:1.7px;top:-0.33px;font-size:12.5px;line-height:16px;color:#000;transform:scaleX(0.885);transform-origin:0 0">Затраты на проведение на территории строительства природоохранных</span></div><span class="t" style="right:757px;top:313.67px;font-size:12.5px;line-height:16px;color:#000;transform:scaleX(0.885);transform-origin:100% 0;">0,00</span><span class="t" style="right:676px;top:313.67px;font-size:12.5px;line-height:16px;color:#000;transform:scaleX(0.885);transform-origin:100% 0;">0,00</span><span class="t" style="right:595px;top:313.67px;font-size:12.5px;line-height:16px;color:#000;transform:scaleX(0.885);transform-origin:100% 0;">0,00</span><span class="t" style="right:520px;top:313.67px;font-size:12.5px;line-height:16px;color:#000;transform:scaleX(0.885);transform-origin:100% 0;">0,00</span><span class="t" style="right:419px;top:313.67px;font-size:12.5px;line-height:16px;color:#000;transform:scaleX(0.885);transform-origin:100% 0;">0,00</span><span class="t" style="right:344px;top:313.67px;font-size:12.5px;line-height:16px;color:#000;transform:scaleX(0.885);transform-origin:100% 0;">0,00</span><svg style="left:1432px;top:316px" width="10" height="12" viewBox="0 0 10 12"><path d="M2.3 5.5L3.3 5.3L6.3 10.2" fill="none" stroke="#f01040" stroke-width="1.25"/><path d="M6.2 10.4L8 0.3" fill="none" stroke="#f01040" stroke-width="0.7" opacity="0.75"/></svg><span class="t" style="right:1381px;top:329.67px;font-size:12.5px;line-height:16px;color:#000;transform:scaleX(0.885);transform-origin:100% 0;">14</span><div class="clip" style="left:484px;top:330px;width:75px;height:16px"><span class="t" style="left:1.8px;top:-0.33px;font-size:12.5px;line-height:16px;color:#000;transform:scaleX(0.885);transform-origin:0 0">1.2.5</span></div><div class="clip" style="left:560px;top:330px;width:316px;height:16px"><span class="t" style="left:1.7px;top:-0.33px;font-size:12.5px;line-height:16px;color:#000;transform:scaleX(0.885);transform-origin:0 0">Затраты по инженерной защите территории строительства от опасных</span></div><span class="t" style="right:757px;top:329.67px;font-size:12.5px;line-height:16px;color:#000;transform:scaleX(0.885);transform-origin:100% 0;">0,00</span><span class="t" style="right:676px;top:329.67px;font-size:12.5px;line-height:16px;color:#000;transform:scaleX(0.885);transform-origin:100% 0;">0,00</span><span class="t" style="right:595px;top:329.67px;font-size:12.5px;line-height:16px;color:#000;transform:scaleX(0.885);transform-origin:100% 0;">0,00</span><span class="t" style="right:520px;top:329.67px;font-size:12.5px;line-height:16px;color:#000;transform:scaleX(0.885);transform-origin:100% 0;">0,00</span><span class="t" style="right:419px;top:329.67px;font-size:12.5px;line-height:16px;color:#000;transform:scaleX(0.885);transform-origin:100% 0;">0,00</span><span class="t" style="right:344px;top:329.67px;font-size:12.5px;line-height:16px;color:#000;transform:scaleX(0.885);transform-origin:100% 0;">0,00</span><svg style="left:1432px;top:332px" width="10" height="12" viewBox="0 0 10 12"><path d="M2.3 5.5L3.3 5.3L6.3 10.2" fill="none" stroke="#f01040" stroke-width="1.25"/><path d="M6.2 10.4L8 0.3" fill="none" stroke="#f01040" stroke-width="0.7" opacity="0.75"/></svg><span class="t" style="right:1381px;top:345.67px;font-size:12.5px;line-height:16px;color:#000;transform:scaleX(0.885);transform-origin:100% 0;">15</span><div class="clip" style="left:484px;top:346px;width:75px;height:16px"><span class="t" style="left:1.8px;top:-0.33px;font-size:12.5px;line-height:16px;color:#000;transform:scaleX(0.885);transform-origin:0 0">1.2.6</span></div><div class="clip" style="left:560px;top:346px;width:316px;height:16px"><span class="t" style="left:1.7px;top:-0.33px;font-size:12.5px;line-height:16px;color:#000;transform:scaleX(0.885);transform-origin:0 0">Затраты, связанные с изменением схемы движения транспорта</span></div><span class="t" style="right:757px;top:345.67px;font-size:12.5px;line-height:16px;color:#000;transform:scaleX(0.885);transform-origin:100% 0;">0,00</span><span class="t" style="right:676px;top:345.67px;font-size:12.5px;line-height:16px;color:#000;transform:scaleX(0.885);transform-origin:100% 0;">0,00</span><span class="t" style="right:595px;top:345.67px;font-size:12.5px;line-height:16px;color:#000;transform:scaleX(0.885);transform-origin:100% 0;">0,00</span><span class="t" style="right:520px;top:345.67px;font-size:12.5px;line-height:16px;color:#000;transform:scaleX(0.885);transform-origin:100% 0;">0,00</span><span class="t" style="right:419px;top:345.67px;font-size:12.5px;line-height:16px;color:#000;transform:scaleX(0.885);transform-origin:100% 0;">0,00</span><span class="t" style="right:344px;top:345.67px;font-size:12.5px;line-height:16px;color:#000;transform:scaleX(0.885);transform-origin:100% 0;">0,00</span><svg style="left:1432px;top:348px" width="10" height="12" viewBox="0 0 10 12"><path d="M2.3 5.5L3.3 5.3L6.3 10.2" fill="none" stroke="#f01040" stroke-width="1.25"/><path d="M6.2 10.4L8 0.3" fill="none" stroke="#f01040" stroke-width="0.7" opacity="0.75"/></svg><span class="t" style="right:1381px;top:361.67px;font-size:12.5px;line-height:16px;color:#000;transform:scaleX(0.885);transform-origin:100% 0;">16</span><div class="clip" style="left:484px;top:362px;width:75px;height:16px"><span class="t" style="left:1.8px;top:-0.33px;font-size:12.5px;line-height:16px;color:#000;transform:scaleX(0.885);transform-origin:0 0">1.2.7</span></div><div class="clip" style="left:560px;top:362px;width:316px;height:16px"><span class="t" style="left:1.7px;top:-0.33px;font-size:12.5px;line-height:16px;color:#000;transform:scaleX(0.885);transform-origin:0 0">Приведение земельных участков, предоставленных во временное</span></div><span class="t" style="right:757px;top:361.67px;font-size:12.5px;line-height:16px;color:#000;transform:scaleX(0.885);transform-origin:100% 0;">0,00</span><span class="t" style="right:676px;top:361.67px;font-size:12.5px;line-height:16px;color:#000;transform:scaleX(0.885);transform-origin:100% 0;">0,00</span><span class="t" style="right:595px;top:361.67px;font-size:12.5px;line-height:16px;color:#000;transform:scaleX(0.885);transform-origin:100% 0;">0,00</span><span class="t" style="right:520px;top:361.67px;font-size:12.5px;line-height:16px;color:#000;transform:scaleX(0.885);transform-origin:100% 0;">0,00</span><span class="t" style="right:419px;top:361.67px;font-size:12.5px;line-height:16px;color:#000;transform:scaleX(0.885);transform-origin:100% 0;">0,00</span><span class="t" style="right:344px;top:361.67px;font-size:12.5px;line-height:16px;color:#000;transform:scaleX(0.885);transform-origin:100% 0;">0,00</span><svg style="left:1432px;top:364px" width="10" height="12" viewBox="0 0 10 12"><path d="M2.3 5.5L3.3 5.3L6.3 10.2" fill="none" stroke="#f01040" stroke-width="1.25"/><path d="M6.2 10.4L8 0.3" fill="none" stroke="#f01040" stroke-width="0.7" opacity="0.75"/></svg><span class="t" style="right:1381px;top:377.67px;font-size:12.5px;line-height:16px;color:#000;transform:scaleX(0.885);transform-origin:100% 0;">17</span><div class="clip" style="left:484px;top:378px;width:75px;height:16px"><span class="t" style="left:1.8px;top:-0.33px;font-size:12.5px;line-height:16px;color:#000;transform:scaleX(0.885);transform-origin:0 0">1.2.8</span></div><div class="clip" style="left:560px;top:378px;width:316px;height:16px"><span class="t" style="left:1.7px;top:-0.33px;font-size:12.5px;line-height:16px;color:#000;transform:scaleX(0.885);transform-origin:0 0">Затраты на подготовку и экспертизу проекта освоения лесов</span></div><span class="t" style="right:757px;top:377.67px;font-size:12.5px;line-height:16px;color:#000;transform:scaleX(0.885);transform-origin:100% 0;">0,00</span><span class="t" style="right:676px;top:377.67px;font-size:12.5px;line-height:16px;color:#000;transform:scaleX(0.885);transform-origin:100% 0;">0,00</span><span class="t" style="right:595px;top:377.67px;font-size:12.5px;line-height:16px;color:#000;transform:scaleX(0.885);transform-origin:100% 0;">0,00</span><span class="t" style="right:520px;top:377.67px;font-size:12.5px;line-height:16px;color:#000;transform:scaleX(0.885);transform-origin:100% 0;">0,00</span><span class="t" style="right:419px;top:377.67px;font-size:12.5px;line-height:16px;color:#000;transform:scaleX(0.885);transform-origin:100% 0;">0,00</span><span class="t" style="right:344px;top:377.67px;font-size:12.5px;line-height:16px;color:#000;transform:scaleX(0.885);transform-origin:100% 0;">0,00</span><svg style="left:1432px;top:380px" width="10" height="12" viewBox="0 0 10 12"><path d="M2.3 5.5L3.3 5.3L6.3 10.2" fill="none" stroke="#f01040" stroke-width="1.25"/><path d="M6.2 10.4L8 0.3" fill="none" stroke="#f01040" stroke-width="0.7" opacity="0.75"/></svg><span class="t" style="right:1381px;top:393.67px;font-size:12.5px;line-height:16px;color:#0000ff;transform:scaleX(0.885);transform-origin:100% 0;">18</span><div class="clip" style="left:484px;top:394px;width:75px;height:16px"><span class="t" style="left:1.8px;top:-0.33px;font-size:12.5px;line-height:16px;color:#0000ff;transform:scaleX(0.885);transform-origin:0 0">Гл. 2</span></div><div class="clip" style="left:560px;top:394px;width:316px;height:16px"><span class="t" style="left:1.7px;top:-0.33px;font-size:12.5px;line-height:16px;color:#0000ff;transform:scaleX(0.885);transform-origin:0 0">Глава  2. Основные объекты строительства, реконструкции, капитального ремонта.</span></div><span class="t" style="right:837px;top:393.67px;font-size:12.5px;line-height:16px;color:#0000ff;transform:scaleX(0.885);transform-origin:100% 0;">2</span><span class="t" style="right:757px;top:393.67px;font-size:12.5px;line-height:16px;color:#0000ff;transform:scaleX(0.885);transform-origin:100% 0;">0,00</span><span class="t" style="right:676px;top:393.67px;font-size:12.5px;line-height:16px;color:#0000ff;transform:scaleX(0.885);transform-origin:100% 0;">0,00</span><span class="t" style="right:595px;top:393.67px;font-size:12.5px;line-height:16px;color:#0000ff;transform:scaleX(0.885);transform-origin:100% 0;">0,00</span><span class="t" style="right:520px;top:393.67px;font-size:12.5px;line-height:16px;color:#0000ff;transform:scaleX(0.885);transform-origin:100% 0;">0,00</span><span class="t" style="right:419px;top:393.67px;font-size:12.5px;line-height:16px;color:#0000ff;transform:scaleX(0.885);transform-origin:100% 0;">0,00</span><span class="t" style="right:344px;top:393.67px;font-size:12.5px;line-height:16px;color:#0000ff;transform:scaleX(0.885);transform-origin:100% 0;">0,00</span><svg style="left:1432px;top:396px" width="10" height="12" viewBox="0 0 10 12"><path d="M2.3 5.5L3.3 5.3L6.3 10.2" fill="none" stroke="#2030e0" stroke-width="1.25"/><path d="M6.2 10.4L8 0.3" fill="none" stroke="#2030e0" stroke-width="0.7" opacity="0.75"/></svg><span class="t" style="right:1381px;top:409.67px;font-size:12.5px;line-height:16px;color:#0000ff;transform:scaleX(0.885);transform-origin:100% 0;">19</span><div class="clip" style="left:484px;top:410px;width:75px;height:16px"><span class="t" style="left:1.8px;top:-0.33px;font-size:12.5px;line-height:16px;color:#0000ff;transform:scaleX(0.885);transform-origin:0 0">Гл. 3</span></div><div class="clip" style="left:560px;top:410px;width:316px;height:16px"><span class="t" style="left:1.7px;top:-0.33px;font-size:12.5px;line-height:16px;color:#0000ff;transform:scaleX(0.885);transform-origin:0 0">Глава  3. Объекты подсобного и обслуживающего назначения.</span></div><span class="t" style="right:837px;top:409.67px;font-size:12.5px;line-height:16px;color:#0000ff;transform:scaleX(0.885);transform-origin:100% 0;">3</span><span class="t" style="right:757px;top:409.67px;font-size:12.5px;line-height:16px;color:#0000ff;transform:scaleX(0.885);transform-origin:100% 0;">0,00</span><span class="t" style="right:676px;top:409.67px;font-size:12.5px;line-height:16px;color:#0000ff;transform:scaleX(0.885);transform-origin:100% 0;">0,00</span><span class="t" style="right:595px;top:409.67px;font-size:12.5px;line-height:16px;color:#0000ff;transform:scaleX(0.885);transform-origin:100% 0;">0,00</span><span class="t" style="right:520px;top:409.67px;font-size:12.5px;line-height:16px;color:#0000ff;transform:scaleX(0.885);transform-origin:100% 0;">0,00</span><span class="t" style="right:419px;top:409.67px;font-size:12.5px;line-height:16px;color:#0000ff;transform:scaleX(0.885);transform-origin:100% 0;">0,00</span><span class="t" style="right:344px;top:409.67px;font-size:12.5px;line-height:16px;color:#0000ff;transform:scaleX(0.885);transform-origin:100% 0;">0,00</span><svg style="left:1432px;top:412px" width="10" height="12" viewBox="0 0 10 12"><path d="M2.3 5.5L3.3 5.3L6.3 10.2" fill="none" stroke="#2030e0" stroke-width="1.25"/><path d="M6.2 10.4L8 0.3" fill="none" stroke="#2030e0" stroke-width="0.7" opacity="0.75"/></svg><span class="t" style="right:1381px;top:425.67px;font-size:12.5px;line-height:16px;color:#0000ff;transform:scaleX(0.885);transform-origin:100% 0;">20</span><div class="clip" style="left:484px;top:426px;width:75px;height:16px"><span class="t" style="left:1.8px;top:-0.33px;font-size:12.5px;line-height:16px;color:#0000ff;transform:scaleX(0.885);transform-origin:0 0">Гл. 4</span></div><div class="clip" style="left:560px;top:426px;width:316px;height:16px"><span class="t" style="left:1.7px;top:-0.33px;font-size:12.5px;line-height:16px;color:#0000ff;transform:scaleX(0.885);transform-origin:0 0">Глава  4. Объекты энергетического хозяйства.</span></div><span class="t" style="right:837px;top:425.67px;font-size:12.5px;line-height:16px;color:#0000ff;transform:scaleX(0.885);transform-origin:100% 0;">4</span><span class="t" style="right:757px;top:425.67px;font-size:12.5px;line-height:16px;color:#0000ff;transform:scaleX(0.885);transform-origin:100% 0;">0,00</span><span class="t" style="right:676px;top:425.67px;font-size:12.5px;line-height:16px;color:#0000ff;transform:scaleX(0.885);transform-origin:100% 0;">0,00</span><span class="t" style="right:595px;top:425.67px;font-size:12.5px;line-height:16px;color:#0000ff;transform:scaleX(0.885);transform-origin:100% 0;">0,00</span><span class="t" style="right:520px;top:425.67px;font-size:12.5px;line-height:16px;color:#0000ff;transform:scaleX(0.885);transform-origin:100% 0;">0,00</span><span class="t" style="right:419px;top:425.67px;font-size:12.5px;line-height:16px;color:#0000ff;transform:scaleX(0.885);transform-origin:100% 0;">0,00</span><span class="t" style="right:344px;top:425.67px;font-size:12.5px;line-height:16px;color:#0000ff;transform:scaleX(0.885);transform-origin:100% 0;">0,00</span><svg style="left:1432px;top:428px" width="10" height="12" viewBox="0 0 10 12"><path d="M2.3 5.5L3.3 5.3L6.3 10.2" fill="none" stroke="#2030e0" stroke-width="1.25"/><path d="M6.2 10.4L8 0.3" fill="none" stroke="#2030e0" stroke-width="0.7" opacity="0.75"/></svg><span class="t" style="right:1381px;top:441.67px;font-size:12.5px;line-height:16px;color:#0000ff;transform:scaleX(0.885);transform-origin:100% 0;">21</span><div class="clip" style="left:484px;top:442px;width:75px;height:16px"><span class="t" style="left:1.8px;top:-0.33px;font-size:12.5px;line-height:16px;color:#0000ff;transform:scaleX(0.885);transform-origin:0 0">Гл. 5</span></div><div class="clip" style="left:560px;top:442px;width:316px;height:16px"><span class="t" style="left:1.7px;top:-0.33px;font-size:12.5px;line-height:16px;color:#0000ff;transform:scaleX(0.885);transform-origin:0 0">Глава  5. Объекты транспортного хозяйства и связи.</span></div><span class="t" style="right:837px;top:441.67px;font-size:12.5px;line-height:16px;color:#0000ff;transform:scaleX(0.885);transform-origin:100% 0;">5</span><span class="t" style="right:757px;top:441.67px;font-size:12.5px;line-height:16px;color:#0000ff;transform:scaleX(0.885);transform-origin:100% 0;">0,00</span><span class="t" style="right:676px;top:441.67px;font-size:12.5px;line-height:16px;color:#0000ff;transform:scaleX(0.885);transform-origin:100% 0;">0,00</span><span class="t" style="right:595px;top:441.67px;font-size:12.5px;line-height:16px;color:#0000ff;transform:scaleX(0.885);transform-origin:100% 0;">0,00</span><span class="t" style="right:520px;top:441.67px;font-size:12.5px;line-height:16px;color:#0000ff;transform:scaleX(0.885);transform-origin:100% 0;">0,00</span><span class="t" style="right:419px;top:441.67px;font-size:12.5px;line-height:16px;color:#0000ff;transform:scaleX(0.885);transform-origin:100% 0;">0,00</span><span class="t" style="right:344px;top:441.67px;font-size:12.5px;line-height:16px;color:#0000ff;transform:scaleX(0.885);transform-origin:100% 0;">0,00</span><svg style="left:1432px;top:444px" width="10" height="12" viewBox="0 0 10 12"><path d="M2.3 5.5L3.3 5.3L6.3 10.2" fill="none" stroke="#2030e0" stroke-width="1.25"/><path d="M6.2 10.4L8 0.3" fill="none" stroke="#2030e0" stroke-width="0.7" opacity="0.75"/></svg><span class="t" style="right:1381px;top:457.67px;font-size:12.5px;line-height:16px;color:#0000ff;transform:scaleX(0.885);transform-origin:100% 0;">22</span><div class="clip" style="left:484px;top:458px;width:75px;height:16px"><span class="t" style="left:1.8px;top:-0.33px;font-size:12.5px;line-height:16px;color:#0000ff;transform:scaleX(0.885);transform-origin:0 0">Гл. 6</span></div><div class="clip" style="left:560px;top:458px;width:316px;height:16px"><span class="t" style="left:1.7px;top:-0.33px;font-size:12.5px;line-height:16px;color:#0000ff;transform:scaleX(0.885);transform-origin:0 0">Глава  6. Наружные сети и сооружения водоснабжения, водоотведения,</span></div><span class="t" style="right:837px;top:457.67px;font-size:12.5px;line-height:16px;color:#0000ff;transform:scaleX(0.885);transform-origin:100% 0;">6</span><span class="t" style="right:757px;top:457.67px;font-size:12.5px;line-height:16px;color:#0000ff;transform:scaleX(0.885);transform-origin:100% 0;">0,00</span><span class="t" style="right:676px;top:457.67px;font-size:12.5px;line-height:16px;color:#0000ff;transform:scaleX(0.885);transform-origin:100% 0;">0,00</span><span class="t" style="right:595px;top:457.67px;font-size:12.5px;line-height:16px;color:#0000ff;transform:scaleX(0.885);transform-origin:100% 0;">0,00</span><span class="t" style="right:520px;top:457.67px;font-size:12.5px;line-height:16px;color:#0000ff;transform:scaleX(0.885);transform-origin:100% 0;">0,00</span><span class="t" style="right:419px;top:457.67px;font-size:12.5px;line-height:16px;color:#0000ff;transform:scaleX(0.885);transform-origin:100% 0;">0,00</span><span class="t" style="right:344px;top:457.67px;font-size:12.5px;line-height:16px;color:#0000ff;transform:scaleX(0.885);transform-origin:100% 0;">0,00</span><svg style="left:1432px;top:460px" width="10" height="12" viewBox="0 0 10 12"><path d="M2.3 5.5L3.3 5.3L6.3 10.2" fill="none" stroke="#2030e0" stroke-width="1.25"/><path d="M6.2 10.4L8 0.3" fill="none" stroke="#2030e0" stroke-width="0.7" opacity="0.75"/></svg><span class="t" style="right:1381px;top:473.67px;font-size:12.5px;line-height:16px;color:#0000ff;transform:scaleX(0.885);transform-origin:100% 0;">23</span><div class="clip" style="left:484px;top:474px;width:75px;height:16px"><span class="t" style="left:1.8px;top:-0.33px;font-size:12.5px;line-height:16px;color:#0000ff;transform:scaleX(0.885);transform-origin:0 0">Гл. 7</span></div><div class="clip" style="left:560px;top:474px;width:316px;height:16px"><span class="t" style="left:1.7px;top:-0.33px;font-size:12.5px;line-height:16px;color:#0000ff;transform:scaleX(0.885);transform-origin:0 0">Глава  7. Благоустройство и озеленение территории.</span></div><span class="t" style="right:837px;top:473.67px;font-size:12.5px;line-height:16px;color:#0000ff;transform:scaleX(0.885);transform-origin:100% 0;">7</span><span class="t" style="right:757px;top:473.67px;font-size:12.5px;line-height:16px;color:#0000ff;transform:scaleX(0.885);transform-origin:100% 0;">0,00</span><span class="t" style="right:676px;top:473.67px;font-size:12.5px;line-height:16px;color:#0000ff;transform:scaleX(0.885);transform-origin:100% 0;">0,00</span><span class="t" style="right:595px;top:473.67px;font-size:12.5px;line-height:16px;color:#0000ff;transform:scaleX(0.885);transform-origin:100% 0;">0,00</span><span class="t" style="right:520px;top:473.67px;font-size:12.5px;line-height:16px;color:#0000ff;transform:scaleX(0.885);transform-origin:100% 0;">0,00</span><span class="t" style="right:419px;top:473.67px;font-size:12.5px;line-height:16px;color:#0000ff;transform:scaleX(0.885);transform-origin:100% 0;">0,00</span><span class="t" style="right:344px;top:473.67px;font-size:12.5px;line-height:16px;color:#0000ff;transform:scaleX(0.885);transform-origin:100% 0;">0,00</span><svg style="left:1432px;top:476px" width="10" height="12" viewBox="0 0 10 12"><path d="M2.3 5.5L3.3 5.3L6.3 10.2" fill="none" stroke="#2030e0" stroke-width="1.25"/><path d="M6.2 10.4L8 0.3" fill="none" stroke="#2030e0" stroke-width="0.7" opacity="0.75"/></svg><span class="t" style="right:1381px;top:489.67px;font-size:12.5px;line-height:16px;color:#0000ff;transform:scaleX(0.885);transform-origin:100% 0;">24</span><div class="clip" style="left:484px;top:490px;width:75px;height:16px"><span class="t" style="left:1.8px;top:-0.33px;font-size:12.5px;line-height:16px;color:#0000ff;transform:scaleX(0.885);transform-origin:0 0">Ит 1-7</span></div><div class="clip" style="left:560px;top:490px;width:316px;height:16px"><span class="t" style="left:1.7px;top:-0.33px;font-size:12.5px;line-height:16px;color:#0000ff;transform:scaleX(0.885);transform-origin:0 0">Итого по главам 1 - 7</span></div><span class="t" style="right:757px;top:489.67px;font-size:12.5px;line-height:16px;color:#0000ff;transform:scaleX(0.885);transform-origin:100% 0;">0,00</span><span class="t" style="right:676px;top:489.67px;font-size:12.5px;line-height:16px;color:#0000ff;transform:scaleX(0.885);transform-origin:100% 0;">0,00</span><span class="t" style="right:595px;top:489.67px;font-size:12.5px;line-height:16px;color:#0000ff;transform:scaleX(0.885);transform-origin:100% 0;">0,00</span><span class="t" style="right:520px;top:489.67px;font-size:12.5px;line-height:16px;color:#0000ff;transform:scaleX(0.885);transform-origin:100% 0;">0,00</span><span class="t" style="right:419px;top:489.67px;font-size:12.5px;line-height:16px;color:#0000ff;transform:scaleX(0.885);transform-origin:100% 0;">0,00</span><span class="t" style="right:344px;top:489.67px;font-size:12.5px;line-height:16px;color:#0000ff;transform:scaleX(0.885);transform-origin:100% 0;">0,00</span><svg style="left:1432px;top:492px" width="10" height="12" viewBox="0 0 10 12"><path d="M2.3 5.5L3.3 5.3L6.3 10.2" fill="none" stroke="#2030e0" stroke-width="1.25"/><path d="M6.2 10.4L8 0.3" fill="none" stroke="#2030e0" stroke-width="0.7" opacity="0.75"/></svg><span class="t" style="right:1381px;top:505.67px;font-size:12.5px;line-height:16px;color:#000;transform:scaleX(0.885);transform-origin:100% 0;">25</span><div class="clip" style="left:484px;top:506px;width:75px;height:16px"><span class="t" style="left:1.8px;top:-0.33px;font-size:12.5px;line-height:16px;color:#000;transform:scaleX(0.885);transform-origin:0 0">1-7</span></div><div class="clip" style="left:560px;top:506px;width:316px;height:16px"><span class="t" style="left:1.7px;top:-0.33px;font-size:12.5px;line-height:16px;color:#000;transform:scaleX(0.885);transform-origin:0 0">Итого по главам 1 - 7</span></div><span class="t" style="right:757px;top:505.67px;font-size:12.5px;line-height:16px;color:#000;transform:scaleX(0.885);transform-origin:100% 0;">0,00</span><span class="t" style="right:676px;top:505.67px;font-size:12.5px;line-height:16px;color:#000;transform:scaleX(0.885);transform-origin:100% 0;">0,00</span><span class="t" style="right:595px;top:505.67px;font-size:12.5px;line-height:16px;color:#000;transform:scaleX(0.885);transform-origin:100% 0;">0,00</span><span class="t" style="right:520px;top:505.67px;font-size:12.5px;line-height:16px;color:#000;transform:scaleX(0.885);transform-origin:100% 0;">0,00</span><span class="t" style="right:419px;top:505.67px;font-size:12.5px;line-height:16px;color:#000;transform:scaleX(0.885);transform-origin:100% 0;">0,00</span><span class="t" style="right:344px;top:505.67px;font-size:12.5px;line-height:16px;color:#000;transform:scaleX(0.885);transform-origin:100% 0;">0,00</span><span class="t" style="right:1381px;top:521.67px;font-size:12.5px;line-height:16px;color:#0000ff;transform:scaleX(0.885);transform-origin:100% 0;">26</span><div class="clip" style="left:484px;top:522px;width:75px;height:16px"><span class="t" style="left:1.8px;top:-0.33px;font-size:12.5px;line-height:16px;color:#0000ff;transform:scaleX(0.885);transform-origin:0 0">Гл. 8</span></div><div class="clip" style="left:560px;top:522px;width:316px;height:16px"><span class="t" style="left:1.7px;top:-0.33px;font-size:12.5px;line-height:16px;color:#0000ff;transform:scaleX(0.885);transform-origin:0 0">Глава  8. Временные здания и сооружения.</span></div><span class="t" style="right:837px;top:521.67px;font-size:12.5px;line-height:16px;color:#0000ff;transform:scaleX(0.885);transform-origin:100% 0;">8</span><span class="t" style="right:757px;top:521.67px;font-size:12.5px;line-height:16px;color:#0000ff;transform:scaleX(0.885);transform-origin:100% 0;">0,00</span><span class="t" style="right:676px;top:521.67px;font-size:12.5px;line-height:16px;color:#0000ff;transform:scaleX(0.885);transform-origin:100% 0;">0,00</span><span class="t" style="right:595px;top:521.67px;font-size:12.5px;line-height:16px;color:#0000ff;transform:scaleX(0.885);transform-origin:100% 0;">0,00</span><span class="t" style="right:520px;top:521.67px;font-size:12.5px;line-height:16px;color:#0000ff;transform:scaleX(0.885);transform-origin:100% 0;">0,00</span><span class="t" style="right:419px;top:521.67px;font-size:12.5px;line-height:16px;color:#0000ff;transform:scaleX(0.885);transform-origin:100% 0;">0,00</span><span class="t" style="right:344px;top:521.67px;font-size:12.5px;line-height:16px;color:#0000ff;transform:scaleX(0.885);transform-origin:100% 0;">0,00</span><svg style="left:1432px;top:524px" width="10" height="12" viewBox="0 0 10 12"><path d="M2.3 5.5L3.3 5.3L6.3 10.2" fill="none" stroke="#2030e0" stroke-width="1.25"/><path d="M6.2 10.4L8 0.3" fill="none" stroke="#2030e0" stroke-width="0.7" opacity="0.75"/></svg><span class="t" style="right:1381px;top:537.67px;font-size:12.5px;line-height:16px;color:#000;transform:scaleX(0.885);transform-origin:100% 0;">27</span><div class="clip" style="left:432px;top:538px;width:51px;height:16px"><span class="t" style="left:1.8px;top:-0.33px;font-size:12.5px;line-height:16px;color:#000;transform:scaleX(0.84);transform-origin:0 0">ГСН 81-05-01-2001</span></div><div class="clip" style="left:484px;top:538px;width:75px;height:16px"><span class="t" style="left:1.8px;top:-0.33px;font-size:12.5px;line-height:16px;color:#000;transform:scaleX(0.885);transform-origin:0 0">Итог 1</span></div><div class="clip" style="left:560px;top:538px;width:316px;height:16px"><span class="t" style="left:1.7px;top:-0.33px;font-size:12.5px;line-height:16px;color:#000;transform:scaleX(0.885);transform-origin:0 0">Затраты на временные здания и сооружения; 1,5% от СМР</span></div><span class="t" style="right:757px;top:537.67px;font-size:12.5px;line-height:16px;color:#000;transform:scaleX(0.885);transform-origin:100% 0;">0,00</span><span class="t" style="right:676px;top:537.67px;font-size:12.5px;line-height:16px;color:#000;transform:scaleX(0.885);transform-origin:100% 0;">0,00</span><span class="t" style="right:595px;top:537.67px;font-size:12.5px;line-height:16px;color:#000;transform:scaleX(0.885);transform-origin:100% 0;">0,00</span><span class="t" style="right:520px;top:537.67px;font-size:12.5px;line-height:16px;color:#000;transform:scaleX(0.885);transform-origin:100% 0;">0,00</span><span class="t" style="right:419px;top:537.67px;font-size:12.5px;line-height:16px;color:#000;transform:scaleX(0.885);transform-origin:100% 0;">0,00</span><span class="t" style="right:344px;top:537.67px;font-size:12.5px;line-height:16px;color:#000;transform:scaleX(0.885);transform-origin:100% 0;">0,00</span><svg style="left:1432px;top:540px" width="10" height="12" viewBox="0 0 10 12"><path d="M2.3 5.5L3.3 5.3L6.3 10.2" fill="none" stroke="#f01040" stroke-width="1.25"/><path d="M6.2 10.4L8 0.3" fill="none" stroke="#f01040" stroke-width="0.7" opacity="0.75"/></svg><span class="t" style="right:1381px;top:553.67px;font-size:12.5px;line-height:16px;color:#000;transform:scaleX(0.885);transform-origin:100% 0;">28</span><div class="clip" style="left:484px;top:554px;width:75px;height:16px"><span class="t" style="left:1.8px;top:-0.33px;font-size:12.5px;line-height:16px;color:#000;transform:scaleX(0.885);transform-origin:0 0">Итог 2</span></div><div class="clip" style="left:560px;top:554px;width:316px;height:16px"><span class="t" style="left:1.7px;top:-0.33px;font-size:12.5px;line-height:16px;color:#000;transform:scaleX(0.885);transform-origin:0 0">Временные здания и сооружения.</span></div><span class="t" style="right:757px;top:553.67px;font-size:12.5px;line-height:16px;color:#000;transform:scaleX(0.885);transform-origin:100% 0;">0,00</span><span class="t" style="right:676px;top:553.67px;font-size:12.5px;line-height:16px;color:#000;transform:scaleX(0.885);transform-origin:100% 0;">0,00</span><span class="t" style="right:595px;top:553.67px;font-size:12.5px;line-height:16px;color:#000;transform:scaleX(0.885);transform-origin:100% 0;">0,00</span><span class="t" style="right:520px;top:553.67px;font-size:12.5px;line-height:16px;color:#000;transform:scaleX(0.885);transform-origin:100% 0;">0,00</span><span class="t" style="right:419px;top:553.67px;font-size:12.5px;line-height:16px;color:#000;transform:scaleX(0.885);transform-origin:100% 0;">0,00</span><span class="t" style="right:344px;top:553.67px;font-size:12.5px;line-height:16px;color:#000;transform:scaleX(0.885);transform-origin:100% 0;">0,00</span><span class="t" style="right:1381px;top:569.67px;font-size:12.5px;line-height:16px;color:#0000ff;transform:scaleX(0.885);transform-origin:100% 0;">29</span><div class="clip" style="left:484px;top:570px;width:75px;height:16px"><span class="t" style="left:1.8px;top:-0.33px;font-size:12.5px;line-height:16px;color:#0000ff;transform:scaleX(0.885);transform-origin:0 0">Ит 1-8</span></div><div class="clip" style="left:560px;top:570px;width:316px;height:16px"><span class="t" style="left:1.7px;top:-0.33px;font-size:12.5px;line-height:16px;color:#0000ff;transform:scaleX(0.885);transform-origin:0 0">Итого по главам 1 - 8</span></div><span class="t" style="right:757px;top:569.67px;font-size:12.5px;line-height:16px;color:#0000ff;transform:scaleX(0.885);transform-origin:100% 0;">0,00</span><span class="t" style="right:676px;top:569.67px;font-size:12.5px;line-height:16px;color:#0000ff;transform:scaleX(0.885);transform-origin:100% 0;">0,00</span><span class="t" style="right:595px;top:569.67px;font-size:12.5px;line-height:16px;color:#0000ff;transform:scaleX(0.885);transform-origin:100% 0;">0,00</span><span class="t" style="right:520px;top:569.67px;font-size:12.5px;line-height:16px;color:#0000ff;transform:scaleX(0.885);transform-origin:100% 0;">0,00</span><span class="t" style="right:419px;top:569.67px;font-size:12.5px;line-height:16px;color:#0000ff;transform:scaleX(0.885);transform-origin:100% 0;">0,00</span><span class="t" style="right:344px;top:569.67px;font-size:12.5px;line-height:16px;color:#0000ff;transform:scaleX(0.885);transform-origin:100% 0;">0,00</span><svg style="left:1432px;top:572px" width="10" height="12" viewBox="0 0 10 12"><path d="M2.3 5.5L3.3 5.3L6.3 10.2" fill="none" stroke="#2030e0" stroke-width="1.25"/><path d="M6.2 10.4L8 0.3" fill="none" stroke="#2030e0" stroke-width="0.7" opacity="0.75"/></svg><span class="t" style="right:1381px;top:585.67px;font-size:12.5px;line-height:16px;color:#000;transform:scaleX(0.885);transform-origin:100% 0;">30</span><div class="clip" style="left:484px;top:586px;width:75px;height:16px"><span class="t" style="left:1.8px;top:-0.33px;font-size:12.5px;line-height:16px;color:#000;transform:scaleX(0.885);transform-origin:0 0">1-8</span></div><div class="clip" style="left:560px;top:586px;width:316px;height:16px"><span class="t" style="left:1.7px;top:-0.33px;font-size:12.5px;line-height:16px;color:#000;transform:scaleX(0.885);transform-origin:0 0">Итого по главам 1 - 8</span></div><span class="t" style="right:757px;top:585.67px;font-size:12.5px;line-height:16px;color:#000;transform:scaleX(0.885);transform-origin:100% 0;">0,00</span><span class="t" style="right:676px;top:585.67px;font-size:12.5px;line-height:16px;color:#000;transform:scaleX(0.885);transform-origin:100% 0;">0,00</span><span class="t" style="right:595px;top:585.67px;font-size:12.5px;line-height:16px;color:#000;transform:scaleX(0.885);transform-origin:100% 0;">0,00</span><span class="t" style="right:520px;top:585.67px;font-size:12.5px;line-height:16px;color:#000;transform:scaleX(0.885);transform-origin:100% 0;">0,00</span><span class="t" style="right:419px;top:585.67px;font-size:12.5px;line-height:16px;color:#000;transform:scaleX(0.885);transform-origin:100% 0;">0,00</span><span class="t" style="right:344px;top:585.67px;font-size:12.5px;line-height:16px;color:#000;transform:scaleX(0.885);transform-origin:100% 0;">0,00</span><span class="t" style="right:1381px;top:601.67px;font-size:12.5px;line-height:16px;color:#0000ff;transform:scaleX(0.885);transform-origin:100% 0;">31</span><div class="clip" style="left:484px;top:602px;width:75px;height:16px"><span class="t" style="left:1.8px;top:-0.33px;font-size:12.5px;line-height:16px;color:#0000ff;transform:scaleX(0.885);transform-origin:0 0">Гл. 9</span></div><div class="clip" style="left:560px;top:602px;width:316px;height:16px"><span class="t" style="left:1.7px;top:-0.33px;font-size:12.5px;line-height:16px;color:#0000ff;transform:scaleX(0.885);transform-origin:0 0">Глава  9. Прочие работы и затраты.</span></div><span class="t" style="right:837px;top:601.67px;font-size:12.5px;line-height:16px;color:#0000ff;transform:scaleX(0.885);transform-origin:100% 0;">9</span><span class="t" style="right:757px;top:601.67px;font-size:12.5px;line-height:16px;color:#0000ff;transform:scaleX(0.885);transform-origin:100% 0;">0,00</span><span class="t" style="right:676px;top:601.67px;font-size:12.5px;line-height:16px;color:#0000ff;transform:scaleX(0.885);transform-origin:100% 0;">0,00</span><span class="t" style="right:595px;top:601.67px;font-size:12.5px;line-height:16px;color:#0000ff;transform:scaleX(0.885);transform-origin:100% 0;">0,00</span><span class="t" style="right:520px;top:601.67px;font-size:12.5px;line-height:16px;color:#0000ff;transform:scaleX(0.885);transform-origin:100% 0;">0,00</span><span class="t" style="right:419px;top:601.67px;font-size:12.5px;line-height:16px;color:#0000ff;transform:scaleX(0.885);transform-origin:100% 0;">0,00</span><span class="t" style="right:344px;top:601.67px;font-size:12.5px;line-height:16px;color:#0000ff;transform:scaleX(0.885);transform-origin:100% 0;">0,00</span><svg style="left:1432px;top:604px" width="10" height="12" viewBox="0 0 10 12"><path d="M2.3 5.5L3.3 5.3L6.3 10.2" fill="none" stroke="#2030e0" stroke-width="1.25"/><path d="M6.2 10.4L8 0.3" fill="none" stroke="#2030e0" stroke-width="0.7" opacity="0.75"/></svg><span class="t" style="right:1381px;top:617.67px;font-size:12.5px;line-height:16px;color:#000;transform:scaleX(0.885);transform-origin:100% 0;">32</span><div class="clip" style="left:432px;top:618px;width:51px;height:16px"><span class="t" style="left:1.8px;top:-0.33px;font-size:12.5px;line-height:16px;color:#000;transform:scaleX(0.84);transform-origin:0 0">325/пр Прил.</span></div><div class="clip" style="left:484px;top:618px;width:75px;height:16px"><span class="t" style="left:1.8px;top:-0.33px;font-size:12.5px;line-height:16px;color:#000;transform:scaleX(0.885);transform-origin:0 0">Итог 3</span></div><div class="clip" style="left:560px;top:618px;width:316px;height:16px"><span class="t" style="left:1.7px;top:-0.33px;font-size:12.5px;line-height:16px;color:#000;transform:scaleX(0.885);transform-origin:0 0">Дополнительные затраты в зимнее время; 3,7%</span></div><span class="t" style="right:757px;top:617.67px;font-size:12.5px;line-height:16px;color:#000;transform:scaleX(0.885);transform-origin:100% 0;">0,00</span><span class="t" style="right:676px;top:617.67px;font-size:12.5px;line-height:16px;color:#000;transform:scaleX(0.885);transform-origin:100% 0;">0,00</span><span class="t" style="right:595px;top:617.67px;font-size:12.5px;line-height:16px;color:#000;transform:scaleX(0.885);transform-origin:100% 0;">0,00</span><span class="t" style="right:520px;top:617.67px;font-size:12.5px;line-height:16px;color:#000;transform:scaleX(0.885);transform-origin:100% 0;">0,00</span><span class="t" style="right:419px;top:617.67px;font-size:12.5px;line-height:16px;color:#000;transform:scaleX(0.885);transform-origin:100% 0;">0,00</span><span class="t" style="right:344px;top:617.67px;font-size:12.5px;line-height:16px;color:#000;transform:scaleX(0.885);transform-origin:100% 0;">0,00</span><svg style="left:1432px;top:620px" width="10" height="12" viewBox="0 0 10 12"><path d="M2.3 5.5L3.3 5.3L6.3 10.2" fill="none" stroke="#f01040" stroke-width="1.25"/><path d="M6.2 10.4L8 0.3" fill="none" stroke="#f01040" stroke-width="0.7" opacity="0.75"/></svg><span class="t" style="right:1381px;top:633.67px;font-size:12.5px;line-height:16px;color:#000;transform:scaleX(0.885);transform-origin:100% 0;">33</span><div class="clip" style="left:484px;top:634px;width:75px;height:16px"><span class="t" style="left:1.8px;top:-0.33px;font-size:12.5px;line-height:16px;color:#000;transform:scaleX(0.885);transform-origin:0 0">2.2</span></div><div class="clip" style="left:560px;top:634px;width:316px;height:16px"><span class="t" style="left:1.7px;top:-0.33px;font-size:12.5px;line-height:16px;color:#000;transform:scaleX(0.885);transform-origin:0 0">Затраты по перевозке работников к месту работы и обратно</span></div><span class="t" style="right:757px;top:633.67px;font-size:12.5px;line-height:16px;color:#000;transform:scaleX(0.885);transform-origin:100% 0;">0,00</span><span class="t" style="right:676px;top:633.67px;font-size:12.5px;line-height:16px;color:#000;transform:scaleX(0.885);transform-origin:100% 0;">0,00</span><span class="t" style="right:595px;top:633.67px;font-size:12.5px;line-height:16px;color:#000;transform:scaleX(0.885);transform-origin:100% 0;">0,00</span><span class="t" style="right:520px;top:633.67px;font-size:12.5px;line-height:16px;color:#000;transform:scaleX(0.885);transform-origin:100% 0;">0,00</span><span class="t" style="right:419px;top:633.67px;font-size:12.5px;line-height:16px;color:#000;transform:scaleX(0.885);transform-origin:100% 0;">0,00</span><span class="t" style="right:344px;top:633.67px;font-size:12.5px;line-height:16px;color:#000;transform:scaleX(0.885);transform-origin:100% 0;">0,00</span><svg style="left:1432px;top:636px" width="10" height="12" viewBox="0 0 10 12"><path d="M2.3 5.5L3.3 5.3L6.3 10.2" fill="none" stroke="#f01040" stroke-width="1.25"/><path d="M6.2 10.4L8 0.3" fill="none" stroke="#f01040" stroke-width="0.7" opacity="0.75"/></svg><span class="t" style="right:1381px;top:649.67px;font-size:12.5px;line-height:16px;color:#000;transform:scaleX(0.885);transform-origin:100% 0;">34</span><div class="clip" style="left:484px;top:650px;width:75px;height:16px"><span class="t" style="left:1.8px;top:-0.33px;font-size:12.5px;line-height:16px;color:#000;transform:scaleX(0.885);transform-origin:0 0">2.3</span></div><div class="clip" style="left:560px;top:650px;width:316px;height:16px"><span class="t" style="left:1.7px;top:-0.33px;font-size:12.5px;line-height:16px;color:#000;transform:scaleX(0.885);transform-origin:0 0">Затраты, связанные с осуществлением работ вахтовым методом</span></div><span class="t" style="right:757px;top:649.67px;font-size:12.5px;line-height:16px;color:#000;transform:scaleX(0.885);transform-origin:100% 0;">0,00</span><span class="t" style="right:676px;top:649.67px;font-size:12.5px;line-height:16px;color:#000;transform:scaleX(0.885);transform-origin:100% 0;">0,00</span><span class="t" style="right:595px;top:649.67px;font-size:12.5px;line-height:16px;color:#000;transform:scaleX(0.885);transform-origin:100% 0;">0,00</span><span class="t" style="right:520px;top:649.67px;font-size:12.5px;line-height:16px;color:#000;transform:scaleX(0.885);transform-origin:100% 0;">0,00</span><span class="t" style="right:419px;top:649.67px;font-size:12.5px;line-height:16px;color:#000;transform:scaleX(0.885);transform-origin:100% 0;">0,00</span><span class="t" style="right:344px;top:649.67px;font-size:12.5px;line-height:16px;color:#000;transform:scaleX(0.885);transform-origin:100% 0;">0,00</span><svg style="left:1432px;top:652px" width="10" height="12" viewBox="0 0 10 12"><path d="M2.3 5.5L3.3 5.3L6.3 10.2" fill="none" stroke="#f01040" stroke-width="1.25"/><path d="M6.2 10.4L8 0.3" fill="none" stroke="#f01040" stroke-width="0.7" opacity="0.75"/></svg><span class="t" style="right:1381px;top:665.67px;font-size:12.5px;line-height:16px;color:#000;transform:scaleX(0.885);transform-origin:100% 0;">35</span><div class="clip" style="left:484px;top:666px;width:75px;height:16px"><span class="t" style="left:1.8px;top:-0.33px;font-size:12.5px;line-height:16px;color:#000;transform:scaleX(0.885);transform-origin:0 0">2.4</span></div><div class="clip" style="left:560px;top:666px;width:316px;height:16px"><span class="t" style="left:1.7px;top:-0.33px;font-size:12.5px;line-height:16px;color:#000;transform:scaleX(0.885);transform-origin:0 0">Расходы, связанные со служебными командировками рабочих</span></div><span class="t" style="right:757px;top:665.67px;font-size:12.5px;line-height:16px;color:#000;transform:scaleX(0.885);transform-origin:100% 0;">0,00</span><span class="t" style="right:676px;top:665.67px;font-size:12.5px;line-height:16px;color:#000;transform:scaleX(0.885);transform-origin:100% 0;">0,00</span><span class="t" style="right:595px;top:665.67px;font-size:12.5px;line-height:16px;color:#000;transform:scaleX(0.885);transform-origin:100% 0;">0,00</span><span class="t" style="right:520px;top:665.67px;font-size:12.5px;line-height:16px;color:#000;transform:scaleX(0.885);transform-origin:100% 0;">0,00</span><span class="t" style="right:419px;top:665.67px;font-size:12.5px;line-height:16px;color:#000;transform:scaleX(0.885);transform-origin:100% 0;">0,00</span><span class="t" style="right:344px;top:665.67px;font-size:12.5px;line-height:16px;color:#000;transform:scaleX(0.885);transform-origin:100% 0;">0,00</span><svg style="left:1432px;top:668px" width="10" height="12" viewBox="0 0 10 12"><path d="M2.3 5.5L3.3 5.3L6.3 10.2" fill="none" stroke="#f01040" stroke-width="1.25"/><path d="M6.2 10.4L8 0.3" fill="none" stroke="#f01040" stroke-width="0.7" opacity="0.75"/></svg><span class="t" style="right:1381px;top:681.67px;font-size:12.5px;line-height:16px;color:#000;transform:scaleX(0.885);transform-origin:100% 0;">36</span><div class="clip" style="left:484px;top:682px;width:75px;height:16px"><span class="t" style="left:1.8px;top:-0.33px;font-size:12.5px;line-height:16px;color:#000;transform:scaleX(0.885);transform-origin:0 0">2.5</span></div><div class="clip" style="left:560px;top:682px;width:316px;height:16px"><span class="t" style="left:1.7px;top:-0.33px;font-size:12.5px;line-height:16px;color:#000;transform:scaleX(0.885);transform-origin:0 0">Затраты по содержанию спасательных служб при осуществлении</span></div><span class="t" style="right:757px;top:681.67px;font-size:12.5px;line-height:16px;color:#000;transform:scaleX(0.885);transform-origin:100% 0;">0,00</span><span class="t" style="right:676px;top:681.67px;font-size:12.5px;line-height:16px;color:#000;transform:scaleX(0.885);transform-origin:100% 0;">0,00</span><span class="t" style="right:595px;top:681.67px;font-size:12.5px;line-height:16px;color:#000;transform:scaleX(0.885);transform-origin:100% 0;">0,00</span><span class="t" style="right:520px;top:681.67px;font-size:12.5px;line-height:16px;color:#000;transform:scaleX(0.885);transform-origin:100% 0;">0,00</span><span class="t" style="right:419px;top:681.67px;font-size:12.5px;line-height:16px;color:#000;transform:scaleX(0.885);transform-origin:100% 0;">0,00</span><span class="t" style="right:344px;top:681.67px;font-size:12.5px;line-height:16px;color:#000;transform:scaleX(0.885);transform-origin:100% 0;">0,00</span><svg style="left:1432px;top:684px" width="10" height="12" viewBox="0 0 10 12"><path d="M2.3 5.5L3.3 5.3L6.3 10.2" fill="none" stroke="#f01040" stroke-width="1.25"/><path d="M6.2 10.4L8 0.3" fill="none" stroke="#f01040" stroke-width="0.7" opacity="0.75"/></svg><span class="t" style="right:1381px;top:697.67px;font-size:12.5px;line-height:16px;color:#000;transform:scaleX(0.885);transform-origin:100% 0;">37</span><div class="clip" style="left:484px;top:698px;width:75px;height:16px"><span class="t" style="left:1.8px;top:-0.33px;font-size:12.5px;line-height:16px;color:#000;transform:scaleX(0.885);transform-origin:0 0">2.6</span></div><div class="clip" style="left:560px;top:698px;width:316px;height:16px"><span class="t" style="left:1.7px;top:-0.33px;font-size:12.5px;line-height:16px;color:#000;transform:scaleX(0.885);transform-origin:0 0">Затраты, связанные с проведением на территории строительства</span></div><span class="t" style="right:757px;top:697.67px;font-size:12.5px;line-height:16px;color:#000;transform:scaleX(0.885);transform-origin:100% 0;">0,00</span><span class="t" style="right:676px;top:697.67px;font-size:12.5px;line-height:16px;color:#000;transform:scaleX(0.885);transform-origin:100% 0;">0,00</span><span class="t" style="right:595px;top:697.67px;font-size:12.5px;line-height:16px;color:#000;transform:scaleX(0.885);transform-origin:100% 0;">0,00</span><span class="t" style="right:520px;top:697.67px;font-size:12.5px;line-height:16px;color:#000;transform:scaleX(0.885);transform-origin:100% 0;">0,00</span><span class="t" style="right:419px;top:697.67px;font-size:12.5px;line-height:16px;color:#000;transform:scaleX(0.885);transform-origin:100% 0;">0,00</span><span class="t" style="right:344px;top:697.67px;font-size:12.5px;line-height:16px;color:#000;transform:scaleX(0.885);transform-origin:100% 0;">0,00</span><svg style="left:1432px;top:700px" width="10" height="12" viewBox="0 0 10 12"><path d="M2.3 5.5L3.3 5.3L6.3 10.2" fill="none" stroke="#f01040" stroke-width="1.25"/><path d="M6.2 10.4L8 0.3" fill="none" stroke="#f01040" stroke-width="0.7" opacity="0.75"/></svg><span class="t" style="right:1381px;top:713.67px;font-size:12.5px;line-height:16px;color:#000;transform:scaleX(0.885);transform-origin:100% 0;">38</span><div class="clip" style="left:484px;top:714px;width:75px;height:16px"><span class="t" style="left:1.8px;top:-0.33px;font-size:12.5px;line-height:16px;color:#000;transform:scaleX(0.885);transform-origin:0 0">2.7</span></div><div class="clip" style="left:560px;top:714px;width:316px;height:16px"><span class="t" style="left:1.7px;top:-0.33px;font-size:12.5px;line-height:16px;color:#000;transform:scaleX(0.885);transform-origin:0 0">Затраты на проведение пусконаладочных работ</span></div><span class="t" style="right:757px;top:713.67px;font-size:12.5px;line-height:16px;color:#000;transform:scaleX(0.885);transform-origin:100% 0;">0,00</span><span class="t" style="right:676px;top:713.67px;font-size:12.5px;line-height:16px;color:#000;transform:scaleX(0.885);transform-origin:100% 0;">0,00</span><span class="t" style="right:595px;top:713.67px;font-size:12.5px;line-height:16px;color:#000;transform:scaleX(0.885);transform-origin:100% 0;">0,00</span><span class="t" style="right:520px;top:713.67px;font-size:12.5px;line-height:16px;color:#000;transform:scaleX(0.885);transform-origin:100% 0;">0,00</span><span class="t" style="right:419px;top:713.67px;font-size:12.5px;line-height:16px;color:#000;transform:scaleX(0.885);transform-origin:100% 0;">0,00</span><span class="t" style="right:344px;top:713.67px;font-size:12.5px;line-height:16px;color:#000;transform:scaleX(0.885);transform-origin:100% 0;">0,00</span><svg style="left:1432px;top:716px" width="10" height="12" viewBox="0 0 10 12"><path d="M2.3 5.5L3.3 5.3L6.3 10.2" fill="none" stroke="#f01040" stroke-width="1.25"/><path d="M6.2 10.4L8 0.3" fill="none" stroke="#f01040" stroke-width="0.7" opacity="0.75"/></svg><span class="t" style="right:1381px;top:729.67px;font-size:12.5px;line-height:16px;color:#000;transform:scaleX(0.885);transform-origin:100% 0;">39</span><div class="clip" style="left:484px;top:730px;width:75px;height:16px"><span class="t" style="left:1.8px;top:-0.33px;font-size:12.5px;line-height:16px;color:#000;transform:scaleX(0.885);transform-origin:0 0">2.8</span></div><div class="clip" style="left:560px;top:730px;width:316px;height:16px"><span class="t" style="left:1.7px;top:-0.33px;font-size:12.5px;line-height:16px;color:#000;transform:scaleX(0.885);transform-origin:0 0">Затраты на содержание автомобильных дорог и восстановление</span></div><span class="t" style="right:757px;top:729.67px;font-size:12.5px;line-height:16px;color:#000;transform:scaleX(0.885);transform-origin:100% 0;">0,00</span><span class="t" style="right:676px;top:729.67px;font-size:12.5px;line-height:16px;color:#000;transform:scaleX(0.885);transform-origin:100% 0;">0,00</span><span class="t" style="right:595px;top:729.67px;font-size:12.5px;line-height:16px;color:#000;transform:scaleX(0.885);transform-origin:100% 0;">0,00</span><span class="t" style="right:520px;top:729.67px;font-size:12.5px;line-height:16px;color:#000;transform:scaleX(0.885);transform-origin:100% 0;">0,00</span><span class="t" style="right:419px;top:729.67px;font-size:12.5px;line-height:16px;color:#000;transform:scaleX(0.885);transform-origin:100% 0;">0,00</span><span class="t" style="right:344px;top:729.67px;font-size:12.5px;line-height:16px;color:#000;transform:scaleX(0.885);transform-origin:100% 0;">0,00</span><svg style="left:1432px;top:732px" width="10" height="12" viewBox="0 0 10 12"><path d="M2.3 5.5L3.3 5.3L6.3 10.2" fill="none" stroke="#f01040" stroke-width="1.25"/><path d="M6.2 10.4L8 0.3" fill="none" stroke="#f01040" stroke-width="0.7" opacity="0.75"/></svg><span class="t" style="right:1381px;top:745.67px;font-size:12.5px;line-height:16px;color:#000;transform:scaleX(0.885);transform-origin:100% 0;">40</span><div class="clip" style="left:484px;top:746px;width:75px;height:16px"><span class="t" style="left:1.8px;top:-0.33px;font-size:12.5px;line-height:16px;color:#000;transform:scaleX(0.885);transform-origin:0 0">2.9</span></div><div class="clip" style="left:560px;top:746px;width:316px;height:16px"><span class="t" style="left:1.7px;top:-0.33px;font-size:12.5px;line-height:16px;color:#000;transform:scaleX(0.885);transform-origin:0 0">Затраты по подключению (технологическому присоединению)</span></div><span class="t" style="right:757px;top:745.67px;font-size:12.5px;line-height:16px;color:#000;transform:scaleX(0.885);transform-origin:100% 0;">0,00</span><span class="t" style="right:676px;top:745.67px;font-size:12.5px;line-height:16px;color:#000;transform:scaleX(0.885);transform-origin:100% 0;">0,00</span><span class="t" style="right:595px;top:745.67px;font-size:12.5px;line-height:16px;color:#000;transform:scaleX(0.885);transform-origin:100% 0;">0,00</span><span class="t" style="right:520px;top:745.67px;font-size:12.5px;line-height:16px;color:#000;transform:scaleX(0.885);transform-origin:100% 0;">0,00</span><span class="t" style="right:419px;top:745.67px;font-size:12.5px;line-height:16px;color:#000;transform:scaleX(0.885);transform-origin:100% 0;">0,00</span><span class="t" style="right:344px;top:745.67px;font-size:12.5px;line-height:16px;color:#000;transform:scaleX(0.885);transform-origin:100% 0;">0,00</span><svg style="left:1432px;top:748px" width="10" height="12" viewBox="0 0 10 12"><path d="M2.3 5.5L3.3 5.3L6.3 10.2" fill="none" stroke="#f01040" stroke-width="1.25"/><path d="M6.2 10.4L8 0.3" fill="none" stroke="#f01040" stroke-width="0.7" opacity="0.75"/></svg><span class="t" style="right:1381px;top:761.67px;font-size:12.5px;line-height:16px;color:#000;transform:scaleX(0.885);transform-origin:100% 0;">41</span><div class="clip" style="left:484px;top:762px;width:75px;height:16px"><span class="t" style="left:1.8px;top:-0.33px;font-size:12.5px;line-height:16px;color:#000;transform:scaleX(0.885);transform-origin:0 0">2.10</span></div><div class="clip" style="left:560px;top:762px;width:316px;height:16px"><span class="t" style="left:1.7px;top:-0.33px;font-size:12.5px;line-height:16px;color:#000;transform:scaleX(0.885);transform-origin:0 0">Затраты по размещению, утилизации и (или) обезвреживанию</span></div><span class="t" style="right:757px;top:761.67px;font-size:12.5px;line-height:16px;color:#000;transform:scaleX(0.885);transform-origin:100% 0;">0,00</span><span class="t" style="right:676px;top:761.67px;font-size:12.5px;line-height:16px;color:#000;transform:scaleX(0.885);transform-origin:100% 0;">0,00</span><span class="t" style="right:595px;top:761.67px;font-size:12.5px;line-height:16px;color:#000;transform:scaleX(0.885);transform-origin:100% 0;">0,00</span><span class="t" style="right:520px;top:761.67px;font-size:12.5px;line-height:16px;color:#000;transform:scaleX(0.885);transform-origin:100% 0;">0,00</span><span class="t" style="right:419px;top:761.67px;font-size:12.5px;line-height:16px;color:#000;transform:scaleX(0.885);transform-origin:100% 0;">0,00</span><span class="t" style="right:344px;top:761.67px;font-size:12.5px;line-height:16px;color:#000;transform:scaleX(0.885);transform-origin:100% 0;">0,00</span><svg style="left:1432px;top:764px" width="10" height="12" viewBox="0 0 10 12"><path d="M2.3 5.5L3.3 5.3L6.3 10.2" fill="none" stroke="#f01040" stroke-width="1.25"/><path d="M6.2 10.4L8 0.3" fill="none" stroke="#f01040" stroke-width="0.7" opacity="0.75"/></svg><span class="t" style="right:1381px;top:777.67px;font-size:12.5px;line-height:16px;color:#000;transform:scaleX(0.885);transform-origin:100% 0;">42</span><div class="clip" style="left:484px;top:778px;width:75px;height:16px"><span class="t" style="left:1.8px;top:-0.33px;font-size:12.5px;line-height:16px;color:#000;transform:scaleX(0.885);transform-origin:0 0">2.11</span></div><div class="clip" style="left:560px;top:778px;width:316px;height:16px"><span class="t" style="left:1.7px;top:-0.33px;font-size:12.5px;line-height:16px;color:#000;transform:scaleX(0.885);transform-origin:0 0">Плата за негативное воздействие на окружающую среду (затраты</span></div><span class="t" style="right:757px;top:777.67px;font-size:12.5px;line-height:16px;color:#000;transform:scaleX(0.885);transform-origin:100% 0;">0,00</span><span class="t" style="right:676px;top:777.67px;font-size:12.5px;line-height:16px;color:#000;transform:scaleX(0.885);transform-origin:100% 0;">0,00</span><span class="t" style="right:595px;top:777.67px;font-size:12.5px;line-height:16px;color:#000;transform:scaleX(0.885);transform-origin:100% 0;">0,00</span><span class="t" style="right:520px;top:777.67px;font-size:12.5px;line-height:16px;color:#000;transform:scaleX(0.885);transform-origin:100% 0;">0,00</span><span class="t" style="right:419px;top:777.67px;font-size:12.5px;line-height:16px;color:#000;transform:scaleX(0.885);transform-origin:100% 0;">0,00</span><span class="t" style="right:344px;top:777.67px;font-size:12.5px;line-height:16px;color:#000;transform:scaleX(0.885);transform-origin:100% 0;">0,00</span><svg style="left:1432px;top:780px" width="10" height="12" viewBox="0 0 10 12"><path d="M2.3 5.5L3.3 5.3L6.3 10.2" fill="none" stroke="#f01040" stroke-width="1.25"/><path d="M6.2 10.4L8 0.3" fill="none" stroke="#f01040" stroke-width="0.7" opacity="0.75"/></svg><span class="t" style="right:1381px;top:793.67px;font-size:12.5px;line-height:16px;color:#000;transform:scaleX(0.885);transform-origin:100% 0;">43</span><div class="clip" style="left:484px;top:794px;width:75px;height:16px"><span class="t" style="left:1.8px;top:-0.33px;font-size:12.5px;line-height:16px;color:#000;transform:scaleX(0.885);transform-origin:0 0">2.12</span></div><div class="clip" style="left:560px;top:794px;width:316px;height:16px"><span class="t" style="left:1.7px;top:-0.33px;font-size:12.5px;line-height:16px;color:#000;transform:scaleX(0.885);transform-origin:0 0">Компенсация расходов предприятиям железнодорожного, речного</span></div><span class="t" style="right:757px;top:793.67px;font-size:12.5px;line-height:16px;color:#000;transform:scaleX(0.885);transform-origin:100% 0;">0,00</span><span class="t" style="right:676px;top:793.67px;font-size:12.5px;line-height:16px;color:#000;transform:scaleX(0.885);transform-origin:100% 0;">0,00</span><span class="t" style="right:595px;top:793.67px;font-size:12.5px;line-height:16px;color:#000;transform:scaleX(0.885);transform-origin:100% 0;">0,00</span><span class="t" style="right:520px;top:793.67px;font-size:12.5px;line-height:16px;color:#000;transform:scaleX(0.885);transform-origin:100% 0;">0,00</span><span class="t" style="right:419px;top:793.67px;font-size:12.5px;line-height:16px;color:#000;transform:scaleX(0.885);transform-origin:100% 0;">0,00</span><span class="t" style="right:344px;top:793.67px;font-size:12.5px;line-height:16px;color:#000;transform:scaleX(0.885);transform-origin:100% 0;">0,00</span><svg style="left:1432px;top:796px" width="10" height="12" viewBox="0 0 10 12"><path d="M2.3 5.5L3.3 5.3L6.3 10.2" fill="none" stroke="#f01040" stroke-width="1.25"/><path d="M6.2 10.4L8 0.3" fill="none" stroke="#f01040" stroke-width="0.7" opacity="0.75"/></svg><span class="t" style="right:1381px;top:809.67px;font-size:12.5px;line-height:16px;color:#000;transform:scaleX(0.885);transform-origin:100% 0;">44</span><div class="clip" style="left:484px;top:810px;width:75px;height:16px"><span class="t" style="left:1.8px;top:-0.33px;font-size:12.5px;line-height:16px;color:#000;transform:scaleX(0.885);transform-origin:0 0">2.13</span></div><div class="clip" style="left:560px;top:810px;width:316px;height:16px"><span class="t" style="left:1.7px;top:-0.33px;font-size:12.5px;line-height:16px;color:#000;transform:scaleX(0.885);transform-origin:0 0">Затраты, связанные с перевозкой опасных, тяжеловесных и (или)</span></div><span class="t" style="right:757px;top:809.67px;font-size:12.5px;line-height:16px;color:#000;transform:scaleX(0.885);transform-origin:100% 0;">0,00</span><span class="t" style="right:676px;top:809.67px;font-size:12.5px;line-height:16px;color:#000;transform:scaleX(0.885);transform-origin:100% 0;">0,00</span><span class="t" style="right:595px;top:809.67px;font-size:12.5px;line-height:16px;color:#000;transform:scaleX(0.885);transform-origin:100% 0;">0,00</span><span class="t" style="right:520px;top:809.67px;font-size:12.5px;line-height:16px;color:#000;transform:scaleX(0.885);transform-origin:100% 0;">0,00</span><span class="t" style="right:419px;top:809.67px;font-size:12.5px;line-height:16px;color:#000;transform:scaleX(0.885);transform-origin:100% 0;">0,00</span><span class="t" style="right:344px;top:809.67px;font-size:12.5px;line-height:16px;color:#000;transform:scaleX(0.885);transform-origin:100% 0;">0,00</span><svg style="left:1432px;top:812px" width="10" height="12" viewBox="0 0 10 12"><path d="M2.3 5.5L3.3 5.3L6.3 10.2" fill="none" stroke="#f01040" stroke-width="1.25"/><path d="M6.2 10.4L8 0.3" fill="none" stroke="#f01040" stroke-width="0.7" opacity="0.75"/></svg><span class="t" style="right:1381px;top:825.67px;font-size:12.5px;line-height:16px;color:#000;transform:scaleX(0.885);transform-origin:100% 0;">45</span><div class="clip" style="left:484px;top:826px;width:75px;height:16px"><span class="t" style="left:1.8px;top:-0.33px;font-size:12.5px;line-height:16px;color:#000;transform:scaleX(0.885);transform-origin:0 0">2.14</span></div><div class="clip" style="left:560px;top:826px;width:316px;height:16px"><span class="t" style="left:1.7px;top:-0.33px;font-size:12.5px;line-height:16px;color:#000;transform:scaleX(0.885);transform-origin:0 0">Затраты, связанные с арендой и содержанием вспомогательных</span></div><span class="t" style="right:757px;top:825.67px;font-size:12.5px;line-height:16px;color:#000;transform:scaleX(0.885);transform-origin:100% 0;">0,00</span><span class="t" style="right:676px;top:825.67px;font-size:12.5px;line-height:16px;color:#000;transform:scaleX(0.885);transform-origin:100% 0;">0,00</span><span class="t" style="right:595px;top:825.67px;font-size:12.5px;line-height:16px;color:#000;transform:scaleX(0.885);transform-origin:100% 0;">0,00</span><span class="t" style="right:520px;top:825.67px;font-size:12.5px;line-height:16px;color:#000;transform:scaleX(0.885);transform-origin:100% 0;">0,00</span><span class="t" style="right:419px;top:825.67px;font-size:12.5px;line-height:16px;color:#000;transform:scaleX(0.885);transform-origin:100% 0;">0,00</span><span class="t" style="right:344px;top:825.67px;font-size:12.5px;line-height:16px;color:#000;transform:scaleX(0.885);transform-origin:100% 0;">0,00</span><svg style="left:1432px;top:828px" width="10" height="12" viewBox="0 0 10 12"><path d="M2.3 5.5L3.3 5.3L6.3 10.2" fill="none" stroke="#f01040" stroke-width="1.25"/><path d="M6.2 10.4L8 0.3" fill="none" stroke="#f01040" stroke-width="0.7" opacity="0.75"/></svg><span class="t" style="right:1381px;top:841.67px;font-size:12.5px;line-height:16px;color:#000;transform:scaleX(0.885);transform-origin:100% 0;">46</span><div class="clip" style="left:484px;top:842px;width:75px;height:16px"><span class="t" style="left:1.8px;top:-0.33px;font-size:12.5px;line-height:16px;color:#000;transform:scaleX(0.885);transform-origin:0 0">2.15</span></div><div class="clip" style="left:560px;top:842px;width:316px;height:16px"><span class="t" style="left:1.7px;top:-0.33px;font-size:12.5px;line-height:16px;color:#000;transform:scaleX(0.885);transform-origin:0 0">Затраты, связанные с перебазированием подрядных организаций</span></div><span class="t" style="right:757px;top:841.67px;font-size:12.5px;line-height:16px;color:#000;transform:scaleX(0.885);transform-origin:100% 0;">0,00</span><span class="t" style="right:676px;top:841.67px;font-size:12.5px;line-height:16px;color:#000;transform:scaleX(0.885);transform-origin:100% 0;">0,00</span><span class="t" style="right:595px;top:841.67px;font-size:12.5px;line-height:16px;color:#000;transform:scaleX(0.885);transform-origin:100% 0;">0,00</span><span class="t" style="right:520px;top:841.67px;font-size:12.5px;line-height:16px;color:#000;transform:scaleX(0.885);transform-origin:100% 0;">0,00</span><span class="t" style="right:419px;top:841.67px;font-size:12.5px;line-height:16px;color:#000;transform:scaleX(0.885);transform-origin:100% 0;">0,00</span><span class="t" style="right:344px;top:841.67px;font-size:12.5px;line-height:16px;color:#000;transform:scaleX(0.885);transform-origin:100% 0;">0,00</span><svg style="left:1432px;top:844px" width="10" height="12" viewBox="0 0 10 12"><path d="M2.3 5.5L3.3 5.3L6.3 10.2" fill="none" stroke="#f01040" stroke-width="1.25"/><path d="M6.2 10.4L8 0.3" fill="none" stroke="#f01040" stroke-width="0.7" opacity="0.75"/></svg><span class="t" style="right:1381px;top:857.67px;font-size:12.5px;line-height:16px;color:#000;transform:scaleX(0.885);transform-origin:100% 0;">47</span><div class="clip" style="left:484px;top:858px;width:75px;height:16px"><span class="t" style="left:1.8px;top:-0.33px;font-size:12.5px;line-height:16px;color:#000;transform:scaleX(0.885);transform-origin:0 0">2.16</span></div><div class="clip" style="left:560px;top:858px;width:316px;height:16px"><span class="t" style="left:1.7px;top:-0.33px;font-size:12.5px;line-height:16px;color:#000;transform:scaleX(0.885);transform-origin:0 0">Затраты, связанные с использованием студенческих отрядов</span></div><span class="t" style="right:757px;top:857.67px;font-size:12.5px;line-height:16px;color:#000;transform:scaleX(0.885);transform-origin:100% 0;">0,00</span><span class="t" style="right:676px;top:857.67px;font-size:12.5px;line-height:16px;color:#000;transform:scaleX(0.885);transform-origin:100% 0;">0,00</span><span class="t" style="right:595px;top:857.67px;font-size:12.5px;line-height:16px;color:#000;transform:scaleX(0.885);transform-origin:100% 0;">0,00</span><span class="t" style="right:520px;top:857.67px;font-size:12.5px;line-height:16px;color:#000;transform:scaleX(0.885);transform-origin:100% 0;">0,00</span><span class="t" style="right:419px;top:857.67px;font-size:12.5px;line-height:16px;color:#000;transform:scaleX(0.885);transform-origin:100% 0;">0,00</span><span class="t" style="right:344px;top:857.67px;font-size:12.5px;line-height:16px;color:#000;transform:scaleX(0.885);transform-origin:100% 0;">0,00</span><svg style="left:1432px;top:860px" width="10" height="12" viewBox="0 0 10 12"><path d="M2.3 5.5L3.3 5.3L6.3 10.2" fill="none" stroke="#f01040" stroke-width="1.25"/><path d="M6.2 10.4L8 0.3" fill="none" stroke="#f01040" stroke-width="0.7" opacity="0.75"/></svg><span class="t" style="right:1381px;top:873.67px;font-size:12.5px;line-height:16px;color:#000;transform:scaleX(0.885);transform-origin:100% 0;">48</span><div class="clip" style="left:484px;top:874px;width:75px;height:16px"><span class="t" style="left:1.8px;top:-0.33px;font-size:12.5px;line-height:16px;color:#000;transform:scaleX(0.885);transform-origin:0 0">2.17</span></div><div class="clip" style="left:560px;top:874px;width:316px;height:16px"><span class="t" style="left:1.7px;top:-0.33px;font-size:12.5px;line-height:16px;color:#000;transform:scaleX(0.885);transform-origin:0 0">Затраты, связанные с предоставлением независимой гарантии</span></div><span class="t" style="right:757px;top:873.67px;font-size:12.5px;line-height:16px;color:#000;transform:scaleX(0.885);transform-origin:100% 0;">0,00</span><span class="t" style="right:676px;top:873.67px;font-size:12.5px;line-height:16px;color:#000;transform:scaleX(0.885);transform-origin:100% 0;">0,00</span><span class="t" style="right:595px;top:873.67px;font-size:12.5px;line-height:16px;color:#000;transform:scaleX(0.885);transform-origin:100% 0;">0,00</span><span class="t" style="right:520px;top:873.67px;font-size:12.5px;line-height:16px;color:#000;transform:scaleX(0.885);transform-origin:100% 0;">0,00</span><span class="t" style="right:419px;top:873.67px;font-size:12.5px;line-height:16px;color:#000;transform:scaleX(0.885);transform-origin:100% 0;">0,00</span><span class="t" style="right:344px;top:873.67px;font-size:12.5px;line-height:16px;color:#000;transform:scaleX(0.885);transform-origin:100% 0;">0,00</span><svg style="left:1432px;top:876px" width="10" height="12" viewBox="0 0 10 12"><path d="M2.3 5.5L3.3 5.3L6.3 10.2" fill="none" stroke="#f01040" stroke-width="1.25"/><path d="M6.2 10.4L8 0.3" fill="none" stroke="#f01040" stroke-width="0.7" opacity="0.75"/></svg><span class="t" style="right:1381px;top:889.67px;font-size:12.5px;line-height:16px;color:#000;transform:scaleX(0.885);transform-origin:100% 0;">49</span><div class="clip" style="left:484px;top:890px;width:75px;height:16px"><span class="t" style="left:1.8px;top:-0.33px;font-size:12.5px;line-height:16px;color:#000;transform:scaleX(0.885);transform-origin:0 0">2.18</span></div><div class="clip" style="left:560px;top:890px;width:316px;height:16px"><span class="t" style="left:1.7px;top:-0.33px;font-size:12.5px;line-height:16px;color:#000;transform:scaleX(0.885);transform-origin:0 0">Затраты на научно-техническое сопровождение строительства</span></div><span class="t" style="right:757px;top:889.67px;font-size:12.5px;line-height:16px;color:#000;transform:scaleX(0.885);transform-origin:100% 0;">0,00</span><span class="t" style="right:676px;top:889.67px;font-size:12.5px;line-height:16px;color:#000;transform:scaleX(0.885);transform-origin:100% 0;">0,00</span><span class="t" style="right:595px;top:889.67px;font-size:12.5px;line-height:16px;color:#000;transform:scaleX(0.885);transform-origin:100% 0;">0,00</span><span class="t" style="right:520px;top:889.67px;font-size:12.5px;line-height:16px;color:#000;transform:scaleX(0.885);transform-origin:100% 0;">0,00</span><span class="t" style="right:419px;top:889.67px;font-size:12.5px;line-height:16px;color:#000;transform:scaleX(0.885);transform-origin:100% 0;">0,00</span><span class="t" style="right:344px;top:889.67px;font-size:12.5px;line-height:16px;color:#000;transform:scaleX(0.885);transform-origin:100% 0;">0,00</span><svg style="left:1432px;top:892px" width="10" height="12" viewBox="0 0 10 12"><path d="M2.3 5.5L3.3 5.3L6.3 10.2" fill="none" stroke="#f01040" stroke-width="1.25"/><path d="M6.2 10.4L8 0.3" fill="none" stroke="#f01040" stroke-width="0.7" opacity="0.75"/></svg><span class="t" style="right:1381px;top:905.67px;font-size:12.5px;line-height:16px;color:#000;transform:scaleX(0.885);transform-origin:100% 0;">50</span><div class="clip" style="left:484px;top:906px;width:75px;height:16px"><span class="t" style="left:1.8px;top:-0.33px;font-size:12.5px;line-height:16px;color:#000;transform:scaleX(0.885);transform-origin:0 0">2.19</span></div><div class="clip" style="left:560px;top:906px;width:316px;height:16px"><span class="t" style="left:1.7px;top:-0.33px;font-size:12.5px;line-height:16px;color:#000;transform:scaleX(0.885);transform-origin:0 0">Затраты на обеспечение безопасности строящихся объектов</span></div><span class="t" style="right:757px;top:905.67px;font-size:12.5px;line-height:16px;color:#000;transform:scaleX(0.885);transform-origin:100% 0;">0,00</span><span class="t" style="right:676px;top:905.67px;font-size:12.5px;line-height:16px;color:#000;transform:scaleX(0.885);transform-origin:100% 0;">0,00</span><span class="t" style="right:595px;top:905.67px;font-size:12.5px;line-height:16px;color:#000;transform:scaleX(0.885);transform-origin:100% 0;">0,00</span><span class="t" style="right:520px;top:905.67px;font-size:12.5px;line-height:16px;color:#000;transform:scaleX(0.885);transform-origin:100% 0;">0,00</span><span class="t" style="right:419px;top:905.67px;font-size:12.5px;line-height:16px;color:#000;transform:scaleX(0.885);transform-origin:100% 0;">0,00</span><span class="t" style="right:344px;top:905.67px;font-size:12.5px;line-height:16px;color:#000;transform:scaleX(0.885);transform-origin:100% 0;">0,00</span><svg style="left:1432px;top:908px" width="10" height="12" viewBox="0 0 10 12"><path d="M2.3 5.5L3.3 5.3L6.3 10.2" fill="none" stroke="#f01040" stroke-width="1.25"/><path d="M6.2 10.4L8 0.3" fill="none" stroke="#f01040" stroke-width="0.7" opacity="0.75"/></svg><span class="t" style="right:1381px;top:921.67px;font-size:12.5px;line-height:16px;color:#000;transform:scaleX(0.885);transform-origin:100% 0;">51</span><div class="clip" style="left:484px;top:922px;width:75px;height:16px"><span class="t" style="left:1.8px;top:-0.33px;font-size:12.5px;line-height:16px;color:#000;transform:scaleX(0.885);transform-origin:0 0">2.20</span></div><div class="clip" style="left:560px;top:922px;width:316px;height:16px"><span class="t" style="left:1.7px;top:-0.33px;font-size:12.5px;line-height:16px;color:#000;transform:scaleX(0.885);transform-origin:0 0">Затраты на страхование объекта строительства, осуществляемое</span></div><span class="t" style="right:757px;top:921.67px;font-size:12.5px;line-height:16px;color:#000;transform:scaleX(0.885);transform-origin:100% 0;">0,00</span><span class="t" style="right:676px;top:921.67px;font-size:12.5px;line-height:16px;color:#000;transform:scaleX(0.885);transform-origin:100% 0;">0,00</span><span class="t" style="right:595px;top:921.67px;font-size:12.5px;line-height:16px;color:#000;transform:scaleX(0.885);transform-origin:100% 0;">0,00</span><span class="t" style="right:520px;top:921.67px;font-size:12.5px;line-height:16px;color:#000;transform:scaleX(0.885);transform-origin:100% 0;">0,00</span><span class="t" style="right:419px;top:921.67px;font-size:12.5px;line-height:16px;color:#000;transform:scaleX(0.885);transform-origin:100% 0;">0,00</span><span class="t" style="right:344px;top:921.67px;font-size:12.5px;line-height:16px;color:#000;transform:scaleX(0.885);transform-origin:100% 0;">0,00</span><svg style="left:1432px;top:924px" width="10" height="12" viewBox="0 0 10 12"><path d="M2.3 5.5L3.3 5.3L6.3 10.2" fill="none" stroke="#f01040" stroke-width="1.25"/><path d="M6.2 10.4L8 0.3" fill="none" stroke="#f01040" stroke-width="0.7" opacity="0.75"/></svg><span class="t" style="right:1381px;top:937.67px;font-size:12.5px;line-height:16px;color:#000;transform:scaleX(0.885);transform-origin:100% 0;">52</span><div class="clip" style="left:484px;top:938px;width:75px;height:16px"><span class="t" style="left:1.8px;top:-0.33px;font-size:12.5px;line-height:16px;color:#000;transform:scaleX(0.885);transform-origin:0 0">2.21</span></div><div class="clip" style="left:560px;top:938px;width:316px;height:16px"><span class="t" style="left:1.7px;top:-0.33px;font-size:12.5px;line-height:16px;color:#000;transform:scaleX(0.885);transform-origin:0 0">Затраты, связанные с применением технологий информационного</span></div><span class="t" style="right:757px;top:937.67px;font-size:12.5px;line-height:16px;color:#000;transform:scaleX(0.885);transform-origin:100% 0;">0,00</span><span class="t" style="right:676px;top:937.67px;font-size:12.5px;line-height:16px;color:#000;transform:scaleX(0.885);transform-origin:100% 0;">0,00</span><span class="t" style="right:595px;top:937.67px;font-size:12.5px;line-height:16px;color:#000;transform:scaleX(0.885);transform-origin:100% 0;">0,00</span><span class="t" style="right:520px;top:937.67px;font-size:12.5px;line-height:16px;color:#000;transform:scaleX(0.885);transform-origin:100% 0;">0,00</span><span class="t" style="right:419px;top:937.67px;font-size:12.5px;line-height:16px;color:#000;transform:scaleX(0.885);transform-origin:100% 0;">0,00</span><span class="t" style="right:344px;top:937.67px;font-size:12.5px;line-height:16px;color:#000;transform:scaleX(0.885);transform-origin:100% 0;">0,00</span><svg style="left:1432px;top:940px" width="10" height="12" viewBox="0 0 10 12"><path d="M2.3 5.5L3.3 5.3L6.3 10.2" fill="none" stroke="#f01040" stroke-width="1.25"/><path d="M6.2 10.4L8 0.3" fill="none" stroke="#f01040" stroke-width="0.7" opacity="0.75"/></svg><span class="t" style="right:1381px;top:953.67px;font-size:12.5px;line-height:16px;color:#000;transform:scaleX(0.885);transform-origin:100% 0;">53</span><div class="clip" style="left:484px;top:954px;width:75px;height:16px"><span class="t" style="left:1.8px;top:-0.33px;font-size:12.5px;line-height:16px;color:#000;transform:scaleX(0.885);transform-origin:0 0">2.22</span></div><div class="clip" style="left:560px;top:954px;width:316px;height:16px"><span class="t" style="left:1.7px;top:-0.33px;font-size:12.5px;line-height:16px;color:#000;transform:scaleX(0.885);transform-origin:0 0">Затраты заказчика по вводу объектов в эксплуатацию (затраты</span></div><span class="t" style="right:757px;top:953.67px;font-size:12.5px;line-height:16px;color:#000;transform:scaleX(0.885);transform-origin:100% 0;">0,00</span><span class="t" style="right:676px;top:953.67px;font-size:12.5px;line-height:16px;color:#000;transform:scaleX(0.885);transform-origin:100% 0;">0,00</span><span class="t" style="right:595px;top:953.67px;font-size:12.5px;line-height:16px;color:#000;transform:scaleX(0.885);transform-origin:100% 0;">0,00</span><span class="t" style="right:520px;top:953.67px;font-size:12.5px;line-height:16px;color:#000;transform:scaleX(0.885);transform-origin:100% 0;">0,00</span><span class="t" style="right:419px;top:953.67px;font-size:12.5px;line-height:16px;color:#000;transform:scaleX(0.885);transform-origin:100% 0;">0,00</span><span class="t" style="right:344px;top:953.67px;font-size:12.5px;line-height:16px;color:#000;transform:scaleX(0.885);transform-origin:100% 0;">0,00</span><svg style="left:1432px;top:956px" width="10" height="12" viewBox="0 0 10 12"><path d="M2.3 5.5L3.3 5.3L6.3 10.2" fill="none" stroke="#f01040" stroke-width="1.25"/><path d="M6.2 10.4L8 0.3" fill="none" stroke="#f01040" stroke-width="0.7" opacity="0.75"/></svg><span class="t" style="right:1381px;top:969.67px;font-size:12.5px;line-height:16px;color:#000;transform:scaleX(0.885);transform-origin:100% 0;">54</span><div class="clip" style="left:484px;top:970px;width:75px;height:16px"><span class="t" style="left:1.8px;top:-0.33px;font-size:12.5px;line-height:16px;color:#000;transform:scaleX(0.885);transform-origin:0 0">2.23</span></div><div class="clip" style="left:560px;top:970px;width:316px;height:16px"><span class="t" style="left:1.7px;top:-0.33px;font-size:12.5px;line-height:16px;color:#000;transform:scaleX(0.885);transform-origin:0 0">Затраты, связанные с компенсацией подрядным организациям</span></div><span class="t" style="right:757px;top:969.67px;font-size:12.5px;line-height:16px;color:#000;transform:scaleX(0.885);transform-origin:100% 0;">0,00</span><span class="t" style="right:676px;top:969.67px;font-size:12.5px;line-height:16px;color:#000;transform:scaleX(0.885);transform-origin:100% 0;">0,00</span><span class="t" style="right:595px;top:969.67px;font-size:12.5px;line-height:16px;color:#000;transform:scaleX(0.885);transform-origin:100% 0;">0,00</span><span class="t" style="right:520px;top:969.67px;font-size:12.5px;line-height:16px;color:#000;transform:scaleX(0.885);transform-origin:100% 0;">0,00</span><span class="t" style="right:419px;top:969.67px;font-size:12.5px;line-height:16px;color:#000;transform:scaleX(0.885);transform-origin:100% 0;">0,00</span><span class="t" style="right:344px;top:969.67px;font-size:12.5px;line-height:16px;color:#000;transform:scaleX(0.885);transform-origin:100% 0;">0,00</span><svg style="left:1432px;top:972px" width="10" height="12" viewBox="0 0 10 12"><path d="M2.3 5.5L3.3 5.3L6.3 10.2" fill="none" stroke="#f01040" stroke-width="1.25"/><path d="M6.2 10.4L8 0.3" fill="none" stroke="#f01040" stroke-width="0.7" opacity="0.75"/></svg><span class="t" style="left:1465.5px;top:137.67px;font-size:12.5px;line-height:16px;color:#ff0000;transform:scaleX(0.885);transform-origin:0 0;">НПР</span><span class="t" style="left:1465.0px;top:873.67px;font-size:12.5px;line-height:16px;color:#000;transform:scaleX(0.8424);transform-origin:0 0;">(Не зад...</span><div style="left:93.4px;top:76.4px;width:26.4px;height:28px;border:3.1px solid #ff0a14;box-sizing:border-box;"></div><svg style="left:100px;top:40px" width="100" height="60" viewBox="100 40 100 60"><path d="M183.6 51.2L141 77" stroke="#ff0a14" stroke-width="3.3" fill="none"/><path d="M122.9 88.7L138.1 69.9L146.6 83.8Z" fill="#ff0a14"/></svg><div style="left:102px;top:111px;width:96px;height:19px;background:#ffffe1;border:1px solid #868686;box-sizing:border-box;box-shadow:1px 1px 2px rgba(0,0,0,.28);"></div><span class="t" style="left:105.9px;top:112.84px;font-size:12px;line-height:16px;color:#000;transform:scaleX(0.931);transform-origin:0 0;">Выбрать шаблон</span>
</body></html>
